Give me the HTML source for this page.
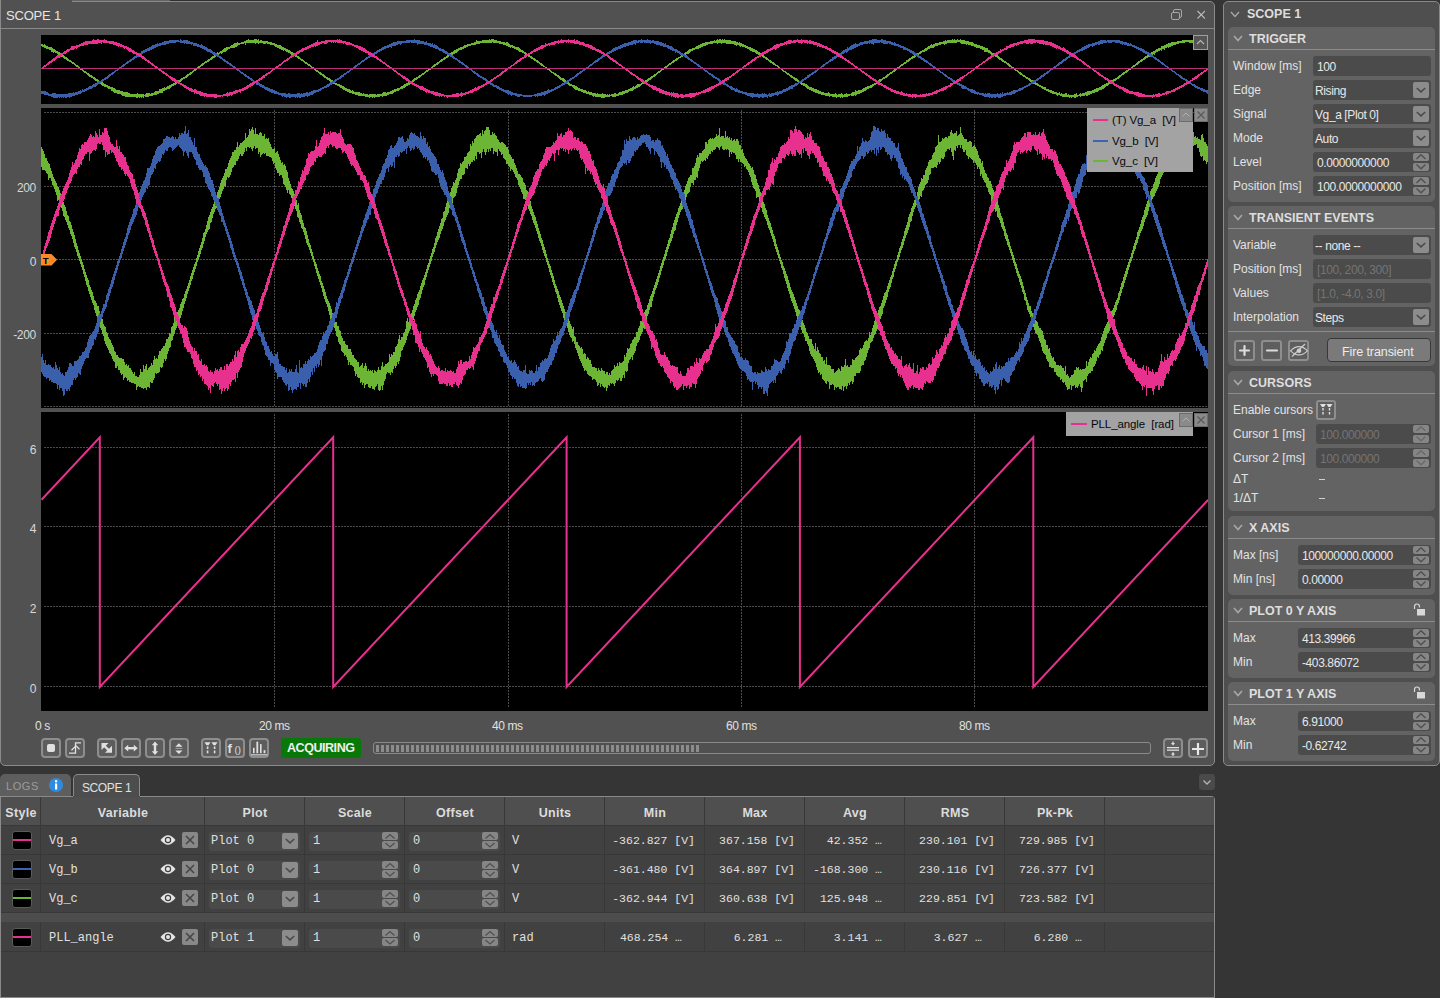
<!DOCTYPE html>
<html><head><meta charset="utf-8">
<style>
*{box-sizing:border-box;margin:0;padding:0}
html,body{width:1440px;height:998px;overflow:hidden;background:#353535;font-family:"Liberation Sans",sans-serif;color:#dcdcdc;position:relative}
.abs{position:absolute}
#scope{position:absolute;left:0;top:1px;width:1215px;height:765px;background:#515151;border:1px solid #8a8a8a;border-radius:0 5px 5px 5px}
.t{position:absolute;white-space:nowrap;line-height:1}
svg{position:absolute;left:0;top:0}
.btn{position:absolute;border:2px solid #8e8e8e;border-radius:4px;background:#5d5d5d}
.yl{font-size:12px;color:#d8d8d8;text-align:right;letter-spacing:-0.3px}
.xl{font-size:12px;color:#e0e0e0;letter-spacing:-0.4px}
.lg{font-size:11.5px;color:#08080c;letter-spacing:-0.1px}
.lb{width:14px;height:14px;background:#8a8a8a;border:1px solid #6c6c6c}
.sh{font-size:12.5px;font-weight:bold;color:#dedede;letter-spacing:0px}
.sec{left:1228px;width:207px;background:#636363;border-radius:5px}
.lbl{font-size:12px;color:#e2e2e2}
.inp{height:20px;background:#4b4b4b;border-radius:3px}
.it{font-size:12px;color:#e8e8e8;letter-spacing:-0.4px}
.itd{font-size:12px;color:#747474;letter-spacing:-0.4px}
.ddb{width:16px;height:16px;background:#8c8c8c;border-radius:2px}
.spb{width:16px;height:8px;background:#868686;border-radius:2px}
.btn2{width:21px;height:21px;border:2px solid #8e8e8e;border-radius:3px;background:#5e5e5e}
.th{font-size:12.5px;font-weight:bold;color:#dcdcdc;letter-spacing:0.3px}
.td{font-family:"Liberation Mono",monospace;font-size:12px;color:#e0e0e0}
</style></head><body>
<div id="scope"></div>
<div class="abs" style="left:0;top:0;width:72px;height:3px;background:#515151;border-left:1px solid #8a8a8a"></div>
<div class="abs" style="left:72px;top:0;width:98px;height:1px;background:#646464"></div>
<div class="abs" style="left:170px;top:0;width:1040px;height:1px;background:#2e2e2e"></div>
<div class="abs" style="left:1px;top:28px;width:1213px;height:1px;background:#8a8a8a"></div>
<div class="t" style="left:6px;top:9px;font-size:13px;color:#e6e6e6;letter-spacing:-0.2px">SCOPE 1</div>
<svg width="1215" height="766" viewBox="0 0 1215 766">
 <rect x="41" y="35" width="1167" height="69" fill="#000"/>
 <rect x="41" y="108" width="1167" height="300" fill="#000"/>
 <rect x="41" y="412" width="1167" height="299" fill="#000"/>
 <g stroke="#4c4c4c" stroke-width="1" stroke-dasharray="2 1" shape-rendering="crispEdges"><line x1="44" y1="112.5" x2="1208.3" y2="112.5"/><line x1="44" y1="186.5" x2="1208.3" y2="186.5"/><line x1="44" y1="259.5" x2="1208.3" y2="259.5"/><line x1="44" y1="333.5" x2="1208.3" y2="333.5"/><line x1="44" y1="406.5" x2="1208.3" y2="406.5"/><line x1="274.5" y1="110" x2="274.5" y2="406"/><line x1="508.5" y1="110" x2="508.5" y2="406"/><line x1="741.5" y1="110" x2="741.5" y2="406"/><line x1="974.5" y1="110" x2="974.5" y2="406"/><line x1="44" y1="447.5" x2="1208.3" y2="447.5"/><line x1="44" y1="526.5" x2="1208.3" y2="526.5"/><line x1="44" y1="606.5" x2="1208.3" y2="606.5"/><line x1="44" y1="686.5" x2="1208.3" y2="686.5"/><line x1="274.5" y1="414" x2="274.5" y2="707"/><line x1="508.5" y1="414" x2="508.5" y2="707"/><line x1="741.5" y1="414" x2="741.5" y2="707"/><line x1="974.5" y1="414" x2="974.5" y2="707"/></g>
 <clipPath id="c0"><rect x="41" y="35" width="1167" height="69"/></clipPath>
 <clipPath id="c1"><rect x="41" y="108" width="1167" height="300"/></clipPath>
 <clipPath id="c2"><rect x="41" y="412" width="1167" height="299"/></clipPath>
 <g clip-path="url(#c0)" fill="none" stroke-width="1" shape-rendering="crispEdges"><path d="M41.5 43.9 V46.4M42.5 44 V47.1M43.5 44.6 V47.2M44.5 44.1 V47.6M45.5 45.1 V48.2M46.5 45.9 V48.6M47.5 45.8 V48.7M48.5 46.5 V49.4M49.5 46.9 V49.7M50.5 47.2 V50.3M51.5 47.4 V51.5M52.5 48 V51.7M53.5 48.8 V52.5M54.5 49 V52.3M55.5 49.9 V53.1M56.5 50.7 V53.3M57.5 51.1 V54.4M58.5 52.1 V54.7M59.5 52.4 V55.3M60.5 53.3 V56.1M61.5 54 V56.7M62.5 54.9 V57.1M63.5 55.1 V58.1M64.5 55.9 V58.5M65.5 56.5 V59.4M66.5 57.1 V59.7M67.5 57.9 V60.5M68.5 58.5 V61M69.5 59.6 V61.7M70.5 60.2 V62.3M71.5 61.1 V63M72.5 61.7 V63.7M73.5 62.2 V64.4M74.5 63 V65.3M75.5 63.6 V65.9M76.5 64.6 V66.6M77.5 65.3 V67.3M78.5 66.2 V68.2M79.5 66.9 V68.8M80.5 67.5 V69.6M81.5 68.3 V70.3M82.5 69 V71.1M83.5 69.7 V71.8M84.5 70.6 V72.5M85.5 71.2 V73.2M86.5 71.9 V74.1M87.5 72.7 V74.8M88.5 73.3 V75.5M89.5 74 V76.5M90.5 74.8 V77M91.5 75.2 V77.7M92.5 76 V78.4M93.5 76.6 V79.4M94.5 77.3 V80M95.5 77.7 V80.9M96.5 78.7 V81.4M97.5 79.2 V82.3M98.5 80.2 V82.6M99.5 80.5 V83.3M100.5 81 V84.3M101.5 81.5 V84.8M102.5 82.1 V85.6M103.5 82.7 V86.1M104.5 83.8 V86.7M105.5 83.8 V87M106.5 84.7 V87.4M107.5 85.3 V87.9M108.5 86.1 V88.5M109.5 86.2 V89.2M110.5 86.6 V89.4M111.5 87 V90.6M112.5 87.2 V91.2M113.5 88 V91.6M114.5 88.4 V92.7M115.5 88.7 V92.5M116.5 89.7 V93.3M117.5 89.5 V93.8M118.5 90.4 V93.8M119.5 90.4 V94.2M120.5 91 V94.4M121.5 90.8 V94.8M122.5 91.3 V95.5M123.5 91.9 V95.8M124.5 91.8 V95.6M125.5 92.1 V96.7M126.5 92.2 V96.6M127.5 92.1 V96.9M128.5 93.2 V97M129.5 92.5 V97.3M130.5 93.5 V96.9M131.5 93.9 V96.9M132.5 93.8 V96.7M133.5 94 V97.1M134.5 93.7 V97.3M135.5 93.9 V97.4M136.5 93.8 V97.8M137.5 93.3 V98.3M138.5 93.9 V97.3M139.5 93.7 V97.7M140.5 94 V97.4M141.5 94.1 V97.7M142.5 94 V97M143.5 94 V98M144.5 94.5 V96.4M145.5 94.2 V96.8M146.5 93.4 V96.8M147.5 93.3 V97M148.5 93.2 V96.7M149.5 93 V96M150.5 93.6 V95.5M151.5 92.7 V95.8M152.5 92.6 V96M153.5 92.5 V95.2M154.5 92.1 V94.7M155.5 90.9 V94.8M156.5 91.2 V94.7M157.5 91 V94.3M158.5 90.5 V93.9M159.5 89.4 V93.3M160.5 89 V92.9M161.5 89 V93.2M162.5 88.3 V92.5M163.5 88.2 V91.4M164.5 86.8 V90.8M165.5 87.5 V90.3M166.5 87 V90.2M167.5 86.3 V89.4M168.5 85.9 V89.4M169.5 85.1 V88.5M170.5 84.8 V87.5M171.5 84.1 V86.8M172.5 84.3 V86.2M173.5 83.4 V85.6M174.5 83.1 V85.2M175.5 82.3 V84.7M176.5 81.7 V84.3M177.5 80.9 V83.4M178.5 80.4 V82.7M179.5 79.7 V82.3M180.5 79 V81.8M181.5 78.2 V80.7M182.5 77.6 V80.4M183.5 77.2 V79.4M184.5 76.5 V79M185.5 75.7 V78.1M186.5 74.9 V77.5M187.5 74.2 V76.8M188.5 73.5 V75.9M189.5 73 V75M190.5 72.3 V74.5M191.5 71.5 V73.7M192.5 70.9 V72.9M193.5 70.2 V72.1M194.5 69.4 V71.2M195.5 68.7 V70.7M196.5 68 V69.8M197.5 67.2 V69.1M198.5 66.4 V68.5M199.5 65.8 V67.5M200.5 64.9 V67M201.5 64.3 V66.2M202.5 63.3 V65.7M203.5 62.8 V65.1M204.5 62.1 V64.3M205.5 61.2 V63.4M206.5 60.6 V62.8M207.5 59.8 V62.1M208.5 59.2 V61.5M209.5 58.6 V60.6M210.5 58 V59.8M211.5 56.7 V59.6M212.5 56.4 V58.8M213.5 55.7 V58.1M214.5 54.6 V57.7M215.5 54.4 V56.7M216.5 53.6 V56M217.5 52.3 V55.3M218.5 52.5 V54.7M219.5 52 V54.2M220.5 51.3 V53.2M221.5 50.8 V53.6M222.5 50 V52.9M223.5 49.4 V52.4M224.5 48.1 V52.4M225.5 47.5 V51.5M226.5 46.8 V50.9M227.5 47 V50.4M228.5 46.9 V49.2M229.5 46.5 V48.5M230.5 45.9 V48.4M231.5 45.1 V48.1M232.5 44.9 V47.6M233.5 44.4 V47.9M234.5 43.2 V47.7M235.5 43.3 V47.1M236.5 43.1 V46.5M237.5 42.4 V46.1M238.5 42.7 V45.3M239.5 42.8 V44.8M240.5 42.5 V44.2M241.5 41.9 V43.8M242.5 41.8 V43.8M243.5 41.6 V43.5M244.5 40.7 V43.4M245.5 40.6 V44.5M246.5 40.1 V43.3M247.5 40 V43.2M248.5 39.4 V43.4M249.5 40.1 V43.3M250.5 40.3 V42.7M251.5 39.9 V42.8M252.5 40 V42.8M253.5 39.8 V42.6M254.5 39.4 V43.3M255.5 39 V43.6M256.5 39.3 V42.8M257.5 39.7 V42.7M258.5 39.1 V44.1M259.5 40.5 V42.5M260.5 40.4 V42.5M261.5 40.2 V42.9M262.5 40.6 V43M263.5 40.6 V44M264.5 40.7 V43.9M265.5 40.5 V44M266.5 41.4 V43.3M267.5 41.4 V43.6M268.5 41.9 V43.9M269.5 41.9 V44.1M270.5 42 V44.5M271.5 41.5 V44.8M272.5 42.5 V45.2M273.5 42.5 V45.4M274.5 43.2 V45.8M275.5 43.7 V47M276.5 44.1 V47.3M277.5 44.5 V47.7M278.5 44.8 V47.9M279.5 45.2 V48.7M280.5 45.1 V49.4M281.5 46.3 V49.6M282.5 46.7 V49.9M283.5 47 V50.6M284.5 48 V50.4M285.5 48.3 V50.7M286.5 49 V51.5M287.5 49.3 V52.1M288.5 50.2 V52.9M289.5 50.2 V53.2M290.5 51.1 V54.3M291.5 51.8 V54.6M292.5 52.2 V55M293.5 52.9 V55.7M294.5 53.4 V56.4M295.5 54.3 V56.9M296.5 55 V57.3M297.5 55.5 V58.3M298.5 56.4 V58.6M299.5 57.1 V59.4M300.5 57.9 V59.8M301.5 58.6 V61.1M302.5 59.3 V61.3M303.5 60.2 V62.1M304.5 60.7 V63M305.5 61.5 V63.7M306.5 62.2 V64.3M307.5 62.7 V65.2M308.5 63.7 V65.6M309.5 64.3 V66.4M310.5 65.3 V67M311.5 65.8 V67.7M312.5 66.5 V68.6M313.5 67.3 V69.4M314.5 68 V70.1M315.5 68.8 V70.8M316.5 69.7 V71.6M317.5 70.1 V72.4M318.5 70.9 V73.2M319.5 71.5 V73.9M320.5 72.3 V74.7M321.5 72.9 V75.3M322.5 73.6 V75.9M323.5 74.3 V76.7M324.5 75.1 V77.5M325.5 75.9 V77.9M326.5 76.5 V79.2M327.5 77.2 V79.6M328.5 77.9 V80.3M329.5 78.2 V81.1M330.5 78.8 V81.9M331.5 80 V82.4M332.5 79.9 V82.8M333.5 80.8 V83.6M334.5 81.6 V84M335.5 82.6 V84.5M336.5 83.1 V85.3M337.5 83.7 V85.6M338.5 83.8 V86.4M339.5 83.9 V87.3M340.5 84.9 V88.3M341.5 85.3 V88.4M342.5 85.7 V89.4M343.5 86.4 V89.6M344.5 87.2 V90.2M345.5 87.7 V90.7M346.5 87.9 V91.2M347.5 88.5 V91.5M348.5 89 V92.3M349.5 89.4 V92.7M350.5 89.8 V93.2M351.5 90.6 V92.9M352.5 89.9 V94.3M353.5 91.1 V94.4M354.5 91.6 V94.1M355.5 91.8 V94.7M356.5 91.8 V94.9M357.5 92.4 V94.8M358.5 92.2 V96.4M359.5 92.4 V96.3M360.5 93.1 V96.1M361.5 93.3 V95.9M362.5 93.6 V96.4M363.5 93.2 V96.3M364.5 94.2 V96.2M365.5 94.2 V96.7M366.5 93.6 V97M367.5 93.6 V97.4M368.5 94.5 V97.3M369.5 94.4 V98M370.5 94.4 V97.3M371.5 93.9 V97.4M372.5 94.2 V97.9M373.5 93.8 V97.1M374.5 94 V97.7M375.5 94.4 V97.2M376.5 94.5 V97.3M377.5 94.1 V96.8M378.5 93.6 V96.5M379.5 93.7 V97.4M380.5 93.6 V96.4M381.5 93.6 V96.2M382.5 92.6 V96.8M383.5 91.9 V96.4M384.5 92.3 V96M385.5 91.9 V96.2M386.5 92.5 V95.8M387.5 92.3 V94.9M388.5 91.9 V94.6M389.5 91.7 V93.9M390.5 91.2 V94M391.5 90.9 V93.5M392.5 89.9 V94.1M393.5 89.9 V92.7M394.5 89.3 V92.2M395.5 88.9 V92M396.5 89 V91.2M397.5 88.2 V91M398.5 87.7 V90.9M399.5 87.8 V89.9M400.5 87.1 V89.3M401.5 85.5 V88.9M402.5 85.6 V88.8M403.5 85.1 V87.9M404.5 84.3 V87.9M405.5 83.5 V87.2M406.5 83 V86.1M407.5 82.9 V86.1M408.5 82.4 V85.1M409.5 81.6 V84.6M410.5 81.1 V83.7M411.5 80.5 V82.9M412.5 79.6 V82.3M413.5 79 V81.9M414.5 78.4 V81.3M415.5 78 V80.4M416.5 77 V79.7M417.5 76.6 V79M418.5 76 V78.4M419.5 75.4 V77.7M420.5 74.6 V76.9M421.5 73.9 V76M422.5 73 V75.4M423.5 72.5 V74.6M424.5 71.7 V73.8M425.5 71 V73.4M426.5 70.4 V72.3M427.5 69.6 V71.8M428.5 68.9 V71M429.5 68.2 V70M430.5 67.5 V69.5M431.5 66.8 V68.6M432.5 66.1 V68M433.5 65.1 V67.2M434.5 64.4 V66.5M435.5 63.9 V65.8M436.5 63.1 V65.2M437.5 62.1 V64.5M438.5 61.5 V63.6M439.5 60.9 V63.1M440.5 60.2 V62.2M441.5 59.3 V61.5M442.5 58.5 V61M443.5 57.8 V60.2M444.5 57.3 V59.5M445.5 56.6 V59M446.5 55.8 V58.1M447.5 54.5 V57.6M448.5 54.2 V56.9M449.5 53.4 V56.3M450.5 52.9 V56.2M451.5 51.9 V55.7M452.5 51.6 V55M453.5 50.6 V54.4M454.5 50 V53.9M455.5 50.1 V53M456.5 49.2 V52.5M457.5 48.7 V52.3M458.5 48.3 V51M459.5 48 V50.4M460.5 47.4 V50.3M461.5 46.9 V49.7M462.5 46.5 V49.2M463.5 46 V49M464.5 45.4 V48.1M465.5 44.7 V47.8M466.5 44.6 V47.4M467.5 44.4 V46.9M468.5 44 V46.3M469.5 43.7 V45.6M470.5 43.5 V45.6M471.5 43.1 V45.3M472.5 42.8 V45.1M473.5 42.6 V44.7M474.5 42 V44.9M475.5 42 V45.4M476.5 40 V44.4M477.5 41.2 V44.3M478.5 40.8 V43.6M479.5 40.7 V43.6M480.5 40.6 V43.1M481.5 40.6 V43.1M482.5 40.2 V43.4M483.5 39.6 V43.4M484.5 40.3 V43M485.5 39.9 V43M486.5 40.1 V43M487.5 39.9 V43M488.5 39.5 V43M489.5 39.1 V42.9M490.5 39.7 V43.2M491.5 39.2 V42.8M492.5 39.4 V42.4M493.5 38.8 V42.7M494.5 39.6 V42.9M495.5 39.8 V42.8M496.5 39.9 V42.9M497.5 40.7 V42.7M498.5 40.8 V43.1M499.5 41.1 V43.7M500.5 41.2 V44M501.5 41.6 V44.4M502.5 41.5 V44.4M503.5 41.9 V44.9M504.5 41.9 V44.9M505.5 42.7 V45.3M506.5 42.4 V45.6M507.5 42.4 V46.1M508.5 42.9 V46.5M509.5 44 V46.6M510.5 44.5 V47.5M511.5 45 V47.3M512.5 45.3 V47.5M513.5 45.7 V48.2M514.5 45.8 V48.8M515.5 46.6 V49.4M516.5 46.8 V49.5M517.5 47.1 V50.2M518.5 47.3 V51M519.5 47.8 V52M520.5 49.1 V52.1M521.5 49.7 V52.3M522.5 50.3 V52.6M523.5 51 V53.4M524.5 51.6 V54M525.5 51.6 V54.7M526.5 52.8 V55.1M527.5 53.7 V55.8M528.5 54.3 V56.5M529.5 55 V57.1M530.5 55.6 V57.7M531.5 56.1 V58.5M532.5 56.9 V59.2M533.5 57.7 V60.2M534.5 58 V60.7M535.5 58.9 V61.3M536.5 59.7 V62M537.5 60.3 V62.6M538.5 61.2 V63.4M539.5 61.8 V64.2M540.5 62.5 V64.8M541.5 63.3 V65.5M542.5 64 V66M543.5 64.9 V66.8M544.5 65.7 V67.4M545.5 66.5 V68.3M546.5 67.2 V69.1M547.5 67.9 V69.6M548.5 68.7 V70.3M549.5 69.4 V71.4M550.5 69.9 V72M551.5 70.6 V72.7M552.5 71.5 V73.3M553.5 72.1 V74.3M554.5 72.6 V74.8M555.5 73.2 V75.6M556.5 74.1 V76.4M557.5 74.8 V77.4M558.5 75 V77.8M559.5 75.7 V78.6M560.5 76.6 V79.6M561.5 77.5 V80.1M562.5 78.2 V81M563.5 78.3 V81.5M564.5 79.2 V82.3M565.5 80.3 V83M566.5 80.8 V83.5M567.5 81.4 V84M568.5 81.6 V84.9M569.5 82.6 V85.7M570.5 83.6 V85.5M571.5 83.8 V86.3M572.5 84.5 V87M573.5 85 V88M574.5 85.1 V88.5M575.5 85.5 V89.6M576.5 86 V90.3M577.5 87 V90.4M578.5 87.6 V90.8M579.5 87.6 V91.2M580.5 88.6 V91.2M581.5 89.3 V92M582.5 89 V92.4M583.5 90.1 V92.7M584.5 89.6 V92.5M585.5 89.6 V93.1M586.5 90.8 V93.6M587.5 91.5 V93.6M588.5 91.1 V94.1M589.5 92 V94.9M590.5 91.9 V95M591.5 92 V95.4M592.5 92.8 V95.9M593.5 92.6 V96.5M594.5 93.1 V96.2M595.5 93.4 V96.5M596.5 93.7 V97.2M597.5 92.6 V97.2M598.5 93.9 V96.7M599.5 94 V96.9M600.5 94 V97.2M601.5 94.2 V97.9M602.5 93.3 V97.6M603.5 93.7 V98M604.5 93.6 V98.2M605.5 93.5 V97.4M606.5 94.6 V97.3M607.5 94.4 V96.8M608.5 94.6 V97.2M609.5 94.2 V96.6M610.5 94.5 V96.4M611.5 94.2 V96.3M612.5 93.7 V96.9M613.5 93.5 V96.8M614.5 93.2 V96.5M615.5 93.4 V96.8M616.5 93.5 V95.8M617.5 93.6 V95.7M618.5 92.9 V95.6M619.5 92.4 V95M620.5 92.2 V95.1M621.5 91.9 V94.7M622.5 91.2 V94.7M623.5 91.2 V94.1M624.5 90.6 V93.6M625.5 90.4 V92.9M626.5 90.1 V92.9M627.5 89.5 V93.1M628.5 89.2 V92M629.5 88.9 V91.4M630.5 87.6 V91.1M631.5 88 V91M632.5 86.5 V90.5M633.5 86.4 V90M634.5 86.5 V89.2M635.5 85.9 V88.8M636.5 85.1 V88.4M637.5 84.3 V87.5M638.5 83.8 V86.9M639.5 83.8 V86.5M640.5 83.5 V85.8M641.5 82.6 V85.2M642.5 82.3 V84.4M643.5 81.6 V83.5M644.5 80.6 V83.1M645.5 80.4 V82.6M646.5 79.6 V82M647.5 78.5 V81.9M648.5 78.2 V81M649.5 77.5 V80.2M650.5 76.5 V79.5M651.5 76 V78.7M652.5 75.6 V77.8M653.5 75 V77M654.5 74 V76.5M655.5 73.6 V75.6M656.5 72.6 V75M657.5 72.1 V74M658.5 71.2 V73.4M659.5 70.5 V72.5M660.5 70 V72.1M661.5 69.2 V71.3M662.5 68.6 V70.3M663.5 67.7 V69.8M664.5 66.9 V69M665.5 66.2 V68.3M666.5 65.6 V67.6M667.5 64.8 V66.9M668.5 63.9 V66M669.5 63.2 V65.3M670.5 62.6 V64.5M671.5 61.8 V63.8M672.5 61.2 V63.2M673.5 60.4 V62.6M674.5 59.8 V61.9M675.5 58.8 V61.4M676.5 58.1 V60.5M677.5 57.6 V59.8M678.5 56.7 V59.2M679.5 56.5 V58.3M680.5 55.7 V57.7M681.5 55.2 V57.2M682.5 54.2 V56.5M683.5 53.7 V55.8M684.5 52.7 V55.5M685.5 51.8 V54.8M686.5 51.6 V54.4M687.5 50.9 V53.9M688.5 49.9 V53.9M689.5 49.4 V52.7M690.5 48.8 V51.7M691.5 48.8 V51.2M692.5 48.2 V50.6M693.5 47.9 V50.3M694.5 47.5 V49.7M695.5 46.7 V49.1M696.5 46.2 V49M697.5 45.7 V48.6M698.5 44.7 V48.5M699.5 44.5 V47.9M700.5 44.1 V47.8M701.5 44.1 V46.9M702.5 43.3 V46.5M703.5 43.2 V45.8M704.5 43 V45.9M705.5 42.1 V45.7M706.5 42.3 V45.2M707.5 41.8 V45M708.5 41.8 V44.4M709.5 41.6 V44.2M710.5 40.9 V44.2M711.5 40.8 V43.6M712.5 40.8 V43.5M713.5 40.5 V43.3M714.5 40.1 V42.8M715.5 40.6 V42.8M716.5 39.8 V43.1M717.5 39.3 V43.5M718.5 39.5 V43.1M719.5 38.7 V43M720.5 39.2 V43.1M721.5 39.8 V44.1M722.5 39.4 V42.9M723.5 40 V42.8M724.5 39.3 V42.5M725.5 39.6 V43M726.5 39.7 V43.5M727.5 39.6 V43.5M728.5 40.3 V43.5M729.5 39.7 V43.6M730.5 40.3 V43.5M731.5 40.9 V43.8M732.5 40.6 V44M733.5 40.7 V44M734.5 40.8 V44.9M735.5 40.7 V44.9M736.5 41.8 V45.5M737.5 42.4 V44.9M738.5 42.7 V44.9M739.5 42.3 V46.1M740.5 43.2 V46.7M741.5 43.4 V46.3M742.5 43.7 V46.8M743.5 44.4 V46.8M744.5 44.9 V47.4M745.5 45.3 V47.9M746.5 45.6 V48.3M747.5 46.3 V48.8M748.5 46.6 V49M749.5 46.8 V49.8M750.5 47.3 V50.5M751.5 47.9 V50.6M752.5 48.3 V51.8M753.5 48.8 V52.3M754.5 49.2 V52.4M755.5 50.2 V52.9M756.5 50.4 V53.7M757.5 51.2 V53.9M758.5 52.1 V54.5M759.5 52.3 V55.4M760.5 53.2 V55.8M761.5 53.7 V56.4M762.5 54.4 V57M763.5 55.4 V57.7M764.5 55.6 V58.4M765.5 56.7 V59M766.5 57.2 V59.6M767.5 58.1 V60.4M768.5 58.6 V61.1M769.5 59.5 V61.8M770.5 60.1 V62.5M771.5 60.6 V63.2M772.5 61.6 V63.7M773.5 62.4 V64.5M774.5 63.1 V65.2M775.5 63.8 V65.8M776.5 64.5 V66.4M777.5 65.4 V67.3M778.5 66.1 V68M779.5 66.8 V68.8M780.5 67.5 V69.4M781.5 68.4 V70.2M782.5 68.9 V70.9M783.5 69.6 V71.6M784.5 70.5 V72.4M785.5 71.2 V73.2M786.5 71.9 V73.9M787.5 72.5 V74.7M788.5 73 V75.3M789.5 73.9 V76.1M790.5 74.5 V76.9M791.5 75.1 V77.9M792.5 75.6 V78.3M793.5 76.5 V79.1M794.5 77 V80.1M795.5 78 V80.6M796.5 78.3 V81M797.5 79.2 V82.2M798.5 80 V82.6M799.5 80.6 V83.3M800.5 81.2 V83.7M801.5 81.7 V84.6M802.5 82.8 V85M803.5 83.2 V85.6M804.5 83.4 V86.2M805.5 84.1 V87.1M806.5 84.2 V87.7M807.5 85 V88.5M808.5 85.9 V89.3M809.5 86.5 V89.5M810.5 86.5 V89.7M811.5 87.4 V90.7M812.5 87.5 V91.3M813.5 87.6 V91.9M814.5 88.5 V92.3M815.5 88.6 V92.8M816.5 89.2 V92.8M817.5 90 V93.3M818.5 90.1 V94M819.5 90.6 V93.8M820.5 91.2 V94.3M821.5 91.5 V94.6M822.5 91.9 V94.9M823.5 92.4 V94.7M824.5 92.8 V94.7M825.5 92.9 V95.9M826.5 92.9 V96.4M827.5 92.6 V96.2M828.5 91.5 V96.1M829.5 93.2 V96.5M830.5 93.7 V96.3M831.5 94 V96.3M832.5 93.7 V97M833.5 93.8 V97.2M834.5 93.5 V97.2M835.5 93 V97.2M836.5 93.5 V98M837.5 94.5 V97.3M838.5 94 V97M839.5 94 V96.9M840.5 93.8 V98.1M841.5 93 V97.1M842.5 94.1 V97.5M843.5 94.6 V97.2M844.5 93.8 V97M845.5 93.8 V97.4M846.5 93.4 V96.6M847.5 94.1 V96.6M848.5 94.1 V96.1M849.5 94 V95.7M850.5 93.6 V95.2M851.5 92.8 V95.5M852.5 92.4 V95.7M853.5 91.7 V95.8M854.5 91.6 V95.4M855.5 90.4 V95.7M856.5 91 V94.8M857.5 90.5 V94.4M858.5 90.3 V93.6M859.5 90.2 V93.6M860.5 89.6 V92.6M861.5 89.6 V92.5M862.5 88.8 V91.6M863.5 88.3 V92M864.5 87.7 V90.7M865.5 87.4 V90.6M866.5 86.8 V90.1M867.5 86.2 V89.2M868.5 86.2 V88.9M869.5 85.8 V88.3M870.5 85.1 V87.9M871.5 84.8 V87.6M872.5 84.2 V86.9M873.5 83.8 V86.1M874.5 83 V85.3M875.5 82.5 V84.8M876.5 81.4 V84.3M877.5 80.7 V83.9M878.5 80 V82.9M879.5 79 V82.4M880.5 78.6 V81.6M881.5 78.6 V80.8M882.5 77.5 V80.4M883.5 77.2 V79.4M884.5 76.6 V78.8M885.5 75.8 V78.1M886.5 75 V77.7M887.5 74.3 V76.7M888.5 73.6 V75.9M889.5 72.9 V75.2M890.5 72.2 V74.4M891.5 71.6 V73.7M892.5 70.7 V72.9M893.5 70.2 V72.1M894.5 69.4 V71.5M895.5 68.9 V70.6M896.5 68.2 V69.8M897.5 67.4 V69.2M898.5 66.6 V68.5M899.5 65.6 V67.9M900.5 64.9 V67M901.5 64.2 V66.3M902.5 63.6 V65.5M903.5 62.8 V65M904.5 62.2 V64M905.5 61.5 V63.6M906.5 60.4 V62.8M907.5 59.7 V62.1M908.5 59.1 V61.5M909.5 58.2 V61M910.5 57.6 V60.3M911.5 56.5 V59.4M912.5 56.4 V59M913.5 55.7 V58.4M914.5 54.8 V57.7M915.5 54.4 V56.7M916.5 53.7 V56M917.5 53 V55.9M918.5 52.7 V54.8M919.5 51.9 V54.2M920.5 51 V53.7M921.5 50.5 V53.3M922.5 50 V52.4M923.5 49.6 V51.8M924.5 49.1 V51.5M925.5 48 V50.7M926.5 47.9 V50.8M927.5 46.8 V49.9M928.5 45.6 V49.3M929.5 46.1 V49.4M930.5 45.4 V48.4M931.5 44.3 V48.3M932.5 44.5 V47.8M933.5 44.2 V47.7M934.5 44.1 V47.3M935.5 43.4 V46.4M936.5 43.4 V46.2M937.5 42.7 V45.8M938.5 42.8 V45.2M939.5 42.4 V44.6M940.5 42 V44.8M941.5 41.9 V44.2M942.5 41.5 V43.9M943.5 41.3 V43.8M944.5 40.6 V44.9M945.5 40 V43.8M946.5 40.6 V43.6M947.5 40.3 V43.4M948.5 40.3 V43.4M949.5 39.9 V42.9M950.5 39.9 V42.7M951.5 40.1 V42.7M952.5 39.4 V42.7M953.5 39.6 V42.7M954.5 38.6 V42.6M955.5 39.8 V42.7M956.5 39.8 V43.2M957.5 39.2 V42.4M958.5 40 V42.1M959.5 39.5 V42.1M960.5 39.2 V42.7M961.5 40 V43.7M962.5 39.7 V44.1M963.5 40.4 V43.9M964.5 40.2 V44.3M965.5 40.7 V43.7M966.5 40.7 V44.7M967.5 41.2 V44.4M968.5 41.1 V45.4M969.5 41.6 V45.3M970.5 41.9 V44.8M971.5 42.1 V45.5M972.5 42.2 V45.9M973.5 42.7 V46.3M974.5 43.6 V46.5M975.5 43.7 V47.2M976.5 43.8 V47.7M977.5 44.9 V48M978.5 44.9 V47.6M979.5 45.4 V48.1M980.5 46 V48.9M981.5 46.2 V49M982.5 46.3 V49.5M983.5 46.7 V50.3M984.5 47 V51.7M985.5 48 V51.9M986.5 48.4 V52M987.5 48.1 V52.3M988.5 49.6 V53.3M989.5 50.2 V53.3M990.5 51.4 V53.7M991.5 51.9 V55M992.5 52.5 V55M993.5 53 V55.9M994.5 53.7 V56.4M995.5 54.4 V56.9M996.5 55 V57.4M997.5 55.4 V58.4M998.5 56 V58.9M999.5 56.7 V59.5M1000.5 57.5 V60.4M1001.5 58.3 V60.9M1002.5 59.2 V61.5M1003.5 59.8 V62.3M1004.5 60.5 V62.7M1005.5 61.3 V63.3M1006.5 61.9 V64.1M1007.5 62.7 V65M1008.5 63.3 V65.8M1009.5 64.3 V66.5M1010.5 65.1 V67M1011.5 65.8 V67.8M1012.5 66.5 V68.5M1013.5 67.2 V69.3M1014.5 68.1 V69.8M1015.5 68.7 V70.6M1016.5 69.6 V71.3M1017.5 70.1 V72.4M1018.5 70.7 V73.1M1019.5 71.5 V73.9M1020.5 72.4 V74.6M1021.5 72.9 V75.2M1022.5 73.7 V76M1023.5 74.5 V76.7M1024.5 75.1 V77.3M1025.5 75.9 V77.9M1026.5 76.5 V78.7M1027.5 77 V79.3M1028.5 77.9 V79.9M1029.5 78.3 V80.9M1030.5 78.7 V81.5M1031.5 79.7 V82.5M1032.5 80.3 V83M1033.5 80.4 V83.7M1034.5 81.4 V84.3M1035.5 82.2 V84.7M1036.5 83.1 V85.4M1037.5 83.1 V85.8M1038.5 83.6 V86.3M1039.5 84.9 V86.8M1040.5 85.3 V87.4M1041.5 85.7 V87.9M1042.5 86.3 V88.8M1043.5 86.8 V89M1044.5 87 V89.9M1045.5 87.3 V90.2M1046.5 88.6 V90.5M1047.5 88.7 V90.9M1048.5 89.3 V91.5M1049.5 89.8 V91.8M1050.5 90 V92.5M1051.5 90.2 V93.1M1052.5 90.6 V93.5M1053.5 91.2 V93.7M1054.5 91.7 V94M1055.5 91.7 V94.3M1056.5 92.4 V94.7M1057.5 92.7 V95.9M1058.5 92.9 V94.8M1059.5 91.9 V95.4M1060.5 93.5 V95.7M1061.5 93.3 V95.9M1062.5 93.7 V96.8M1063.5 93.5 V96.5M1064.5 93.6 V97.3M1065.5 93.3 V97.3M1066.5 93.4 V96.9M1067.5 94.5 V97M1068.5 94.2 V97.3M1069.5 94.6 V97.6M1070.5 94.7 V97.4M1071.5 94.8 V97.8M1072.5 94.5 V97.4M1073.5 94.6 V97.4M1074.5 94.4 V97.8M1075.5 94.3 V97.5M1076.5 93.4 V97M1077.5 94.8 V96.7M1078.5 94.6 V96.3M1079.5 94 V96.2M1080.5 93.4 V96.5M1081.5 93.5 V96.2M1082.5 92.9 V95.9M1083.5 92.8 V96.3M1084.5 92.5 V96.2M1085.5 92.4 V95.3M1086.5 92.2 V95.7M1087.5 91.2 V95.9M1088.5 91.2 V94.9M1089.5 90.7 V95M1090.5 91.1 V94.1M1091.5 90.8 V93.8M1092.5 90.1 V93.4M1093.5 89.6 V93.4M1094.5 89.2 V92.7M1095.5 89.4 V92M1096.5 88.3 V91.7M1097.5 88.3 V91.5M1098.5 88.1 V90.5M1099.5 87 V90.3M1100.5 86.6 V89.6M1101.5 85.8 V89.6M1102.5 85.3 V89.4M1103.5 84.6 V88.7M1104.5 84.1 V87.8M1105.5 83.9 V87M1106.5 83.4 V86.4M1107.5 82.7 V86M1108.5 82.4 V85.1M1109.5 81.9 V84.4M1110.5 81.3 V84.1M1111.5 80.4 V83.5M1112.5 79.9 V82.7M1113.5 78.8 V82.1M1114.5 78.5 V81.3M1115.5 78.1 V80.7M1116.5 77.6 V80M1117.5 76.6 V79.3M1118.5 75.6 V78.6M1119.5 75.1 V77.8M1120.5 74.6 V77.1M1121.5 73.7 V76.4M1122.5 73.2 V75.4M1123.5 72.3 V74.7M1124.5 72 V74.1M1125.5 71 V73.2M1126.5 70.4 V72.5M1127.5 69.7 V71.7M1128.5 69.1 V70.9M1129.5 68.3 V70.2M1130.5 67.7 V69.5M1131.5 66.9 V68.7M1132.5 66.2 V67.9M1133.5 65.4 V67.3M1134.5 64.7 V66.6M1135.5 63.8 V65.9M1136.5 63 V65.3M1137.5 62.2 V64.5M1138.5 61.4 V63.7M1139.5 60.8 V63.2M1140.5 60.1 V62.4M1141.5 59.4 V61.5M1142.5 58.9 V60.9M1143.5 57.7 V60.3M1144.5 57.2 V59.5M1145.5 56.3 V59.2M1146.5 55.8 V58.4M1147.5 54.8 V57.8M1148.5 54.1 V57.2M1149.5 53.6 V56.8M1150.5 52.8 V56.1M1151.5 52 V55.5M1152.5 51.9 V55.1M1153.5 50.6 V54.1M1154.5 50.5 V54.6M1155.5 49.6 V52.8M1156.5 49.4 V52.3M1157.5 49 V51.6M1158.5 48.3 V50.9M1159.5 47.7 V50.8M1160.5 47.5 V50.3M1161.5 46.1 V50.7M1162.5 46 V49.4M1163.5 45.7 V49M1164.5 45 V49.8M1165.5 44.8 V48.2M1166.5 44.3 V47.7M1167.5 44.3 V47.2M1168.5 43 V47.5M1169.5 42.5 V46.9M1170.5 42.7 V47M1171.5 41.7 V46.4M1172.5 42.4 V45.5M1173.5 42.4 V44.8M1174.5 41.9 V44.6M1175.5 41.5 V45M1176.5 41.6 V44.2M1177.5 41.4 V43.6M1178.5 41 V43.8M1179.5 41.1 V43M1180.5 40.7 V42.9M1181.5 40.5 V43.2M1182.5 40 V43M1183.5 40.4 V42.5M1184.5 40.2 V42.8M1185.5 40.2 V42.3M1186.5 40.3 V42M1187.5 39.9 V42.1M1188.5 40 V42.4M1189.5 39.7 V42.8M1190.5 40.1 V42.5M1191.5 40.1 V42.9M1192.5 39.9 V42.6M1193.5 40.4 V42.5M1194.5 40.3 V42.5M1195.5 40.3 V43.3M1196.5 40.9 V44M1197.5 41 V43.1M1198.5 40.7 V44M1199.5 40.7 V44.5M1200.5 40.7 V44.5M1201.5 41.1 V44.5M1202.5 40.7 V44.5M1203.5 41.6 V44.9M1204.5 42.1 V45.1M1205.5 42.9 V44.8M1206.5 43.2 V45M1207.5 43.6 V45.4" stroke="#6cb535"/><path d="M41.5 90.9 V93.6M42.5 90.5 V93.8M43.5 91.1 V94M44.5 91.2 V95.1M45.5 91.4 V95.4M46.5 92 V95.2M47.5 92.4 V95.2M48.5 93 V95.5M49.5 93.6 V95.6M50.5 93.7 V96.1M51.5 93.9 V96.5M52.5 92.9 V97M53.5 93 V98.3M54.5 92.7 V97.5M55.5 93.3 V98.3M56.5 93.5 V98.3M57.5 94.1 V97.5M58.5 93.9 V97.2M59.5 94.2 V97.8M60.5 94.2 V97.2M61.5 94.2 V97.5M62.5 94.1 V97.4M63.5 93.7 V97.8M64.5 93.9 V97.1M65.5 94 V98M66.5 93.7 V97.6M67.5 93.6 V96.9M68.5 93.2 V97.3M69.5 92.8 V97.6M70.5 92.9 V97.2M71.5 92.6 V96.9M72.5 93 V96.1M73.5 92.4 V96.1M74.5 92.8 V95.7M75.5 91.9 V95.4M76.5 91.6 V95.2M77.5 91.7 V94.9M78.5 91.2 V94.3M79.5 90.6 V94M80.5 90.3 V94M81.5 90.5 V93M82.5 88.9 V92.4M83.5 89.7 V92M84.5 89 V91.5M85.5 88.8 V91.4M86.5 88 V91.4M87.5 88 V90.2M88.5 86.8 V90.1M89.5 86.2 V89.3M90.5 86.3 V88.9M91.5 85.7 V88.5M92.5 85.3 V88.1M93.5 84.3 V87.3M94.5 83.9 V86.7M95.5 83.1 V86.6M96.5 82.8 V85.8M97.5 82 V85.4M98.5 81.4 V84.3M99.5 80.8 V83.8M100.5 80.6 V82.9M101.5 79.8 V82.3M102.5 78.9 V82M103.5 78.6 V80.8M104.5 77.9 V80.4M105.5 77.3 V80M106.5 76.7 V79M107.5 75.8 V78.5M108.5 74.9 V77.9M109.5 74.2 V77.1M110.5 73.5 V76.3M111.5 72.9 V75.3M112.5 72.3 V74.6M113.5 71.7 V74M114.5 71 V73.2M115.5 70.4 V72.4M116.5 69.7 V71.4M117.5 68.9 V70.8M118.5 68.1 V69.9M119.5 67.4 V69.2M120.5 66.8 V68.5M121.5 66 V67.8M122.5 64.9 V67.2M123.5 64.4 V66.6M124.5 63.8 V65.7M125.5 62.8 V65.1M126.5 62.1 V64.2M127.5 61.4 V63.7M128.5 60.8 V62.9M129.5 60.1 V62.4M130.5 59.2 V61.6M131.5 58.5 V61M132.5 57.8 V60.1M133.5 57.1 V59.9M134.5 56.1 V58.8M135.5 55.5 V58.4M136.5 54.9 V57.6M137.5 54 V57.1M138.5 53.6 V56.5M139.5 52.5 V56M140.5 52.5 V54.9M141.5 51.4 V54.8M142.5 51.2 V53.8M143.5 49.7 V53.4M144.5 49.7 V53M145.5 48.5 V52M146.5 48.6 V51.5M147.5 48.3 V51.3M148.5 47.7 V51.1M149.5 47.4 V50.6M150.5 46.8 V49.9M151.5 46.4 V49.5M152.5 45 V49.2M153.5 45 V48.6M154.5 44.5 V48.1M155.5 43.9 V48M156.5 43.8 V47.4M157.5 43.4 V46.8M158.5 43.5 V46.1M159.5 43.4 V45.7M160.5 42.5 V45.8M161.5 42.5 V45.4M162.5 42.2 V44.9M163.5 41.5 V44.9M164.5 41.3 V44.7M165.5 41.1 V44.6M166.5 41.1 V44M167.5 41.1 V44M168.5 40.8 V44.4M169.5 40.3 V43M170.5 39.6 V42.9M171.5 40.2 V42.9M172.5 39.8 V42.7M173.5 40 V42.9M174.5 39.6 V42.9M175.5 39.6 V42.5M176.5 40.3 V42.1M177.5 40.3 V41.8M178.5 40.3 V42M179.5 40.6 V42M180.5 39.4 V42.6M181.5 40.1 V42.9M182.5 40.5 V42.7M183.5 39.9 V42.9M184.5 39.6 V43.8M185.5 40.3 V43.2M186.5 40.3 V44.4M187.5 39.7 V44M188.5 40.5 V43.9M189.5 41.2 V43.8M190.5 41.8 V43.8M191.5 41.8 V44.6M192.5 42.1 V44.4M193.5 42.7 V45.7M194.5 42.9 V46M195.5 42.5 V46.3M196.5 43.1 V46.2M197.5 43.5 V46.6M198.5 44.2 V47.1M199.5 44.5 V47.4M200.5 45.1 V47.8M201.5 44.4 V47.8M202.5 45.2 V48.6M203.5 46.1 V49.2M204.5 46.3 V49.9M205.5 47.4 V49.8M206.5 47.4 V50.8M207.5 47.7 V51.5M208.5 48.7 V52.1M209.5 49.2 V52.4M210.5 49.2 V53.1M211.5 50.1 V53.3M212.5 50.9 V54M213.5 51.6 V54.6M214.5 52.1 V54.7M215.5 53.1 V55.7M216.5 53.4 V56M217.5 53.6 V57.2M218.5 54.7 V57.3M219.5 55.6 V58.3M220.5 56.1 V58.5M221.5 57 V59.2M222.5 57.9 V60.2M223.5 58.5 V60.7M224.5 59.3 V61.6M225.5 59.9 V62M226.5 60.5 V62.9M227.5 61.1 V63.7M228.5 62 V64.2M229.5 62.6 V64.9M230.5 63.2 V65.6M231.5 64.1 V66.3M232.5 65.1 V66.9M233.5 65.7 V67.8M234.5 66.4 V68.5M235.5 67.2 V69.1M236.5 67.8 V69.8M237.5 68.8 V70.5M238.5 69.3 V71.3M239.5 70.1 V72.1M240.5 70.9 V72.9M241.5 71.5 V73.5M242.5 72.3 V74.3M243.5 72.8 V75M244.5 73.5 V75.9M245.5 74.3 V76.7M246.5 75 V77.4M247.5 75.6 V78.2M248.5 76.3 V78.7M249.5 77.2 V79.3M250.5 77.6 V79.9M251.5 78.4 V80.7M252.5 79 V81.2M253.5 79.8 V82M254.5 80.6 V82.8M255.5 80.7 V83.3M256.5 81.5 V84.8M257.5 82.1 V85.2M258.5 82.4 V85.3M259.5 83.1 V86.1M260.5 83.9 V86.9M261.5 84 V87.4M262.5 84.9 V87.7M263.5 85.3 V88.1M264.5 86.2 V89.1M265.5 86.9 V89.5M266.5 87 V90.1M267.5 87.1 V90.6M268.5 87.5 V90.8M269.5 88.2 V91.8M270.5 88.5 V92.4M271.5 88.7 V92.9M272.5 89.1 V92.9M273.5 90 V93M274.5 90.3 V93.8M275.5 91 V93.6M276.5 90.8 V93.8M277.5 92.2 V94.2M278.5 92.2 V94.7M279.5 92.7 V95M280.5 92.6 V95M281.5 92.8 V96M282.5 92.8 V96.8M283.5 92.9 V96.4M284.5 93.2 V96.7M285.5 92.9 V97.4M286.5 94 V97.8M287.5 93.8 V97.3M288.5 93.1 V97.2M289.5 93.4 V98.2M290.5 93.9 V97.5M291.5 93.6 V97.3M292.5 94.4 V97.1M293.5 94.2 V97M294.5 94.4 V97.4M295.5 93.6 V98.3M296.5 94 V97.1M297.5 93.2 V98.1M298.5 93.4 V97.2M299.5 93.3 V97.7M300.5 93.7 V97.6M301.5 93.3 V97.3M302.5 93.6 V96.9M303.5 93.2 V97.3M304.5 92.7 V97.2M305.5 93.2 V96.4M306.5 92.2 V96.3M307.5 92.3 V96.7M308.5 92.5 V95.5M309.5 91.5 V95.6M310.5 91.5 V95.3M311.5 91 V94.8M312.5 90.8 V94.5M313.5 90.4 V94.2M314.5 90.2 V93.2M315.5 90 V93.2M316.5 89.8 V92.2M317.5 89.6 V91.9M318.5 88.8 V91.5M319.5 88.6 V90.7M320.5 88.2 V90.6M321.5 87.8 V89.9M322.5 87.2 V89.3M323.5 86.8 V89M324.5 86.3 V88.4M325.5 85.5 V88.2M326.5 85.1 V87.6M327.5 84.2 V86.8M328.5 83.7 V86.6M329.5 83.1 V85.6M330.5 82.2 V85.2M331.5 82 V84.5M332.5 81.4 V84.4M333.5 80.8 V83.2M334.5 80 V82.7M335.5 79.4 V81.9M336.5 78.9 V81.1M337.5 78.4 V80.3M338.5 77.7 V79.8M339.5 76.8 V79M340.5 76.3 V78.5M341.5 75.4 V77.6M342.5 74.7 V77.1M343.5 74.1 V76.5M344.5 73.2 V75.4M345.5 72.6 V74.8M346.5 71.9 V74M347.5 71.3 V73.2M348.5 70.5 V72.6M349.5 69.6 V71.7M350.5 69 V70.9M351.5 68.4 V70.3M352.5 67.6 V69.6M353.5 66.9 V68.8M354.5 66.2 V68M355.5 65.4 V67.5M356.5 64.7 V66.7M357.5 64 V65.9M358.5 63.3 V65.2M359.5 62.6 V64.5M360.5 61.5 V63.9M361.5 60.8 V63.2M362.5 60.4 V62.4M363.5 59.6 V61.6M364.5 59 V60.9M365.5 58 V60.3M366.5 57.3 V59.5M367.5 56.6 V59M368.5 56 V58.4M369.5 55.1 V57.6M370.5 54.2 V57.2M371.5 53.9 V56.5M372.5 53.2 V55.9M373.5 52.9 V55.2M374.5 51.8 V54.9M375.5 51.5 V53.8M376.5 51.1 V53.7M377.5 50.4 V52.8M378.5 49.5 V52M379.5 49.3 V51.5M380.5 48.5 V51M381.5 48 V50.8M382.5 47.4 V50.3M383.5 47 V49.6M384.5 46.3 V49.4M385.5 46 V48.6M386.5 45.8 V48.3M387.5 45.2 V47.7M388.5 44.7 V48.2M389.5 44.3 V46.9M390.5 44 V46.8M391.5 43 V47.8M392.5 42.9 V46.2M393.5 42 V46.2M394.5 42.2 V46.1M395.5 41.8 V45.5M396.5 41.8 V45.4M397.5 40.8 V45.3M398.5 41 V44.2M399.5 40.8 V44.2M400.5 40.9 V44.9M401.5 40.7 V43.7M402.5 40.9 V43.2M403.5 40.7 V42.9M404.5 40.5 V42.8M405.5 40.6 V42.7M406.5 40.4 V42.7M407.5 40 V42.8M408.5 39.7 V43M409.5 39.7 V43.4M410.5 40 V42.4M411.5 39.9 V42.8M412.5 40.2 V42.8M413.5 40 V42.8M414.5 38.7 V43.3M415.5 39.8 V43.4M416.5 40.1 V43.1M417.5 39.6 V44.5M418.5 40.4 V43.7M419.5 40.2 V43.5M420.5 40.7 V44.2M421.5 40.9 V43.7M422.5 40.9 V44.1M423.5 41.3 V44.1M424.5 41.6 V45M425.5 42.3 V44.7M426.5 41.1 V44.8M427.5 42.5 V45.1M428.5 42.9 V46.1M429.5 42.8 V46.2M430.5 43.1 V46.6M431.5 43.5 V46.7M432.5 43.3 V47.4M433.5 44.5 V47.9M434.5 44.3 V48.2M435.5 45.2 V48.5M436.5 45.3 V49.4M437.5 46.1 V49.3M438.5 46.9 V50M439.5 48 V51.3M440.5 48.1 V51.1M441.5 48.9 V51M442.5 49 V51.6M443.5 49.3 V52.6M444.5 50 V53.2M445.5 50.7 V53.8M446.5 51.4 V54.2M447.5 51.9 V54.5M448.5 52.8 V55M449.5 53.2 V55.7M450.5 54.1 V56.7M451.5 54.7 V56.9M452.5 55.3 V57.5M453.5 55.9 V58.5M454.5 56.7 V59.3M455.5 57.6 V59.6M456.5 58.4 V60.4M457.5 58.8 V60.9M458.5 59.7 V61.7M459.5 60.3 V62.6M460.5 61.1 V63.3M461.5 61.8 V63.8M462.5 62.2 V64.7M463.5 63.3 V65.4M464.5 64 V66M465.5 64.6 V66.6M466.5 65.3 V67.5M467.5 66.1 V68.2M468.5 66.9 V68.7M469.5 67.8 V69.6M470.5 68.5 V70.4M471.5 69 V71M472.5 69.7 V71.9M473.5 70.6 V72.6M474.5 71.2 V73.5M475.5 72 V74.3M476.5 72.5 V74.7M477.5 73.4 V75.8M478.5 74 V76.6M479.5 74.6 V77.1M480.5 75.5 V77.6M481.5 75.9 V78.2M482.5 76.9 V79.1M483.5 77 V79.9M484.5 77.9 V80.4M485.5 78.4 V81.2M486.5 79.3 V81.8M487.5 79.8 V82.8M488.5 80.7 V83.3M489.5 81.3 V83.9M490.5 82.1 V84.5M491.5 82.6 V85.4M492.5 83.3 V85.7M493.5 84.1 V86.5M494.5 84.5 V86.8M495.5 85.1 V87.4M496.5 85.1 V88.4M497.5 85.8 V88.6M498.5 86.1 V89.2M499.5 86.7 V90M500.5 87.6 V89.9M501.5 88.2 V90.8M502.5 88.7 V91.2M503.5 88.6 V91.5M504.5 89.5 V92.1M505.5 89.7 V92.7M506.5 90.2 V93.1M507.5 90 V93.6M508.5 90 V94.5M509.5 91 V94.2M510.5 91.2 V94.5M511.5 91.8 V95.6M512.5 92.3 V94.9M513.5 92.9 V94.9M514.5 92.8 V95.3M515.5 93.2 V95.9M516.5 93.3 V95.7M517.5 93.6 V96.9M518.5 93.7 V96.5M519.5 93.5 V96.9M520.5 93.9 V96.3M521.5 94.1 V96.3M522.5 94.6 V96.3M523.5 94.7 V96.5M524.5 94.8 V96.7M525.5 94.8 V97.1M526.5 94.6 V96.8M527.5 94.7 V97.1M528.5 94.6 V97.1M529.5 94.8 V96.7M530.5 94.9 V96.6M531.5 94.7 V96.9M532.5 94.5 V96.3M533.5 94.7 V96.3M534.5 94.2 V96.2M535.5 93.8 V96.8M536.5 93.7 V96.4M537.5 93.2 V96.6M538.5 92.8 V96.4M539.5 93 V96M540.5 92.9 V95.5M541.5 92.1 V95.6M542.5 92.3 V95.3M543.5 91.6 V95M544.5 91 V95.5M545.5 91.1 V95M546.5 90.7 V94.4M547.5 90.3 V93.9M548.5 88.6 V93.1M549.5 90 V93M550.5 89.7 V91.9M551.5 88.9 V91.8M552.5 88.6 V91.2M553.5 88.6 V90.9M554.5 88.1 V89.8M555.5 87.4 V89.5M556.5 87.1 V89.3M557.5 86.2 V88.9M558.5 85.7 V88.1M559.5 85.3 V87.5M560.5 84.5 V87M561.5 83.9 V86.4M562.5 83.3 V86.1M563.5 82.6 V85.1M564.5 82.3 V84.9M565.5 81.6 V84.1M566.5 80.7 V83.7M567.5 80.4 V82.8M568.5 79.9 V82M569.5 79.3 V81.3M570.5 78.3 V80.6M571.5 77.9 V80M572.5 77 V79.2M573.5 76.6 V78.8M574.5 75.7 V78.1M575.5 74.8 V77.3M576.5 74.4 V76.6M577.5 73.4 V75.8M578.5 72.9 V75.2M579.5 72.2 V74.4M580.5 71.4 V73.5M581.5 70.9 V72.8M582.5 70 V72.1M583.5 69.2 V71.3M584.5 68.6 V70.7M585.5 67.9 V69.9M586.5 67.1 V69M587.5 66.6 V68.4M588.5 65.8 V67.5M589.5 64.9 V66.9M590.5 64.2 V66.2M591.5 63.5 V65.7M592.5 62.7 V64.9M593.5 61.9 V64.1M594.5 61.3 V63.3M595.5 60.3 V62.9M596.5 59.7 V62.1M597.5 59.1 V61.6M598.5 58.4 V60.8M599.5 57.8 V60M600.5 57 V59.1M601.5 56.1 V58.7M602.5 55.3 V58.2M603.5 54.5 V57.3M604.5 54.1 V56.6M605.5 53.8 V56.3M606.5 52.8 V55.5M607.5 52.2 V54.9M608.5 51.5 V54M609.5 51 V53.7M610.5 50.6 V52.8M611.5 49.8 V52.6M612.5 49.2 V51.9M613.5 48.3 V51.6M614.5 48.3 V50.8M615.5 47.4 V50.7M616.5 46.9 V49.7M617.5 46.6 V49.8M618.5 45.9 V49.3M619.5 45.7 V48.7M620.5 44.6 V48.6M621.5 44.5 V47.9M622.5 43.8 V47.8M623.5 43.8 V47M624.5 43.2 V47.1M625.5 43.1 V46.8M626.5 42.5 V46.2M627.5 42.7 V45.6M628.5 42 V45.5M629.5 42.1 V44.7M630.5 41.6 V45M631.5 40.9 V45.1M632.5 40.8 V44.9M633.5 40.3 V44.2M634.5 40 V44M635.5 40.4 V44.5M636.5 40.4 V42.9M637.5 40.5 V42.5M638.5 40 V42.7M639.5 39.6 V42.4M640.5 39.5 V42.9M641.5 39.3 V42.5M642.5 39.6 V42.5M643.5 39.7 V42.3M644.5 39.7 V43M645.5 39.7 V42.7M646.5 39.5 V42.8M647.5 39.3 V43.1M648.5 39.9 V42.6M649.5 39.9 V43.3M650.5 40.1 V43.9M651.5 40.6 V43.2M652.5 40.2 V43.4M653.5 40.1 V43.3M654.5 40.6 V43.7M655.5 40.6 V44.3M656.5 41.1 V44.5M657.5 40.9 V44.9M658.5 41.2 V45.2M659.5 41.8 V45.2M660.5 41.8 V45.5M661.5 42.2 V45.6M662.5 42.5 V46M663.5 42.5 V47M664.5 43.5 V46.8M665.5 43.4 V47.4M666.5 44.6 V47.3M667.5 44.9 V48M668.5 45.2 V48.8M669.5 45.7 V49.1M670.5 46 V49.6M671.5 46.4 V49.9M672.5 47.2 V51.1M673.5 48 V50.8M674.5 48.5 V50.9M675.5 49 V52.5M676.5 49.4 V52.4M677.5 50.2 V52.6M678.5 50.5 V53.3M679.5 51.3 V54.1M680.5 51.8 V54.6M681.5 52.6 V54.9M682.5 53.1 V55.8M683.5 53.7 V56.4M684.5 54.4 V56.9M685.5 54.6 V57.6M686.5 55.3 V58.1M687.5 56.3 V58.9M688.5 57.3 V59.7M689.5 57.7 V60.2M690.5 58.5 V60.8M691.5 59.3 V61.8M692.5 59.8 V62.2M693.5 60.5 V62.9M694.5 61.6 V63.7M695.5 62.2 V64.4M696.5 62.7 V65M697.5 63.6 V65.7M698.5 64.3 V66.5M699.5 65 V67.3M700.5 65.9 V67.9M701.5 66.8 V68.7M702.5 67.4 V69.2M703.5 68.2 V70M704.5 68.9 V70.9M705.5 69.7 V71.5M706.5 70.2 V72.3M707.5 71.1 V72.8M708.5 71.7 V73.7M709.5 72.5 V74.6M710.5 73 V75.2M711.5 73.6 V76.2M712.5 74.3 V77M713.5 75.1 V77.5M714.5 75.9 V78.2M715.5 76.7 V78.7M716.5 77.3 V79.4M717.5 77.9 V80.4M718.5 77.9 V81M719.5 79.1 V81.8M720.5 79.5 V82.5M721.5 80.5 V83.1M722.5 80.6 V84M723.5 81.7 V84.6M724.5 82.1 V85M725.5 82.9 V85.4M726.5 83.6 V86.4M727.5 84.4 V86.6M728.5 84.7 V87M729.5 85.6 V87.9M730.5 85.8 V88.5M731.5 86.3 V89.6M732.5 86.9 V89.5M733.5 87.6 V89.9M734.5 88 V90.5M735.5 88.7 V91.9M736.5 88.4 V91.6M737.5 89.4 V91.8M738.5 89.7 V92.6M739.5 90.1 V93M740.5 90.6 V92.8M741.5 90.6 V93.4M742.5 91 V93.7M743.5 91.5 V94.1M744.5 91.8 V94.3M745.5 92.1 V94.7M746.5 92.3 V95.2M747.5 92.7 V95.6M748.5 93.1 V96.2M749.5 93.2 V96.2M750.5 93.1 V97.2M751.5 92.6 V97.1M752.5 93.3 V97.9M753.5 93.4 V97.2M754.5 93.8 V96.8M755.5 93.8 V96.8M756.5 94.3 V97M757.5 93.2 V97.2M758.5 94.3 V97.7M759.5 94 V97.7M760.5 93.7 V97.3M761.5 93.7 V97.3M762.5 92.6 V97.8M763.5 93.5 V97.6M764.5 93.2 V96.9M765.5 94.4 V96.8M766.5 94.2 V96.6M767.5 94.6 V97.5M768.5 94.2 V96.3M769.5 93.4 V96.5M770.5 93.6 V96.5M771.5 93.2 V96.6M772.5 92.6 V96.1M773.5 92.9 V95.9M774.5 92.5 V95.4M775.5 92.3 V95.1M776.5 92 V95.2M777.5 91.2 V95.7M778.5 91.5 V94.6M779.5 90.7 V94.2M780.5 90.6 V94M781.5 90.5 V93.5M782.5 89.8 V92.9M783.5 89.4 V92.1M784.5 89.2 V91.7M785.5 88.5 V91.7M786.5 87.9 V91.2M787.5 87.6 V90.9M788.5 87 V90M789.5 86.1 V90M790.5 86.1 V88.9M791.5 85.4 V88.8M792.5 84.9 V88.9M793.5 84.5 V87.4M794.5 83.8 V86.9M795.5 83.3 V86.4M796.5 82.9 V85.5M797.5 82.7 V84.8M798.5 82 V84M799.5 81.3 V83.4M800.5 80.7 V82.7M801.5 79.9 V82.4M802.5 79.2 V81.8M803.5 78.7 V81.2M804.5 78.1 V80.3M805.5 77.1 V80M806.5 76.5 V79.1M807.5 75.3 V78.2M808.5 75.1 V77.7M809.5 74.4 V76.9M810.5 74 V76.1M811.5 73.3 V75.2M812.5 72.3 V74.7M813.5 71.9 V73.9M814.5 71 V73M815.5 70.4 V72.5M816.5 69.8 V71.5M817.5 68.9 V70.7M818.5 68.3 V70.1M819.5 67.6 V69.2M820.5 66.6 V68.7M821.5 66 V67.9M822.5 65.3 V67.2M823.5 64.3 V66.5M824.5 63.6 V65.8M825.5 63 V65M826.5 62 V64.4M827.5 61.6 V63.7M828.5 60.8 V63M829.5 60 V62.4M830.5 59.3 V62.1M831.5 58.6 V60.9M832.5 57.4 V60.6M833.5 56.9 V59.7M834.5 56.2 V58.9M835.5 55.5 V58.6M836.5 54.9 V57.6M837.5 54.3 V57M838.5 53.3 V56.8M839.5 53.1 V56M840.5 52.7 V55.4M841.5 51.5 V54.9M842.5 51 V54M843.5 50.1 V53.5M844.5 49.7 V53.2M845.5 49.1 V52.2M846.5 49.1 V52.5M847.5 47.1 V51.5M848.5 47.6 V50.9M849.5 46.7 V50M850.5 46.2 V49.7M851.5 45.3 V50.2M852.5 45 V49.1M853.5 44.4 V48.5M854.5 44.1 V47.8M855.5 43 V47.6M856.5 44 V46.7M857.5 44.1 V46.5M858.5 43.9 V46M859.5 43.2 V45.5M860.5 42.4 V45.2M861.5 42.4 V44.7M862.5 41.8 V44.7M863.5 42.1 V44.1M864.5 41.4 V44.3M865.5 41.1 V44M866.5 41.1 V43.6M867.5 40.9 V43.6M868.5 41 V43.2M869.5 40.2 V43.6M870.5 39.9 V43.1M871.5 39.6 V43.8M872.5 39.3 V43.8M873.5 38.5 V44.6M874.5 39 V43M875.5 38.9 V43M876.5 39.4 V43.4M877.5 39.8 V42.9M878.5 39.9 V42.6M879.5 40.2 V42.7M880.5 40.1 V42.4M881.5 38.7 V43.3M882.5 39.1 V43.3M883.5 39.5 V44.2M884.5 39.9 V44.1M885.5 39.9 V44.4M886.5 40.6 V44.1M887.5 40.7 V43.7M888.5 40.8 V43.4M889.5 41.2 V43.9M890.5 41.4 V43.9M891.5 41.8 V44.7M892.5 41.7 V45M893.5 42.6 V45.1M894.5 41.9 V45.5M895.5 42.7 V45.7M896.5 43.7 V46.2M897.5 44.1 V46.3M898.5 44.4 V46.7M899.5 44.8 V47.1M900.5 44.5 V48.2M901.5 45.5 V48.1M902.5 46.1 V48M903.5 46.4 V49.5M904.5 46.6 V50M905.5 46.9 V49.6M906.5 47.7 V50.1M907.5 47.8 V51.1M908.5 48.6 V51.4M909.5 49.3 V52.1M910.5 49.8 V52.5M911.5 50.2 V52.9M912.5 50.9 V53.5M913.5 51.3 V54.5M914.5 52.3 V54.8M915.5 52.6 V55.5M916.5 53.3 V55.9M917.5 54.2 V56.7M918.5 54.8 V57.6M919.5 55.6 V58M920.5 56.1 V58.5M921.5 56.9 V59.5M922.5 57.7 V60.1M923.5 58.3 V60.5M924.5 58.9 V61.5M925.5 59.8 V62.1M926.5 60.4 V62.6M927.5 61.1 V63.3M928.5 61.9 V64.1M929.5 62.6 V64.8M930.5 63.4 V65.7M931.5 64 V66.2M932.5 64.7 V66.8M933.5 65.6 V67.8M934.5 66.4 V68.2M935.5 67 V69.1M936.5 67.9 V69.8M937.5 68.5 V70.6M938.5 69.4 V71.4M939.5 70.1 V72M940.5 70.8 V72.6M941.5 71.6 V73.4M942.5 72.1 V74.2M943.5 72.8 V75M944.5 73.7 V75.7M945.5 74.1 V76.5M946.5 74.6 V77.2M947.5 75.5 V77.9M948.5 76.5 V78.6M949.5 77.3 V79.4M950.5 77.9 V80.2M951.5 78.3 V81.1M952.5 78.7 V81.6M953.5 79.6 V82.2M954.5 80.1 V83.1M955.5 81 V83.6M956.5 81.1 V84.4M957.5 82.1 V84.9M958.5 82.8 V85.1M959.5 83.2 V85.7M960.5 84.1 V86.3M961.5 83.9 V87.5M962.5 84.7 V88.7M963.5 85 V88.8M964.5 85.7 V89.1M965.5 86.2 V89.4M966.5 87.4 V89.4M967.5 87.8 V90.3M968.5 87.8 V91M969.5 88.7 V91.2M970.5 88.7 V92.2M971.5 88.8 V93.1M972.5 88.7 V92.9M973.5 90.3 V93.4M974.5 90.1 V93.7M975.5 91 V94M976.5 91.7 V94.3M977.5 92.3 V94.6M978.5 92.4 V94.4M979.5 92.7 V95M980.5 93.2 V95.3M981.5 93.3 V95.4M982.5 93.2 V95.5M983.5 93.1 V96.1M984.5 93.6 V96.6M985.5 93.2 V96.6M986.5 93.5 V96.6M987.5 92.8 V96.6M988.5 93 V97.4M989.5 93.2 V97.7M990.5 94.4 V96.9M991.5 94.2 V97.8M992.5 94.3 V97.5M993.5 94.2 V97.4M994.5 94.1 V98M995.5 94.3 V97.6M996.5 93.8 V97.4M997.5 93.3 V97.2M998.5 93.7 V97.5M999.5 93.9 V97.6M1000.5 93.2 V97.6M1001.5 93.7 V97.4M1002.5 92.2 V97M1003.5 93.9 V96.2M1004.5 93.4 V96.2M1005.5 93.3 V95.8M1006.5 93 V95.1M1007.5 92.2 V95.2M1008.5 92.6 V94.6M1009.5 92.3 V94.8M1010.5 91.9 V94.8M1011.5 91.1 V94.5M1012.5 91.1 V94M1013.5 90.4 V94.2M1014.5 90.4 V93.5M1015.5 89.9 V92.6M1016.5 89.8 V92.1M1017.5 89.7 V91.9M1018.5 88.7 V91.4M1019.5 88.2 V91.3M1020.5 88 V90.6M1021.5 87.5 V90.2M1022.5 86.8 V89.9M1023.5 86.7 V89M1024.5 86 V88.3M1025.5 85.8 V87.9M1026.5 85.2 V87.4M1027.5 84.5 V86.9M1028.5 83.7 V86.3M1029.5 83.3 V85.8M1030.5 82.6 V85.2M1031.5 82.1 V84.2M1032.5 81.4 V83.7M1033.5 80.3 V83.2M1034.5 80 V82.5M1035.5 79.5 V81.7M1036.5 78.7 V81.1M1037.5 78 V80.5M1038.5 77.6 V80.2M1039.5 76.7 V79.4M1040.5 76.2 V78.9M1041.5 75.3 V77.9M1042.5 74.6 V77.4M1043.5 74 V76.5M1044.5 73.2 V75.7M1045.5 72.8 V75.1M1046.5 71.8 V74.1M1047.5 71.3 V73.6M1048.5 70.6 V72.6M1049.5 69.8 V71.8M1050.5 69.2 V71.2M1051.5 68.3 V70.4M1052.5 67.8 V69.7M1053.5 66.9 V69M1054.5 66.2 V68.3M1055.5 65.5 V67.5M1056.5 64.8 V66.9M1057.5 63.9 V66M1058.5 63.3 V65.5M1059.5 62.2 V64.7M1060.5 61.8 V64.1M1061.5 61.1 V63.5M1062.5 59.7 V62.6M1063.5 59.3 V62M1064.5 58.9 V61M1065.5 58.1 V60.6M1066.5 57.3 V59.7M1067.5 57 V59M1068.5 56 V58.4M1069.5 55.4 V57.9M1070.5 54.9 V57.1M1071.5 54.3 V56.5M1072.5 52.9 V55.8M1073.5 53 V55.1M1074.5 52.2 V54.4M1075.5 51.5 V53.9M1076.5 50.9 V53.4M1077.5 50.4 V52.8M1078.5 49.5 V52.3M1079.5 49.1 V52M1080.5 48.8 V51.4M1081.5 48 V50.9M1082.5 47.3 V50.6M1083.5 46.6 V50.4M1084.5 46.3 V50.1M1085.5 45.8 V49.3M1086.5 45.3 V48.8M1087.5 44.9 V48.1M1088.5 44.3 V47.6M1089.5 44.3 V47.2M1090.5 44.3 V46.3M1091.5 43.5 V46.3M1092.5 43.3 V46.6M1093.5 42.9 V45.7M1094.5 43.1 V45.6M1095.5 42.4 V45.1M1096.5 42.2 V44.9M1097.5 41.8 V44.4M1098.5 41.4 V44.6M1099.5 40.5 V44.5M1100.5 40.4 V44.3M1101.5 39.6 V44.1M1102.5 40.4 V43.7M1103.5 40.4 V43.1M1104.5 40.4 V42.7M1105.5 39.5 V43.3M1106.5 40.5 V42.7M1107.5 39.8 V42.4M1108.5 40.4 V42.5M1109.5 40 V42.7M1110.5 39.7 V42.8M1111.5 39.5 V42.8M1112.5 40.3 V42.3M1113.5 39.7 V42.3M1114.5 40 V42.2M1115.5 39.9 V42.5M1116.5 40.1 V42.7M1117.5 40.4 V43.2M1118.5 40.3 V43.4M1119.5 39.8 V43.3M1120.5 40.6 V43.6M1121.5 41.3 V43.5M1122.5 41.3 V44.7M1123.5 41.5 V44.2M1124.5 42 V45.2M1125.5 42.2 V44.8M1126.5 41.8 V45.1M1127.5 42.8 V45.5M1128.5 42.8 V45.6M1129.5 43.7 V46M1130.5 43.3 V46.2M1131.5 44.3 V46.3M1132.5 44.5 V46.7M1133.5 45 V47.2M1134.5 45 V47.8M1135.5 45.7 V47.9M1136.5 46.4 V48.7M1137.5 46.6 V48.9M1138.5 46.9 V50.4M1139.5 47.9 V49.8M1140.5 48.2 V50.7M1141.5 48.4 V51.4M1142.5 48.7 V52.1M1143.5 49.1 V52.6M1144.5 50 V53M1145.5 50.8 V53.9M1146.5 51.1 V54M1147.5 51.6 V54.5M1148.5 52.1 V55.3M1149.5 53 V55.9M1150.5 53.1 V56.7M1151.5 54.3 V57M1152.5 55 V57.4M1153.5 56 V58.3M1154.5 56.6 V59.1M1155.5 57.3 V59.7M1156.5 57.9 V60.1M1157.5 58.6 V60.9M1158.5 59.3 V61.8M1159.5 60.3 V62.4M1160.5 60.9 V63.3M1161.5 61.7 V64.2M1162.5 62.3 V64.5M1163.5 63.3 V65.1M1164.5 63.9 V66.1M1165.5 64.6 V66.7M1166.5 65.5 V67.3M1167.5 66.2 V68.2M1168.5 66.8 V68.7M1169.5 67.5 V69.6M1170.5 68.2 V70.2M1171.5 69.1 V71.1M1172.5 69.9 V71.7M1173.5 70.6 V72.4M1174.5 71.2 V73.3M1175.5 72.1 V73.9M1176.5 72.7 V74.7M1177.5 73.5 V75.3M1178.5 74.1 V76.2M1179.5 74.7 V76.8M1180.5 75.4 V77.8M1181.5 75.9 V78.6M1182.5 76.6 V79.1M1183.5 77.5 V79.8M1184.5 78.3 V80.1M1185.5 78.9 V80.9M1186.5 79.3 V81.7M1187.5 80.2 V82.1M1188.5 80.8 V82.8M1189.5 81.5 V83.6M1190.5 82 V84.4M1191.5 82.7 V85.1M1192.5 83.5 V86M1193.5 84.1 V86.2M1194.5 84.3 V87.1M1195.5 85 V87.5M1196.5 85.5 V87.7M1197.5 86.1 V88.7M1198.5 86.5 V89M1199.5 86.9 V89.2M1200.5 87.7 V89.7M1201.5 87.5 V90.5M1202.5 87.9 V91.2M1203.5 88.9 V91.8M1204.5 89.2 V91.8M1205.5 89.9 V92.3M1206.5 89.7 V93.3M1207.5 90.4 V94" stroke="#3a5fac"/><path d="M41.5 67.6 V69.4M42.5 66.7 V68.6M43.5 66.2 V67.9M44.5 65.1 V67.4M45.5 64.5 V66.5M46.5 63.6 V65.8M47.5 63.1 V65M48.5 62.2 V64.5M49.5 61.2 V63.8M50.5 60.7 V63.1M51.5 60.2 V62.5M52.5 59.3 V61.8M53.5 58.4 V60.9M54.5 57.6 V60.7M55.5 56.9 V59.6M56.5 56.4 V58.9M57.5 55.3 V58.4M58.5 54.6 V57.6M59.5 54.5 V57.5M60.5 53.8 V56.5M61.5 53.4 V55.7M62.5 52.7 V54.9M63.5 51.8 V54.4M64.5 51.1 V53.8M65.5 50.5 V53.5M66.5 49.7 V52.8M67.5 49.4 V52.1M68.5 48.9 V52.2M69.5 48.5 V50.7M70.5 47.7 V50.4M71.5 46.4 V49.7M72.5 46.4 V49.7M73.5 46.3 V49.9M74.5 46 V48.8M75.5 45.6 V48.4M76.5 44.7 V48.6M77.5 44.6 V47.5M78.5 44.5 V47M79.5 44 V46.6M80.5 43.7 V46.3M81.5 43.4 V46M82.5 43 V45.9M83.5 42.4 V45.7M84.5 42.1 V45.1M85.5 40.8 V45.1M86.5 41.2 V45.2M87.5 41.2 V44.5M88.5 40.7 V44.4M89.5 40.9 V44M90.5 40.7 V43.7M91.5 40.5 V43.6M92.5 40.4 V43.5M93.5 39.4 V43.6M94.5 39.9 V43.8M95.5 39.8 V43.6M96.5 39.6 V43.7M97.5 39.2 V43.6M98.5 39 V43.4M99.5 39.5 V42.7M100.5 39.9 V42.7M101.5 40.1 V43.5M102.5 40 V42.4M103.5 40 V42.9M104.5 39.1 V42.8M105.5 40.1 V42.8M106.5 40.3 V42.9M107.5 40.6 V43M108.5 40.7 V43M109.5 40.5 V43.5M110.5 40.9 V43.9M111.5 40.7 V43.7M112.5 40.5 V44.4M113.5 41 V44.7M114.5 41.9 V44.9M115.5 42.1 V45.3M116.5 41.5 V46.4M117.5 42.5 V45.9M118.5 42.6 V46.8M119.5 43.4 V46.4M120.5 43.5 V46.7M121.5 44.3 V47M122.5 44.8 V47.2M123.5 45.1 V47.8M124.5 45.6 V48.7M125.5 45.8 V48.4M126.5 46.3 V49.4M127.5 46.7 V50.2M128.5 47.1 V50.6M129.5 47.8 V51.5M130.5 47.8 V51.9M131.5 48.5 V52.4M132.5 49.7 V53M133.5 50 V53.7M134.5 50.8 V53.5M135.5 51.5 V54.4M136.5 51.9 V55M137.5 52.9 V55.3M138.5 53 V56.3M139.5 53.9 V57.1M140.5 54.4 V57.4M141.5 54.8 V58.3M142.5 55.9 V58.9M143.5 56.2 V59.3M144.5 57.4 V60.3M145.5 57.9 V60.7M146.5 58.8 V61.1M147.5 59.6 V62.2M148.5 60.1 V62.9M149.5 61.2 V63.3M150.5 61.6 V63.8M151.5 62.5 V64.7M152.5 63.2 V65.5M153.5 64.2 V65.9M154.5 64.8 V66.6M155.5 65.7 V67.6M156.5 66.2 V68.3M157.5 67.2 V68.9M158.5 67.7 V69.7M159.5 68.6 V70.5M160.5 69.3 V71.1M161.5 69.9 V72M162.5 70.7 V72.7M163.5 71.3 V73.5M164.5 72.1 V74.1M165.5 72.9 V74.9M166.5 73.4 V75.7M167.5 74.3 V76.3M168.5 75.1 V77.3M169.5 75.6 V78M170.5 76.3 V78.7M171.5 77 V79.5M172.5 77.4 V80.5M173.5 78.3 V80.8M174.5 78.3 V81.6M175.5 79.2 V82.1M176.5 79.8 V83M177.5 80.3 V83.4M178.5 81.3 V83.7M179.5 82.1 V84.3M180.5 82.7 V85.2M181.5 83.4 V85.4M182.5 83.9 V86.4M183.5 84.3 V87M184.5 84.6 V87.6M185.5 85.3 V88.3M186.5 86.1 V89.1M187.5 86.7 V89.1M188.5 87.4 V90.2M189.5 87.5 V90.6M190.5 88.1 V90.9M191.5 88.3 V91.5M192.5 88.9 V91.9M193.5 89.5 V92.2M194.5 89.3 V93.6M195.5 89.4 V93.4M196.5 90.4 V93.8M197.5 90.9 V94.1M198.5 91 V94.4M199.5 91.3 V95.3M200.5 91.4 V95.5M201.5 91.8 V96M202.5 91.6 V96.2M203.5 92.5 V96.3M204.5 93.2 V96.5M205.5 92.9 V96.4M206.5 93.2 V96.6M207.5 93.5 V97M208.5 93.9 V96.8M209.5 93.7 V97.2M210.5 94.4 V96.7M211.5 94.4 V96.7M212.5 93.9 V96.8M213.5 94.1 V97.1M214.5 93.9 V97.6M215.5 94.3 V97.6M216.5 93.5 V97.6M217.5 94.8 V96.8M218.5 95 V96.9M219.5 94.9 V96.6M220.5 94.9 V96.6M221.5 95 V96.4M222.5 94.7 V96.5M223.5 94.1 V96.3M224.5 94.2 V96.3M225.5 93.5 V96.2M226.5 92.9 V96.4M227.5 92.1 V96.8M228.5 92.8 V95.6M229.5 92.2 V95.6M230.5 92.2 V95.1M231.5 91.5 V96.2M232.5 91.6 V94.8M233.5 91 V94.4M234.5 90.9 V94.1M235.5 90.3 V93.6M236.5 90.4 V93.2M237.5 89.7 V93M238.5 89.6 V92.2M239.5 89.2 V91.7M240.5 89.1 V92.6M241.5 88.6 V91.1M242.5 88.2 V90.8M243.5 87.5 V90.8M244.5 87.1 V90.4M245.5 86.9 V89.8M246.5 86 V89.3M247.5 85.1 V89.2M248.5 84.8 V87.8M249.5 84.4 V87.3M250.5 83.2 V87M251.5 83 V86M252.5 82.3 V85.7M253.5 81.6 V84.6M254.5 81 V83.9M255.5 80.6 V83.4M256.5 79.8 V82.7M257.5 79.8 V82M258.5 78.7 V81.4M259.5 78 V80.7M260.5 77.6 V80M261.5 76.9 V79.5M262.5 76.2 V78.6M263.5 75.4 V77.9M264.5 74.9 V77.5M265.5 74.2 V76.4M266.5 73.4 V75.6M267.5 72.9 V75M268.5 72 V74.3M269.5 71.5 V73.6M270.5 70.6 V72.8M271.5 70.1 V71.8M272.5 69.3 V71.1M273.5 68.5 V70.4M274.5 67.8 V69.8M275.5 67.1 V69.1M276.5 66.3 V68.1M277.5 65.6 V67.6M278.5 64.9 V66.8M279.5 64 V66.3M280.5 63.5 V65.5M281.5 62.7 V64.5M282.5 61.7 V64.1M283.5 61.3 V63.2M284.5 60.2 V62.4M285.5 59.6 V61.9M286.5 59 V61M287.5 58 V60.5M288.5 57.6 V59.7M289.5 56.7 V59.1M290.5 56 V58.4M291.5 55.4 V57.8M292.5 54.9 V57.3M293.5 54.1 V56.7M294.5 53.3 V56.2M295.5 52.7 V55.7M296.5 52.1 V54.9M297.5 51 V54.1M298.5 50.6 V53.5M299.5 50.4 V53.1M300.5 49.5 V52.2M301.5 49.1 V52.1M302.5 48.4 V51.8M303.5 47.9 V51.2M304.5 47.7 V50.4M305.5 47.2 V50.1M306.5 46.5 V50.1M307.5 46.1 V48.8M308.5 45.5 V49.4M309.5 44.8 V48.2M310.5 44.9 V47.6M311.5 43.5 V47.4M312.5 43.7 V46.5M313.5 43.1 V47M314.5 43.1 V46.1M315.5 42.2 V46.5M316.5 42.1 V46.2M317.5 40.4 V45.9M318.5 42 V44.8M319.5 41.9 V44.8M320.5 41.8 V43.9M321.5 41.3 V43.8M322.5 41.4 V43.3M323.5 41.1 V43.4M324.5 40.5 V43.6M325.5 40.2 V43.6M326.5 40.1 V43.6M327.5 39.8 V43.3M328.5 39.8 V42.4M329.5 40.2 V41.9M330.5 40.2 V42M331.5 40.1 V43.2M332.5 39.9 V41.9M333.5 39.7 V42.6M334.5 39.7 V42.3M335.5 40.1 V42.6M336.5 40 V42.3M337.5 38.7 V42.5M338.5 40.1 V42.8M339.5 39.1 V43.1M340.5 40.1 V43.1M341.5 40 V42.9M342.5 40.7 V43.3M343.5 41.2 V43.5M344.5 41.4 V43.4M345.5 41.4 V43.7M346.5 41.7 V44.5M347.5 41.9 V44.8M348.5 42.4 V45.4M349.5 41.8 V45.3M350.5 42.8 V45.3M351.5 43.4 V45.4M352.5 43.8 V46.3M353.5 44.3 V46.2M354.5 44.7 V46.5M355.5 44.8 V47M356.5 44.8 V47.8M357.5 45.3 V48.1M358.5 45.8 V48.7M359.5 46.3 V49.6M360.5 46.3 V49.9M361.5 46.8 V50.7M362.5 47.4 V51.4M363.5 47.8 V51.7M364.5 48.1 V52.4M365.5 49.4 V52.6M366.5 50.2 V53.4M367.5 50.6 V53.4M368.5 51.2 V54.5M369.5 51.7 V54.6M370.5 52.4 V55.3M371.5 53.1 V56.4M372.5 53.7 V56.9M373.5 54.1 V57.3M374.5 54.5 V57.7M375.5 55.6 V58.4M376.5 56.2 V59M377.5 57.2 V59.7M378.5 58 V60.3M379.5 58.6 V60.8M380.5 59.4 V61.6M381.5 60.2 V62.1M382.5 61 V63M383.5 61.6 V63.6M384.5 62.3 V64.2M385.5 63.1 V65.3M386.5 63.7 V65.8M387.5 64.6 V66.6M388.5 65.2 V67.3M389.5 66.1 V68M390.5 66.7 V68.7M391.5 67.4 V69.3M392.5 68.2 V70.2M393.5 69 V71M394.5 69.7 V71.5M395.5 70.4 V72.4M396.5 71.2 V73.3M397.5 71.7 V73.9M398.5 72.6 V74.7M399.5 73.2 V75.4M400.5 74 V76.3M401.5 74.6 V76.8M402.5 74.9 V77.6M403.5 76 V78.7M404.5 76.4 V79.4M405.5 77.1 V80M406.5 77.6 V80.6M407.5 78.3 V81.3M408.5 79.3 V81.9M409.5 79.9 V82.6M410.5 80.6 V83.1M411.5 81.1 V83.9M412.5 81.9 V84.6M413.5 82.5 V85.1M414.5 83 V85.6M415.5 84 V85.9M416.5 83.5 V86.9M417.5 84.8 V87.3M418.5 85.4 V88.1M419.5 85.8 V88.8M420.5 86.2 V89.6M421.5 86.2 V89.6M422.5 86 V90.3M423.5 87.4 V90.6M424.5 88.1 V91.4M425.5 88.1 V91.7M426.5 88.8 V92.7M427.5 89.1 V92.4M428.5 89.9 V93.1M429.5 90 V93.1M430.5 90.7 V93.4M431.5 90.6 V93.9M432.5 91 V94.4M433.5 91 V94.9M434.5 91.9 V94.8M435.5 91.9 V95.5M436.5 92.4 V96M437.5 92.2 V95.8M438.5 93.1 V95.8M439.5 93 V96.5M440.5 92.9 V96.1M441.5 93.9 V96.9M442.5 94.2 V96.2M443.5 94.2 V96.1M444.5 94.5 V96.5M445.5 94.8 V96.4M446.5 94.8 V96.8M447.5 94.7 V97.6M448.5 95 V96.5M449.5 94.8 V96.5M450.5 94.9 V96.5M451.5 94.5 V96.7M452.5 94.3 V97.2M453.5 94.3 V97.2M454.5 94 V97.3M455.5 93.9 V96.6M456.5 93.1 V96.8M457.5 92.8 V96.5M458.5 93 V96.8M459.5 93.5 V95.9M460.5 93.1 V96.2M461.5 92.4 V96.6M462.5 92.9 V95.8M463.5 92.5 V95M464.5 92.8 V94.6M465.5 92 V94.7M466.5 92 V94M467.5 91.6 V93.7M468.5 91.3 V93.7M469.5 90.7 V93.2M470.5 90.3 V92.9M471.5 89.8 V93M472.5 89.1 V92.7M473.5 89 V91.7M474.5 88 V91.2M475.5 87.4 V91.2M476.5 87.7 V90.5M477.5 87.3 V89.7M478.5 85.7 V89.5M479.5 85.9 V89M480.5 85.9 V88.1M481.5 85.3 V87.5M482.5 84.6 V87.1M483.5 84.2 V86.6M484.5 83.5 V86M485.5 82.9 V85.4M486.5 82.2 V85M487.5 81.7 V84.1M488.5 80.9 V83.5M489.5 80.7 V82.9M490.5 79.6 V82.4M491.5 79.4 V81.6M492.5 78.5 V80.7M493.5 78 V80.4M494.5 77.3 V79.3M495.5 76.6 V78.6M496.5 76.1 V78M497.5 75.1 V77.4M498.5 74.5 V76.7M499.5 73.7 V76.3M500.5 72.6 V75.7M501.5 72.2 V74.7M502.5 71.4 V73.6M503.5 71 V73M504.5 70.3 V72.4M505.5 69.4 V71.5M506.5 68.7 V70.8M507.5 68 V70.1M508.5 67.4 V69.3M509.5 66.5 V68.4M510.5 65.8 V67.7M511.5 65.1 V67.2M512.5 64.5 V66.4M513.5 63.7 V66M514.5 62.9 V64.9M515.5 61.9 V64.4M516.5 61.1 V63.5M517.5 60.4 V62.9M518.5 59.9 V62.2M519.5 59.1 V61.6M520.5 58.3 V61.1M521.5 57.6 V60.3M522.5 56.8 V59.3M523.5 56.5 V58.6M524.5 55.4 V58.3M525.5 55 V57.6M526.5 54.4 V56.8M527.5 53.9 V56.2M528.5 53.1 V55.2M529.5 52.6 V54.7M530.5 51.9 V54.2M531.5 51.4 V53.5M532.5 50.7 V52.9M533.5 50.1 V52.3M534.5 49.3 V51.5M535.5 48.7 V51.6M536.5 48.3 V51.1M537.5 47.6 V50.9M538.5 47.1 V49.7M539.5 47.1 V50.1M540.5 46.2 V49.2M541.5 45.2 V48.8M542.5 45 V49.2M543.5 44.6 V47.6M544.5 44.7 V47.4M545.5 43.4 V46.9M546.5 44.1 V45.9M547.5 43.9 V45.6M548.5 43.4 V45.3M549.5 43.2 V45.5M550.5 42.8 V45.3M551.5 42 V45.1M552.5 41.5 V45.2M553.5 41.7 V44.6M554.5 41.4 V45M555.5 41.4 V43.6M556.5 40.7 V43.2M557.5 40.6 V43.1M558.5 40.1 V43.8M559.5 40.5 V43.4M560.5 39.9 V43.1M561.5 39.3 V43.2M562.5 40.1 V42.9M563.5 40.2 V42.6M564.5 39.6 V42.4M565.5 40.1 V42.3M566.5 39.7 V42.8M567.5 40.1 V42.4M568.5 39.4 V43M569.5 40 V42.3M570.5 40.2 V42.5M571.5 40.4 V42.7M572.5 40.4 V42.8M573.5 40.3 V42.9M574.5 39.4 V43.7M575.5 40.6 V43.7M576.5 40.2 V43.8M577.5 40.4 V43.6M578.5 40.8 V44.1M579.5 41.2 V44.6M580.5 41.6 V45.3M581.5 41.7 V44.6M582.5 42.4 V45M583.5 42.4 V46M584.5 43 V45.6M585.5 43.7 V46.5M586.5 43.6 V46.7M587.5 43.5 V46.9M588.5 44.4 V47.5M589.5 44.6 V47.7M590.5 45.1 V48.6M591.5 45.2 V49.1M592.5 46.1 V49.5M593.5 46.5 V49.7M594.5 46.5 V50.4M595.5 48 V50.7M596.5 48.7 V51M597.5 48.8 V51.6M598.5 49.4 V52.4M599.5 49.6 V53M600.5 50.3 V53.2M601.5 50.7 V54.1M602.5 51.5 V54.1M603.5 51.5 V54.6M604.5 53.3 V55M605.5 53.8 V56M606.5 54 V56.4M607.5 55.2 V57.2M608.5 55.3 V57.8M609.5 56.3 V58.7M610.5 56.8 V59.7M611.5 57.5 V59.9M612.5 58 V60.8M613.5 59.2 V61.7M614.5 59.9 V61.9M615.5 60.4 V62.9M616.5 61.3 V63.5M617.5 61.9 V64.3M618.5 62.9 V64.7M619.5 63.6 V65.5M620.5 64.2 V66.1M621.5 65.1 V66.9M622.5 65.7 V67.8M623.5 66.6 V68.3M624.5 67.2 V69.3M625.5 67.9 V69.8M626.5 68.6 V70.8M627.5 69.3 V71.3M628.5 70.1 V72.3M629.5 70.8 V72.9M630.5 71.6 V73.6M631.5 72.4 V74.5M632.5 72.8 V75.3M633.5 73.8 V75.7M634.5 74.2 V76.3M635.5 74.9 V77.2M636.5 75.8 V78.3M637.5 76.4 V78.8M638.5 77.1 V79.7M639.5 77.7 V80.4M640.5 78.4 V81.4M641.5 79.1 V81.8M642.5 79.4 V82.2M643.5 80.1 V82.8M644.5 80.7 V83.5M645.5 81.6 V84M646.5 82.4 V84.9M647.5 82.8 V85.2M648.5 83.6 V85.9M649.5 84.2 V86.9M650.5 84.5 V87.3M651.5 85.2 V87.8M652.5 85.1 V88.8M653.5 85.8 V89.6M654.5 86.1 V90.2M655.5 86.4 V90.3M656.5 87.1 V90.7M657.5 88.1 V90.8M658.5 87.8 V91.2M659.5 88.2 V92.5M660.5 88.5 V93M661.5 88.9 V93.3M662.5 89.5 V93.7M663.5 90.1 V94.2M664.5 90.6 V94.1M665.5 91.1 V95.1M666.5 91.2 V94.7M667.5 92 V94.5M668.5 91.9 V95.3M669.5 92.4 V95.6M670.5 92.8 V95.4M671.5 91.9 V96.5M672.5 93.3 V96.2M673.5 92.3 V96.5M674.5 93.4 V96.6M675.5 93.3 V97.5M676.5 93.1 V96.8M677.5 93.1 V97.8M678.5 93.6 V97.5M679.5 94.5 V97.4M680.5 94.1 V97.3M681.5 93.8 V97.6M682.5 93.9 V97.6M683.5 94.5 V97.7M684.5 94.6 V97.2M685.5 93.9 V96.8M686.5 94.1 V97.1M687.5 93.9 V97.3M688.5 93.8 V97.4M689.5 93.4 V97.2M690.5 93.2 V98.4M691.5 92.9 V97.7M692.5 92.7 V96.6M693.5 93.3 V96.5M694.5 92.5 V96.7M695.5 92.7 V96.1M696.5 92.3 V95.3M697.5 92.6 V95.2M698.5 92.2 V94.6M699.5 92 V93.9M700.5 91.9 V93.8M701.5 91.4 V93.3M702.5 90.9 V93.4M703.5 89.5 V93.2M704.5 89.8 V93M705.5 88.6 V92.7M706.5 88.7 V92.1M707.5 88.4 V91.7M708.5 88.3 V91.8M709.5 87.3 V90.9M710.5 86.6 V90.7M711.5 85.9 V89.6M712.5 86.2 V89.2M713.5 85.8 V89.3M714.5 85.4 V88.1M715.5 85.1 V87.2M716.5 84.2 V87.2M717.5 83.6 V86.4M718.5 83.3 V85.6M719.5 82.4 V85.3M720.5 81.8 V84.6M721.5 81.5 V83.7M722.5 80.4 V83.3M723.5 79.6 V82.9M724.5 79.2 V82M725.5 78 V81.3M726.5 78.1 V80.7M727.5 77.4 V79.8M728.5 76.9 V79.5M729.5 76.1 V78.3M730.5 75.5 V77.8M731.5 74.8 V76.9M732.5 73.9 V76.2M733.5 73.3 V75.5M734.5 72.5 V74.7M735.5 71.7 V74.2M736.5 71 V73.3M737.5 70.3 V72.5M738.5 69.7 V71.7M739.5 69.1 V71.1M740.5 68.2 V70.2M741.5 67.7 V69.5M742.5 67 V68.8M743.5 66.2 V68M744.5 65.3 V67.3M745.5 64.5 V66.7M746.5 63.7 V65.8M747.5 63 V65.1M748.5 62.4 V64.6M749.5 61.7 V63.9M750.5 61 V63.1M751.5 60.2 V62.6M752.5 59.2 V62M753.5 58.9 V61.3M754.5 57.8 V60.5M755.5 57.4 V59.8M756.5 56.7 V58.9M757.5 55.8 V58.2M758.5 55.5 V57.9M759.5 54.5 V57.2M760.5 53.7 V56.5M761.5 53.1 V56M762.5 52.4 V55.1M763.5 52 V54.8M764.5 51.3 V53.9M765.5 50.8 V53.5M766.5 49.8 V52.9M767.5 48.9 V52.5M768.5 49 V51.9M769.5 48.6 V51.3M770.5 47.7 V51M771.5 47.6 V50.2M772.5 46.6 V50M773.5 46.1 V49.2M774.5 45.4 V49.1M775.5 44.6 V49.7M776.5 44.3 V48.8M777.5 44.3 V47.5M778.5 43.9 V47.6M779.5 43.7 V47.2M780.5 43.4 V46.3M781.5 42.9 V45.6M782.5 42.9 V45.9M783.5 42.6 V44.9M784.5 41.9 V45.1M785.5 41.8 V44.4M786.5 41.2 V44.6M787.5 41.2 V43.9M788.5 39.6 V43.7M789.5 40.3 V43.8M790.5 39.7 V43.6M791.5 40 V43.3M792.5 40.5 V43M793.5 40.2 V42.9M794.5 39.7 V42.8M795.5 40.2 V43.2M796.5 40.4 V42.4M797.5 39.3 V42M798.5 39.9 V42.8M799.5 39.8 V42.5M800.5 40 V42.5M801.5 39.4 V43.5M802.5 39.8 V43.1M803.5 39.8 V42.3M804.5 40 V42.7M805.5 39.9 V42.7M806.5 40.2 V43.2M807.5 40.2 V43.5M808.5 40.5 V43.4M809.5 40.3 V43.8M810.5 40.4 V44.2M811.5 41.2 V44.1M812.5 41.3 V44.2M813.5 41.2 V44.7M814.5 42.1 V44.6M815.5 42.3 V45.4M816.5 41.9 V45.2M817.5 42.8 V47M818.5 43.1 V46.4M819.5 43.2 V46.8M820.5 44 V46.8M821.5 44.3 V46.9M822.5 44.7 V47.6M823.5 45.2 V48.3M824.5 45.9 V48.4M825.5 45.9 V49.2M826.5 46.4 V49.4M827.5 46.9 V50.3M828.5 47.8 V50M829.5 48.2 V51.1M830.5 48.3 V51.3M831.5 49.4 V52.2M832.5 49.8 V52.5M833.5 50 V53.1M834.5 50.6 V53.8M835.5 51.3 V54.2M836.5 51.5 V54.8M837.5 52.4 V55.9M838.5 52.8 V56.6M839.5 53.9 V56.5M840.5 54.7 V57.5M841.5 55.2 V57.8M842.5 55.8 V58.9M843.5 56.5 V59.2M844.5 57.5 V59.9M845.5 58.2 V60.9M846.5 58.9 V61.3M847.5 59.6 V62M848.5 60.3 V62.7M849.5 61.1 V63.2M850.5 61.8 V63.8M851.5 62.7 V64.6M852.5 63.2 V65.3M853.5 63.9 V66M854.5 64.6 V66.6M855.5 65.6 V67.5M856.5 66.4 V68.1M857.5 66.9 V68.8M858.5 67.6 V69.5M859.5 68.6 V70.2M860.5 69.1 V71M861.5 69.8 V71.9M862.5 70.7 V72.5M863.5 71.4 V73.2M864.5 72 V74.2M865.5 72.6 V75M866.5 73.4 V75.7M867.5 74 V76.4M868.5 74.7 V76.8M869.5 75.4 V77.8M870.5 76.2 V78.6M871.5 76.8 V79M872.5 77.6 V79.8M873.5 78.2 V80.7M874.5 78.9 V81.3M875.5 79 V82.4M876.5 80.2 V83.2M877.5 80.7 V83.8M878.5 81.2 V84.6M879.5 81.2 V84.8M880.5 82.8 V85M881.5 83.1 V85.8M882.5 83.6 V86.1M883.5 84.6 V86.7M884.5 84.6 V87.5M885.5 85.3 V88.1M886.5 85.6 V89M887.5 86.5 V89.3M888.5 87.1 V90M889.5 87.9 V89.9M890.5 88.4 V90.5M891.5 88.7 V91.5M892.5 89 V91.6M893.5 89.8 V92.3M894.5 90 V92.9M895.5 90.3 V93M896.5 90.5 V93.5M897.5 91.2 V93.9M898.5 91.4 V94.1M899.5 91.6 V93.8M900.5 91.7 V94.8M901.5 91.4 V94.8M902.5 92.4 V95.2M903.5 92.5 V95.7M904.5 92.7 V95.7M905.5 93.6 V95.5M906.5 92.5 V96.2M907.5 93.9 V96.2M908.5 93.9 V96.8M909.5 94 V96.5M910.5 94.2 V97.2M911.5 94.5 V96.8M912.5 94.1 V97.6M913.5 94.1 V97.3M914.5 94.1 V97.1M915.5 94.2 V97.6M916.5 94 V97.3M917.5 94.8 V96.8M918.5 94.7 V96.5M919.5 94.9 V96.6M920.5 94.2 V96.7M921.5 94.6 V96.8M922.5 94.3 V96.7M923.5 94 V96.7M924.5 93.9 V96.5M925.5 93.7 V96.6M926.5 92.5 V96.4M927.5 93.5 V96.1M928.5 93.3 V95.6M929.5 93.1 V95.7M930.5 92.8 V95.4M931.5 92.6 V95M932.5 92.3 V94.5M933.5 91.7 V94.4M934.5 90.9 V94.1M935.5 90.6 V94.3M936.5 90.1 V94.2M937.5 89.5 V93.3M938.5 89.7 V92.3M939.5 89.4 V91.9M940.5 89.2 V91.3M941.5 88.1 V91.1M942.5 87.7 V91M943.5 87.2 V90.6M944.5 87 V89.8M945.5 86.1 V89.6M946.5 86.3 V88.9M947.5 85.6 V88M948.5 85.2 V87.4M949.5 84.8 V86.9M950.5 83.2 V86.5M951.5 83.3 V85.8M952.5 82.6 V85.3M953.5 82 V84.4M954.5 81.3 V84.4M955.5 80.6 V83.2M956.5 79.8 V82.9M957.5 79.2 V82.1M958.5 79.2 V81.5M959.5 78.3 V80.8M960.5 77.4 V80.5M961.5 77 V79.4M962.5 76.2 V78.6M963.5 75.6 V77.8M964.5 75 V76.9M965.5 74.5 V76.4M966.5 73.7 V75.6M967.5 72.7 V75.2M968.5 72 V74.2M969.5 71.5 V73.4M970.5 70.8 V72.8M971.5 70.2 V72M972.5 69.5 V71.2M973.5 68.8 V70.6M974.5 67.8 V69.9M975.5 67.2 V69M976.5 66.4 V68.3M977.5 65.7 V67.5M978.5 65 V66.9M979.5 64.3 V66.2M980.5 63.5 V65.4M981.5 62.7 V64.7M982.5 62.1 V63.9M983.5 60.9 V63.2M984.5 60.7 V62.7M985.5 59.5 V62M986.5 58.9 V61.2M987.5 57.9 V60.6M988.5 57.4 V60.3M989.5 56.8 V59.4M990.5 56.3 V58.6M991.5 55.4 V57.7M992.5 54.7 V57.4M993.5 54.2 V56.8M994.5 53.1 V56M995.5 52.5 V55.4M996.5 52.1 V54.7M997.5 51.7 V54.8M998.5 50.8 V53.8M999.5 50.5 V53.3M1000.5 49.3 V52.8M1001.5 49.8 V51.8M1002.5 49.3 V51.1M1003.5 48.6 V50.8M1004.5 48 V50.4M1005.5 47.5 V49.6M1006.5 46.3 V49.7M1007.5 46 V48.8M1008.5 45.5 V48.2M1009.5 44.7 V48.2M1010.5 44.4 V48M1011.5 44.1 V47M1012.5 43.6 V46.5M1013.5 43.3 V47.4M1014.5 42.8 V45.8M1015.5 43.1 V45.1M1016.5 42.8 V45.8M1017.5 42.3 V45M1018.5 42 V44.8M1019.5 41.7 V44.4M1020.5 40.6 V44.2M1021.5 40.9 V44.2M1022.5 41 V43.5M1023.5 40.7 V43.2M1024.5 40.4 V43.2M1025.5 39.7 V43.4M1026.5 40.3 V44.1M1027.5 40.2 V43.9M1028.5 39.4 V44.1M1029.5 38.8 V43.1M1030.5 39.4 V43.6M1031.5 39 V43.7M1032.5 38.8 V43.8M1033.5 39.1 V43.4M1034.5 39.3 V42.7M1035.5 39.6 V42.6M1036.5 39.9 V42.3M1037.5 40 V42.9M1038.5 39.7 V43.1M1039.5 39.9 V43.8M1040.5 40 V44M1041.5 40.2 V44.3M1042.5 40.4 V44.3M1043.5 39.7 V44.7M1044.5 40.8 V44.2M1045.5 40.5 V44.7M1046.5 41.1 V44.8M1047.5 41.4 V45.1M1048.5 41.9 V45M1049.5 42.1 V45.1M1050.5 42.1 V46.1M1051.5 42.1 V46.3M1052.5 43.1 V46.6M1053.5 43.4 V46.6M1054.5 43.7 V47.8M1055.5 44.4 V47.8M1056.5 44.5 V48.6M1057.5 45.3 V48.4M1058.5 45.5 V48.7M1059.5 46.1 V49M1060.5 47 V49.7M1061.5 47.6 V49.9M1062.5 48.1 V50.5M1063.5 47.2 V51.4M1064.5 48.4 V51.7M1065.5 49.2 V52.3M1066.5 50 V52.9M1067.5 50.2 V53.5M1068.5 51.3 V53.9M1069.5 51.9 V54.7M1070.5 52.3 V55.4M1071.5 52.9 V55.9M1072.5 53.4 V56.5M1073.5 54.1 V57.3M1074.5 54.3 V57.5M1075.5 55.2 V58.4M1076.5 56.2 V58.8M1077.5 57.3 V59.6M1078.5 58.1 V60.2M1079.5 58.9 V60.7M1080.5 59.4 V61.3M1081.5 60.2 V62.3M1082.5 60.7 V63.1M1083.5 61.2 V63.6M1084.5 62.1 V64.5M1085.5 62.8 V65M1086.5 63.8 V66M1087.5 64.5 V66.6M1088.5 65.1 V67.4M1089.5 66.1 V68M1090.5 66.8 V68.7M1091.5 67.5 V69.4M1092.5 68.2 V70M1093.5 68.8 V70.8M1094.5 69.6 V71.8M1095.5 70.3 V72.4M1096.5 70.9 V73M1097.5 71.8 V73.7M1098.5 72.3 V74.6M1099.5 72.9 V75.5M1100.5 73.8 V76.1M1101.5 74.6 V76.8M1102.5 75.3 V77.4M1103.5 75.7 V78.2M1104.5 76.5 V78.6M1105.5 77 V79.5M1106.5 78.1 V80M1107.5 78.3 V80.7M1108.5 78.9 V81.5M1109.5 79.5 V82.3M1110.5 80.2 V83.5M1111.5 80.7 V83.6M1112.5 81.4 V84.4M1113.5 82.1 V84.9M1114.5 82.7 V85.6M1115.5 83.6 V85.8M1116.5 83.9 V86.6M1117.5 84.7 V87.4M1118.5 85 V88M1119.5 85.7 V88.5M1120.5 86.2 V89.3M1121.5 86.7 V89.4M1122.5 87.4 V90.1M1123.5 86.9 V91M1124.5 87.7 V91.9M1125.5 88.2 V91.6M1126.5 88.8 V92.8M1127.5 89.1 V93.2M1128.5 89.9 V93.2M1129.5 90.6 V93.8M1130.5 90.9 V93.5M1131.5 91.1 V94.2M1132.5 91.2 V94M1133.5 91.9 V94.4M1134.5 91.6 V95.4M1135.5 91.8 V95.1M1136.5 91.8 V95.8M1137.5 91.6 V96.3M1138.5 92.4 V97.2M1139.5 92.9 V96.8M1140.5 93.1 V97M1141.5 92.6 V96.8M1142.5 93.8 V96.6M1143.5 93.6 V97M1144.5 94.1 V96.6M1145.5 94.6 V97.1M1146.5 94.6 V96.9M1147.5 94.5 V96.9M1148.5 94.7 V96.9M1149.5 94.8 V96.6M1150.5 94.9 V96.8M1151.5 95 V96.8M1152.5 94.5 V97.7M1153.5 94.3 V96.6M1154.5 94.5 V96.7M1155.5 94.4 V96.4M1156.5 93.8 V96.7M1157.5 93.6 V96.7M1158.5 93.4 V96.8M1159.5 93.1 V96.7M1160.5 93.5 V96.1M1161.5 93.5 V95.6M1162.5 93.2 V95.1M1163.5 92.8 V95M1164.5 92.8 V94.9M1165.5 92.2 V94.4M1166.5 91.4 V94.9M1167.5 91.1 V94.2M1168.5 91.1 V93.6M1169.5 90.9 V93.1M1170.5 90.8 V92.7M1171.5 90.3 V92.2M1172.5 90 V91.8M1173.5 89.4 V91.6M1174.5 88.8 V91.6M1175.5 88.4 V90.8M1176.5 88 V90.2M1177.5 87.3 V90M1178.5 86.6 V89.4M1179.5 86.3 V88.8M1180.5 85.5 V88.4M1181.5 84.7 V88M1182.5 84.6 V87.3M1183.5 84.1 V86.6M1184.5 83.2 V85.9M1185.5 83.1 V85.4M1186.5 82.3 V84.7M1187.5 81.9 V84.1M1188.5 81 V83.8M1189.5 80.7 V82.7M1190.5 80.2 V82M1191.5 79.5 V81.4M1192.5 78.4 V80.7M1193.5 78.2 V80M1194.5 77.2 V79.5M1195.5 76.4 V79.1M1196.5 75.8 V78.5M1197.5 75.2 V77.8M1198.5 74.2 V77M1199.5 73.5 V76.1M1200.5 73.2 V75.4M1201.5 72.2 V74.7M1202.5 71.8 V73.8M1203.5 71 V73M1204.5 70.4 V72.4M1205.5 69.6 V71.5M1206.5 68.9 V70.8M1207.5 68.2 V70.1" stroke="#e8308f"/><line x1="41" y1="68.5" x2="1208" y2="68.5" stroke="#b82c78" stroke-width="1"/></g>
 <g clip-path="url(#c1)" fill="none" stroke-width="1" shape-rendering="crispEdges"><path d="M41.5 147.4 V166.6M42.5 149.3 V169.6M43.5 151.3 V169.8M44.5 154 V169.9M45.5 157.6 V170.8M46.5 158.3 V173M47.5 160.6 V173.5M48.5 162.8 V179.5M49.5 163.9 V178.1M50.5 167.5 V177.7M51.5 171.4 V180.7M52.5 174 V184.7M53.5 176.7 V185.9M54.5 179.2 V188.6M55.5 180.8 V192M56.5 183 V194.8M57.5 185.6 V200.8M58.5 186.9 V199.6M59.5 190.3 V202.5M60.5 192.7 V204.8M61.5 196.3 V208M62.5 199.7 V210.7M63.5 201.7 V215.6M64.5 204.6 V216.5M65.5 207 V220.4M66.5 211.3 V222.4M67.5 214.6 V224.9M68.5 216.4 V227.9M69.5 220.7 V230.2M70.5 222.1 V233.9M71.5 225.2 V236.4M72.5 228.5 V239.1M73.5 232 V242.5M74.5 234.9 V246.6M75.5 239.4 V248.5M76.5 243.2 V252M77.5 245.9 V255.6M78.5 249.5 V257.5M79.5 253.1 V261M80.5 256.2 V263.6M81.5 259.4 V267.2M82.5 262.4 V270.3M83.5 265.3 V273.6M84.5 269.3 V276.7M85.5 272.3 V280.6M86.5 274.9 V284.7M87.5 278.1 V287.3M88.5 280.2 V291M89.5 284.7 V293.7M90.5 287.1 V296.5M91.5 289.5 V300.2M92.5 291.9 V302.7M93.5 296.1 V305.1M94.5 299.7 V309.9M95.5 301.3 V312.7M96.5 303 V316.3M97.5 306.1 V319.1M98.5 306.4 V322.1M99.5 311.2 V325.6M100.5 314.8 V327.7M101.5 316 V330.3M102.5 319.4 V334.2M103.5 323.8 V335.6M104.5 325.7 V340.8M105.5 326.5 V343.5M106.5 331.8 V346.1M107.5 332.7 V347.6M108.5 336.7 V350M109.5 338.9 V352.6M110.5 339.7 V353.8M111.5 343 V356.1M112.5 345.3 V358.6M113.5 347.3 V360.6M114.5 351.2 V362.2M115.5 351.8 V367.7M116.5 354.7 V367.6M117.5 355.4 V365.7M118.5 357.2 V369.6M119.5 357.8 V369.5M120.5 358.1 V373M121.5 358.3 V374.9M122.5 358.6 V374.1M123.5 359 V380.3M124.5 361.6 V378.2M125.5 364.7 V377.3M126.5 364.4 V377.7M127.5 365.5 V380.5M128.5 365.3 V379.6M129.5 368 V382.3M130.5 367.7 V382M131.5 369.5 V383.2M132.5 372.3 V383.3M133.5 373.6 V383M134.5 372 V384.2M135.5 375.7 V383.7M136.5 375.7 V389.7M137.5 376.7 V387M138.5 377.4 V385.7M139.5 374.7 V387.2M140.5 368.5 V387.4M141.5 372.3 V387.5M142.5 371.6 V388.3M143.5 364.8 V388.9M144.5 369.3 V387.5M145.5 366.4 V388M146.5 364.3 V389.8M147.5 369.5 V386.8M148.5 367.7 V386.8M149.5 366.7 V387.6M150.5 365.5 V382.2M151.5 362.8 V383M152.5 365 V382.6M153.5 360.4 V380M154.5 356.1 V377.8M155.5 358.5 V373.3M156.5 358.1 V374.3M157.5 359.3 V373.4M158.5 354.8 V372.8M159.5 351.3 V371.7M160.5 350.9 V366.9M161.5 348.8 V367.6M162.5 348.3 V367.2M163.5 346.4 V363M164.5 346 V359.2M165.5 342.8 V360.7M166.5 339.4 V358.7M167.5 338.6 V353.7M168.5 336.5 V350.6M169.5 332.7 V348.4M170.5 333.7 V347.2M171.5 327.3 V341.3M172.5 325.8 V339.7M173.5 322.6 V336.2M174.5 315.5 V333.7M175.5 316.8 V330.4M176.5 315.2 V328.3M177.5 312.1 V324.8M178.5 310.1 V320.7M179.5 307.6 V319.1M180.5 304 V317.6M181.5 301.6 V315.1M182.5 299 V310.7M183.5 298 V307.6M184.5 293.7 V304.4M185.5 290.7 V300.8M186.5 288.7 V298M187.5 286.2 V293.9M188.5 282.8 V291.2M189.5 280.2 V287.8M190.5 276.3 V284.8M191.5 273.3 V281.3M192.5 269.9 V278.9M193.5 267.3 V275.3M194.5 264.3 V271.7M195.5 261.6 V268.7M196.5 257.7 V265.7M197.5 254.7 V262.2M198.5 251.2 V259.8M199.5 248.4 V257M200.5 244.6 V253.8M201.5 241.7 V250.4M202.5 237.6 V248M203.5 233.2 V243.7M204.5 231.7 V240.9M205.5 229.1 V237.4M206.5 224.7 V234.4M207.5 221.4 V231.5M208.5 217.3 V229.8M209.5 215.1 V228.9M210.5 211.9 V223.1M211.5 209.3 V221.6M212.5 207.1 V217.7M213.5 203.8 V213.8M214.5 201.7 V211.7M215.5 199.7 V208.9M216.5 196.4 V208.4M217.5 191.8 V204.6M218.5 190.1 V204.5M219.5 187 V199.2M220.5 182.8 V196.8M221.5 180.2 V194.1M222.5 178.2 V190.8M223.5 175.5 V188.5M224.5 172.6 V185.8M225.5 169.3 V186.5M226.5 169 V179.6M227.5 166.5 V176.9M228.5 162.6 V178.4M229.5 159.8 V176.8M230.5 158.3 V174.8M231.5 155.9 V171.7M232.5 152.3 V167.8M233.5 151.9 V166.9M234.5 149.5 V165M235.5 150.1 V165.4M236.5 147 V160.5M237.5 142.3 V160.7M238.5 146.5 V158.7M239.5 144.9 V156.3M240.5 142.7 V154.4M241.5 143 V155.7M242.5 142.2 V156M243.5 140.7 V153.7M244.5 139.8 V151.9M245.5 133 V147.6M246.5 138.3 V150.5M247.5 136.9 V147.4M248.5 135.1 V146.5M249.5 129.4 V147.7M250.5 130.8 V146.9M251.5 129.1 V149.4M252.5 127.2 V150.5M253.5 129.9 V147.9M254.5 134.4 V146.4M255.5 127.5 V148.8M256.5 134.2 V147.6M257.5 133.7 V148.4M258.5 134.8 V153.7M259.5 133.2 V152.3M260.5 131.6 V156.5M261.5 132.9 V155M262.5 136.2 V153.8M263.5 136.4 V153.4M264.5 134.4 V154.4M265.5 139 V152.7M266.5 138.3 V156.4M267.5 139.3 V155.5M268.5 138.1 V156.3M269.5 141.8 V157.2M270.5 144.4 V157.2M271.5 146.8 V157.5M272.5 149 V161.3M273.5 149.2 V163.9M274.5 148.2 V163.2M275.5 152.6 V168.1M276.5 152.4 V169.9M277.5 151.3 V173.1M278.5 153.9 V173.2M279.5 156.8 V176.3M280.5 159.7 V174.8M281.5 162.5 V174.8M282.5 161.5 V178.3M283.5 164.6 V184.4M284.5 163.7 V184.5M285.5 166.4 V186.9M286.5 170.2 V189.5M287.5 171.9 V192.6M288.5 177.7 V190.1M289.5 180.8 V193.5M290.5 183.5 V195.3M291.5 188.1 V198.4M292.5 188.9 V202M293.5 191.4 V203.5M294.5 194.1 V206.3M295.5 196.8 V209.3M296.5 200.4 V211.4M297.5 204.5 V217M298.5 203.3 V217.7M299.5 210 V221.5M300.5 212.7 V223.7M301.5 215.2 V227.6M302.5 220 V229.3M303.5 223.3 V232M304.5 226.5 V235.3M305.5 227.7 V239.3M306.5 231.3 V242.9M307.5 234.7 V245.4M308.5 239.2 V247M309.5 242.6 V250.4M310.5 245.3 V253.4M311.5 248.5 V256.1M312.5 252.3 V259.4M313.5 255.9 V262.3M314.5 258.9 V266M315.5 262 V269.4M316.5 264.4 V273.1M317.5 267.6 V276.1M318.5 271.1 V279M319.5 273.7 V282.4M320.5 276.2 V285.1M321.5 280.8 V288.4M322.5 282.6 V292.3M323.5 286.1 V296M324.5 289.1 V299.2M325.5 291.8 V301.6M326.5 296.1 V304.3M327.5 298.5 V306.9M328.5 300.8 V311M329.5 303.4 V315.2M330.5 305.8 V319.1M331.5 308.9 V322M332.5 313.3 V324.3M333.5 317.3 V326.8M334.5 319 V327.6M335.5 321.9 V331.2M336.5 321.5 V335.7M337.5 326.2 V336.8M338.5 326.2 V341.9M339.5 330.1 V343.6M340.5 330.8 V345.3M341.5 335.5 V351.3M342.5 337.5 V351.5M343.5 341 V352.8M344.5 341 V356.2M345.5 343.5 V354.9M346.5 345 V357.3M347.5 345.3 V360.4M348.5 349 V364.7M349.5 348.6 V362.3M350.5 349.3 V365M351.5 351.6 V364.8M352.5 355 V365.9M353.5 355.2 V367.3M354.5 358.1 V370.7M355.5 359.1 V376M356.5 360 V374.2M357.5 362.3 V376.5M358.5 362.2 V377.9M359.5 367.3 V378.3M360.5 365.5 V382.5M361.5 365.2 V382M362.5 363.1 V384.9M363.5 368.1 V382.7M364.5 366 V388.2M365.5 363.3 V384.7M366.5 365.7 V384.2M367.5 370.6 V384.4M368.5 369.3 V387.3M369.5 370.8 V387.9M370.5 369.7 V388.1M371.5 371.1 V386.1M372.5 370.4 V389M373.5 373 V389.2M374.5 370.2 V390.4M375.5 371.4 V387M376.5 372.3 V385.9M377.5 370 V383.8M378.5 367.2 V389.6M379.5 369.8 V390.6M380.5 369.6 V390.2M381.5 366.1 V386.1M382.5 361.5 V389.6M383.5 366.7 V384.9M384.5 366.2 V381.1M385.5 364 V379.2M386.5 364.3 V373.7M387.5 363.1 V372.2M388.5 361.8 V372.8M389.5 353.9 V373.4M390.5 356.8 V375.1M391.5 353.8 V371.6M392.5 354.5 V372.9M393.5 352.4 V369.2M394.5 351.7 V365.9M395.5 346.9 V368.2M396.5 346.2 V365.7M397.5 344.2 V361.9M398.5 338.5 V363.8M399.5 334.9 V361.3M400.5 340.2 V356.7M401.5 337.3 V351.3M402.5 337.3 V349.9M403.5 333.2 V347M404.5 331.9 V344.5M405.5 328.9 V342.9M406.5 321.2 V340.3M407.5 318.3 V335.6M408.5 321.5 V332.9M409.5 315.7 V331.3M410.5 315.2 V328.9M411.5 312.6 V326M412.5 309.7 V322.5M413.5 305.8 V319.9M414.5 303.8 V316M415.5 300.4 V312M416.5 297.9 V310.3M417.5 294 V306.7M418.5 292.4 V304.7M419.5 289.5 V299.9M420.5 285.8 V298M421.5 283.4 V294.4M422.5 279.7 V289.6M423.5 278.1 V286.6M424.5 274.8 V284.5M425.5 271.6 V280M426.5 268.8 V277.4M427.5 264.9 V273.3M428.5 262.6 V270.3M429.5 259.2 V266.9M430.5 256.3 V263.9M431.5 253.1 V260.9M432.5 249.1 V256.8M433.5 246.7 V254.1M434.5 243.2 V252.1M435.5 238.2 V247.6M436.5 236.4 V245M437.5 231.9 V241.7M438.5 229.4 V239.5M439.5 226.4 V237.7M440.5 222.6 V234.2M441.5 219.1 V231.3M442.5 217.8 V229.2M443.5 211.7 V225.5M444.5 210.9 V222.1M445.5 207.3 V219.8M446.5 203.3 V216.6M447.5 200.9 V215.3M448.5 198.6 V212.7M449.5 194.9 V207.8M450.5 192 V204.4M451.5 188 V206.7M452.5 186.3 V202.5M453.5 181.8 V198M454.5 182.5 V197M455.5 179.7 V196.1M456.5 177.6 V192.9M457.5 172.6 V188.1M458.5 168.6 V184.6M459.5 168.4 V181.4M460.5 163.4 V179.3M461.5 163.7 V178.9M462.5 161.5 V174.6M463.5 160.9 V175.1M464.5 156.6 V173.5M465.5 157.2 V168M466.5 155.5 V168.3M467.5 153.2 V168.7M468.5 151.5 V164.2M469.5 151.2 V166.4M470.5 144.2 V164.3M471.5 145.7 V162.2M472.5 141.4 V161.7M473.5 142.8 V160M474.5 138.8 V161.2M475.5 137.5 V156M476.5 136 V158.6M477.5 135.1 V152M478.5 135.1 V152.3M479.5 134 V154.2M480.5 133 V153.2M481.5 136.2 V158.2M482.5 130 V151.6M483.5 134.3 V149.1M484.5 131.1 V152.4M485.5 129.5 V155M486.5 126.8 V152M487.5 126.8 V148.6M488.5 126.8 V151.7M489.5 130.3 V148.5M490.5 135 V150.6M491.5 135.1 V148M492.5 131.6 V148.4M493.5 133.9 V154.3M494.5 133.4 V150.5M495.5 134.7 V151.6M496.5 135.5 V152.1M497.5 138.9 V155.6M498.5 139.9 V149.2M499.5 141.6 V150.7M500.5 143.4 V152.2M501.5 142.3 V154.6M502.5 142.1 V154.2M503.5 142.9 V157.7M504.5 143.5 V159.2M505.5 145.3 V160M506.5 146.7 V164.1M507.5 147.4 V164.3M508.5 149.6 V166.3M509.5 154.1 V167.4M510.5 155 V171.3M511.5 156.6 V169M512.5 158.5 V170.2M513.5 159.1 V171.6M514.5 162.5 V174.4M515.5 164.9 V176.6M516.5 168 V177.6M517.5 170.8 V180.3M518.5 173.7 V184.6M519.5 173.8 V186.6M520.5 174.7 V189.3M521.5 176.6 V191.5M522.5 178.3 V194.1M523.5 181.9 V199.4M524.5 183.1 V198.5M525.5 185.4 V200.3M526.5 189.7 V203.3M527.5 191.4 V205.1M528.5 196.7 V208.8M529.5 200.6 V210.9M530.5 201 V213.5M531.5 206.3 V215.7M532.5 209.1 V220M533.5 211.9 V222.6M534.5 214.8 V224.6M535.5 216.8 V228.1M536.5 220.6 V230.9M537.5 224.3 V233.6M538.5 227.9 V238M539.5 230.6 V240.5M540.5 234.2 V243.4M541.5 237.5 V245.8M542.5 240.4 V250.1M543.5 244.3 V253.1M544.5 246.6 V255.8M545.5 250.3 V258.3M546.5 253.9 V261.5M547.5 257.7 V264.6M548.5 261 V268M549.5 263.6 V271.5M550.5 266.2 V275M551.5 269.5 V278.4M552.5 273.3 V281.9M553.5 276.3 V284.6M554.5 279.6 V287.6M555.5 283.8 V291.6M556.5 285.8 V293.8M557.5 289 V297.9M558.5 290.5 V302M559.5 295.3 V305.2M560.5 297.4 V308.2M561.5 300.3 V310.9M562.5 302.9 V313.1M563.5 305.5 V317.6M564.5 309.1 V321.2M565.5 311.8 V322.1M566.5 314.2 V326.1M567.5 318 V328.4M568.5 318.7 V331.6M569.5 320.8 V334.9M570.5 324 V337.3M571.5 326 V337.8M572.5 329.1 V341.5M573.5 327.3 V341M574.5 336.1 V343.9M575.5 336.5 V347.7M576.5 342.3 V349.5M577.5 341.9 V352.8M578.5 345 V355.8M579.5 345.7 V359.2M580.5 348.3 V361.4M581.5 346.8 V362.6M582.5 349.2 V366.3M583.5 353.9 V367.8M584.5 352.8 V370.9M585.5 353.5 V369.7M586.5 358.8 V371M587.5 357 V374.4M588.5 357.8 V375.1M589.5 359.6 V376.2M590.5 360.1 V375.7M591.5 363.5 V377.2M592.5 366.6 V379.8M593.5 366.7 V379.4M594.5 367.1 V379.2M595.5 367.9 V380M596.5 367.7 V381.5M597.5 370.9 V386.4M598.5 367.8 V384.7M599.5 370.2 V383.2M600.5 370.6 V387.2M601.5 367.5 V384.4M602.5 370.4 V385.8M603.5 371 V387.3M604.5 371.1 V388.1M605.5 373.6 V387.1M606.5 371.7 V391M607.5 371.9 V387.5M608.5 375.3 V384.9M609.5 372.6 V386.3M610.5 374.7 V383M611.5 371.1 V383.7M612.5 369.8 V383.2M613.5 368.7 V384M614.5 364.9 V386.2M615.5 366.9 V383.2M616.5 366 V380.3M617.5 362.5 V380.5M618.5 366.2 V379.8M619.5 362.3 V378.4M620.5 363.1 V380.7M621.5 362.8 V381.1M622.5 361.6 V377.7M623.5 360.5 V375.3M624.5 354.6 V377.5M625.5 356.7 V370.8M626.5 352.5 V371.7M627.5 348.1 V371.2M628.5 349.4 V362.9M629.5 348.2 V360.1M630.5 343.5 V358.6M631.5 342.8 V357M632.5 340.2 V360.1M633.5 338.5 V354.5M634.5 336.5 V352.6M635.5 337 V350.8M636.5 331.7 V346M637.5 331.5 V343.2M638.5 327.8 V341.5M639.5 326.1 V339.9M640.5 321 V336.1M641.5 321.3 V333.7M642.5 318.1 V332M643.5 312.9 V328M644.5 312.2 V329.4M645.5 309.9 V321.6M646.5 308.8 V319.5M647.5 305 V316.3M648.5 303.1 V313.6M649.5 299.4 V310.2M650.5 296.4 V307.2M651.5 293.8 V307M652.5 290.6 V301.2M653.5 287.7 V297.4M654.5 284.9 V293.6M655.5 282.3 V290.2M656.5 279.2 V287.9M657.5 275.9 V284.7M658.5 273 V281.5M659.5 269.6 V277.5M660.5 266.1 V275.3M661.5 263.3 V270.8M662.5 260.2 V268.2M663.5 256.8 V265M664.5 253.5 V261.1M665.5 250.3 V258.8M666.5 246.7 V255.8M667.5 243.9 V251.8M668.5 240.2 V249.3M669.5 237.6 V246.4M670.5 234.1 V242.5M671.5 230 V240.8M672.5 226.7 V237.9M673.5 223.2 V234.1M674.5 220.3 V231.1M675.5 217.2 V229.9M676.5 213.8 V225.1M677.5 211.7 V222M678.5 208.4 V217.6M679.5 205.9 V214.5M680.5 202.7 V212.4M681.5 199.2 V210M682.5 195.5 V208.6M683.5 192.9 V205.5M684.5 190.2 V204.1M685.5 186 V201.4M686.5 183.6 V196.9M687.5 180.9 V194.4M688.5 178.1 V193.2M689.5 176.5 V192.4M690.5 175.1 V187.2M691.5 174.6 V182.7M692.5 168.3 V183M693.5 167.5 V184.9M694.5 166.2 V179.6M695.5 163.4 V179.5M696.5 157.8 V177M697.5 155.2 V178.3M698.5 157.2 V171.2M699.5 153.4 V168.1M700.5 153.4 V163.7M701.5 152.9 V160.7M702.5 150.7 V162.2M703.5 150.4 V161.3M704.5 148.5 V159.5M705.5 141.9 V160.6M706.5 141.9 V157.7M707.5 143.6 V159.1M708.5 140.4 V155.6M709.5 139.1 V154.1M710.5 138.1 V153.9M711.5 138.9 V151.2M712.5 137.6 V151.5M713.5 139.3 V150.3M714.5 137.5 V149.8M715.5 136.6 V148.9M716.5 134.4 V146.7M717.5 136 V146.6M718.5 135.1 V148.4M719.5 128.1 V149.5M720.5 136.5 V147.3M721.5 135.6 V146.2M722.5 136 V148.8M723.5 135.6 V150.2M724.5 138.2 V150.4M725.5 131.2 V149.4M726.5 136.9 V150.1M727.5 136.1 V149.2M728.5 138.2 V149.5M729.5 137.4 V157.3M730.5 139.7 V152M731.5 138.2 V153.7M732.5 140.7 V151.9M733.5 140.3 V152.7M734.5 139.1 V152.6M735.5 140.6 V154.9M736.5 138.8 V159.1M737.5 139.4 V158.7M738.5 140.5 V162.2M739.5 145.2 V159M740.5 144.6 V161.8M741.5 150 V162.3M742.5 149.1 V162.9M743.5 153 V164M744.5 155.5 V166.8M745.5 158.4 V166.3M746.5 158.6 V168.7M747.5 161 V170.4M748.5 163.4 V172.3M749.5 163.6 V175.2M750.5 166.1 V177.2M751.5 168 V181.5M752.5 167.2 V185.1M753.5 170 V187.5M754.5 174.3 V189M755.5 174.7 V191M756.5 179.4 V198M757.5 183.4 V196.6M758.5 185 V197.3M759.5 188.5 V201.5M760.5 192.1 V203.3M761.5 194.6 V208.2M762.5 198.8 V211.9M763.5 201.7 V214.3M764.5 204.2 V216.6M765.5 208.2 V218.7M766.5 210.3 V221M767.5 214.5 V224.6M768.5 218.1 V227.5M769.5 220.6 V230.3M770.5 222.8 V233M771.5 226.6 V236.4M772.5 230.2 V239.3M773.5 233.8 V242M774.5 235.9 V245.7M775.5 239.4 V248.5M776.5 243.5 V252.1M777.5 247 V254.5M778.5 249.7 V257.6M779.5 253.6 V260.5M780.5 256.7 V263.7M781.5 259.5 V267.5M782.5 262.2 V269.8M783.5 266.1 V274.1M784.5 268.2 V278M785.5 270.5 V280.5M786.5 274.3 V284.4M787.5 276.4 V287.5M788.5 279.7 V290.6M789.5 282.8 V294.3M790.5 286.9 V297.9M791.5 289.9 V301.3M792.5 291.9 V303M793.5 293.7 V305.6M794.5 297.2 V308.8M795.5 299.6 V311.6M796.5 303.4 V316.2M797.5 305.7 V319.2M798.5 308.8 V325.2M799.5 310.1 V325.1M800.5 313.4 V327.3M801.5 317.1 V329.9M802.5 319.9 V333.4M803.5 322.5 V333.9M804.5 324.5 V337.4M805.5 327.9 V340.9M806.5 331.9 V341.4M807.5 332.5 V344.1M808.5 336.4 V346.4M809.5 339.1 V350.6M810.5 338.9 V354.1M811.5 339.4 V355.9M812.5 344.3 V357.1M813.5 345.6 V359.2M814.5 349.3 V360.9M815.5 342.5 V362.9M816.5 350.7 V367.3M817.5 346.9 V370M818.5 350.4 V373.1M819.5 352.5 V372.2M820.5 354.3 V374.6M821.5 357 V374M822.5 356.8 V379.2M823.5 360.5 V380.1M824.5 360.4 V380.5M825.5 363.9 V383.1M826.5 356.5 V384.1M827.5 364.7 V381.4M828.5 364.7 V382M829.5 365.4 V388.7M830.5 366.2 V384.5M831.5 368.9 V384.5M832.5 369.2 V384.4M833.5 368.7 V385.3M834.5 373 V389.6M835.5 372 V387.2M836.5 370.7 V387.9M837.5 369.5 V386.7M838.5 367.5 V387M839.5 368.9 V389.2M840.5 370.7 V389.4M841.5 366.4 V390.4M842.5 366.9 V385.5M843.5 366.9 V391.2M844.5 365.1 V387M845.5 359.3 V386.4M846.5 365.9 V388.5M847.5 364.7 V385.7M848.5 367 V383M849.5 367.1 V385.4M850.5 364.9 V382.4M851.5 364.9 V380.7M852.5 359.4 V383.9M853.5 360.4 V381.6M854.5 359.7 V376M855.5 357.5 V375.8M856.5 357.1 V373M857.5 356.3 V373.4M858.5 355 V372.7M859.5 349.8 V373.1M860.5 347.8 V371M861.5 348.8 V365.9M862.5 347.9 V365.4M863.5 344.5 V364.6M864.5 342.3 V360.9M865.5 340.7 V360.1M866.5 340 V357.2M867.5 341.2 V353M868.5 337.6 V350.2M869.5 332.3 V348.3M870.5 335.1 V343M871.5 331.8 V342.3M872.5 328.3 V341.4M873.5 324.7 V338M874.5 320.7 V334.9M875.5 313.7 V334.1M876.5 316.6 V330.6M877.5 314.1 V328.5M878.5 310.1 V325.1M879.5 307.2 V320.8M880.5 306.1 V319M881.5 303.1 V316.2M882.5 299.9 V314.3M883.5 295.5 V308.2M884.5 293 V305.5M885.5 292.2 V303.3M886.5 289.7 V299.8M887.5 285.8 V296.7M888.5 283.1 V292.1M889.5 280.2 V289.2M890.5 277.3 V286.6M891.5 274.5 V283.3M892.5 271.1 V279.2M893.5 268.3 V276.5M894.5 263.9 V272.4M895.5 261.4 V268.9M896.5 258.7 V266.2M897.5 255.3 V262.3M898.5 251.8 V259.6M899.5 248.4 V256.6M900.5 245.6 V252.9M901.5 242.2 V250.2M902.5 238.9 V247.8M903.5 235.9 V244.6M904.5 231 V241.3M905.5 228.3 V238.3M906.5 225.1 V234.8M907.5 222 V233.3M908.5 216.8 V230M909.5 214.1 V227.1M910.5 212.1 V222.1M911.5 208.2 V220.5M912.5 205.6 V216.1M913.5 202.9 V212.1M914.5 199.6 V209.2M915.5 197.2 V207.2M916.5 195.7 V204.9M917.5 191.7 V203.7M918.5 187 V203.1M919.5 184.1 V198.9M920.5 182.4 V196M921.5 178.2 V196.5M922.5 178.7 V191M923.5 174.9 V189.9M924.5 175.1 V188.2M925.5 170.3 V184.6M926.5 168.1 V183.7M927.5 165.5 V183M928.5 162.3 V180.1M929.5 160.2 V174.6M930.5 160.1 V173.7M931.5 158.6 V168.4M932.5 154.7 V168M933.5 153.2 V167.6M934.5 152.2 V166.5M935.5 147.4 V167.1M936.5 146.4 V167.5M937.5 144.6 V165.2M938.5 134.7 V161.5M939.5 141.9 V163.7M940.5 141.7 V162M941.5 140.7 V158.2M942.5 138 V158.6M943.5 138.9 V158.5M944.5 137.6 V156.6M945.5 137.3 V152.3M946.5 136.8 V151.4M947.5 138 V149.2M948.5 136 V149M949.5 135.6 V150.2M950.5 131.6 V148.2M951.5 130.1 V151.7M952.5 132.7 V156.1M953.5 133.5 V160M954.5 133.4 V150M955.5 133 V151.2M956.5 130.8 V146M957.5 136.1 V148M958.5 134.5 V145.2M959.5 133.9 V145.1M960.5 127.1 V147.5M961.5 133.1 V144.9M962.5 135.4 V148.9M963.5 136.5 V152.1M964.5 138.7 V151.5M965.5 139.3 V150M966.5 138.6 V154.6M967.5 142.2 V155.8M968.5 141.8 V158.9M969.5 140.8 V157.2M970.5 140.7 V158M971.5 141.7 V159.4M972.5 147.4 V160.1M973.5 145.8 V163.3M974.5 145 V161.2M975.5 146.8 V163.4M976.5 148.6 V165.3M977.5 150.8 V168.5M978.5 155.2 V166.9M979.5 157.7 V168.6M980.5 159.3 V175.9M981.5 162.7 V173.7M982.5 160.5 V178.2M983.5 167.1 V179.5M984.5 170.4 V181.9M985.5 172.8 V183.4M986.5 174.3 V187.3M987.5 177.4 V187.8M988.5 178.2 V191.8M989.5 181.1 V194.2M990.5 181.3 V195.4M991.5 184.1 V200.6M992.5 187.6 V201.2M993.5 190.1 V205M994.5 192.3 V208.5M995.5 196.9 V211.6M996.5 200.6 V211.3M997.5 201 V216.7M998.5 205.1 V217.9M999.5 208.3 V220.2M1000.5 213.4 V223.4M1001.5 216 V227M1002.5 218.4 V229.3M1003.5 222.4 V231.3M1004.5 226.3 V235.5M1005.5 229.4 V238.5M1006.5 233 V240.7M1007.5 235.1 V244.7M1008.5 239.3 V246.7M1009.5 241.8 V250.4M1010.5 245.6 V253.4M1011.5 248.5 V256.3M1012.5 251.9 V259.9M1013.5 255.2 V262.6M1014.5 258.1 V265.8M1015.5 261.5 V268.6M1016.5 264.2 V272.5M1017.5 268.2 V275.6M1018.5 270.5 V278.3M1019.5 273.8 V281.8M1020.5 275.8 V284.6M1021.5 279 V288.4M1022.5 282 V292M1023.5 286.4 V294.4M1024.5 289.9 V299.7M1025.5 293 V301.2M1026.5 297 V304.9M1027.5 299.9 V310.3M1028.5 303 V311.7M1029.5 306 V313.6M1030.5 306.3 V317.3M1031.5 310.7 V320M1032.5 313.1 V325M1033.5 315 V326.5M1034.5 316.3 V329.8M1035.5 320.4 V332.8M1036.5 321.4 V334.1M1037.5 321.8 V335.3M1038.5 326.1 V338.4M1039.5 328 V341.1M1040.5 328.2 V343.1M1041.5 329.6 V346.7M1042.5 331.2 V351.2M1043.5 334.5 V353.2M1044.5 338.7 V354.3M1045.5 340.3 V355.4M1046.5 345.1 V358.9M1047.5 344.7 V360.5M1048.5 349 V361.8M1049.5 347.8 V367.4M1050.5 353.1 V367.1M1051.5 356.1 V367.6M1052.5 357.7 V367.5M1053.5 356.9 V368.3M1054.5 360.9 V371.8M1055.5 362.2 V371.5M1056.5 364.7 V374.7M1057.5 364.7 V376.2M1058.5 365.4 V376.6M1059.5 365.6 V377.1M1060.5 364.9 V380.3M1061.5 366.3 V378.6M1062.5 367.9 V382.3M1063.5 367.8 V382.6M1064.5 370.6 V382.3M1065.5 365.7 V384.5M1066.5 375.3 V386.9M1067.5 374.3 V389.7M1068.5 376.1 V389.4M1069.5 377.9 V389.2M1070.5 376.7 V385.1M1071.5 375.3 V390.3M1072.5 375.1 V386.2M1073.5 373.5 V386.4M1074.5 370.4 V384.9M1075.5 370.4 V387.9M1076.5 367.4 V387.4M1077.5 368.2 V387.8M1078.5 367.2 V386.2M1079.5 370 V383.7M1080.5 368.8 V386.6M1081.5 370 V392.4M1082.5 369.2 V388.3M1083.5 369.3 V380.7M1084.5 369 V379.5M1085.5 368.3 V378.6M1086.5 361.4 V381.6M1087.5 366.2 V375.6M1088.5 362.1 V374M1089.5 358.5 V372.6M1090.5 357.2 V372.8M1091.5 358.4 V371.2M1092.5 353.8 V371.3M1093.5 353.3 V367.3M1094.5 350.2 V365.7M1095.5 351.1 V363.8M1096.5 348.1 V361.4M1097.5 346.4 V357.1M1098.5 343.6 V357.5M1099.5 342.8 V355.4M1100.5 341.1 V354.2M1101.5 337 V350.2M1102.5 333.5 V350.6M1103.5 331.3 V346.2M1104.5 328.2 V342.8M1105.5 326 V339.5M1106.5 323.6 V337.5M1107.5 322 V334.2M1108.5 317.7 V333.2M1109.5 317.3 V330.6M1110.5 314.6 V327.5M1111.5 311.3 V323.9M1112.5 309.5 V322M1113.5 307.8 V317.3M1114.5 305 V314.6M1115.5 302 V311.8M1116.5 299.6 V309.7M1117.5 297.6 V305.1M1118.5 293.2 V302.9M1119.5 290.5 V299.9M1120.5 287.4 V296.4M1121.5 283.4 V293.2M1122.5 281.3 V289.3M1123.5 277 V286.9M1124.5 273.5 V283.3M1125.5 270.8 V280.4M1126.5 268.1 V276.6M1127.5 264.6 V274.1M1128.5 262.4 V270M1129.5 259.2 V266.8M1130.5 256.6 V263.3M1131.5 253.3 V260.5M1132.5 249.9 V257.7M1133.5 246.4 V254.4M1134.5 242.9 V251M1135.5 240.2 V248.5M1136.5 236.8 V245.3M1137.5 231.8 V242.9M1138.5 230 V239.1M1139.5 227.3 V235.9M1140.5 224.1 V233.3M1141.5 219.6 V231.1M1142.5 217.2 V228.5M1143.5 214.7 V226.4M1144.5 210.4 V221.6M1145.5 206.8 V219.4M1146.5 203.6 V216.7M1147.5 200.9 V215.2M1148.5 197.4 V210.5M1149.5 194.7 V206.6M1150.5 191.1 V204.6M1151.5 189 V202.5M1152.5 187.7 V199.4M1153.5 183.9 V197M1154.5 182.1 V195.6M1155.5 178.3 V193.4M1156.5 176.3 V191.3M1157.5 173.7 V189.1M1158.5 167.7 V186.7M1159.5 165.6 V184M1160.5 163.5 V179.2M1161.5 162.7 V176.8M1162.5 161.9 V175.3M1163.5 160.1 V173M1164.5 157.2 V170.7M1165.5 155.4 V167.9M1166.5 154.2 V169.4M1167.5 152.6 V168M1168.5 152.5 V169M1169.5 146 V167M1170.5 145.4 V168.6M1171.5 142.5 V163.1M1172.5 143.5 V162.6M1173.5 142.6 V159.3M1174.5 143.2 V157.3M1175.5 140.8 V158.2M1176.5 142.7 V155.3M1177.5 143 V153.3M1178.5 139.2 V154.5M1179.5 135.6 V153.3M1180.5 139.1 V151.9M1181.5 135.4 V151.2M1182.5 135.8 V151.3M1183.5 134.3 V146.9M1184.5 133.4 V146.1M1185.5 132.1 V148.3M1186.5 133.9 V151.3M1187.5 132.9 V149.6M1188.5 132.6 V149M1189.5 130.8 V150.2M1190.5 129.3 V152.9M1191.5 130.5 V150.7M1192.5 131.3 V147.8M1193.5 131.5 V146M1194.5 136.5 V144.6M1195.5 136.1 V144.8M1196.5 137.9 V144.4M1197.5 137.4 V147.5M1198.5 138.5 V147.7M1199.5 138.8 V151.8M1200.5 140 V155.7M1201.5 134.5 V157.3M1202.5 134.2 V155.9M1203.5 138.2 V160.5M1204.5 141.7 V160M1205.5 141.8 V161.2M1206.5 144.3 V163.5M1207.5 146.1 V162.1" stroke="#6cb535"/><path d="M41.5 356.5 V372.2M42.5 354 V373.7M43.5 360.1 V376.1M44.5 362.5 V377M45.5 360.2 V376.5M46.5 365.2 V379.2M47.5 364.8 V378.3M48.5 364.1 V378.1M49.5 365.1 V380.6M50.5 365.1 V380.1M51.5 367 V382.3M52.5 368.3 V382.2M53.5 367.3 V382.9M54.5 369 V383.1M55.5 361.5 V382.8M56.5 365.3 V383.9M57.5 367.5 V388.6M58.5 370.3 V385.4M59.5 367 V390.4M60.5 372.3 V388M61.5 374.3 V388M62.5 372.9 V390.9M63.5 374.6 V396.1M64.5 375.5 V394.7M65.5 371.9 V388.9M66.5 371.5 V390.5M67.5 369.8 V391.4M68.5 366.8 V388.7M69.5 363.4 V391.3M70.5 363.1 V386.6M71.5 364.3 V384.5M72.5 365.9 V384.5M73.5 366.3 V380.2M74.5 360.8 V378.3M75.5 361.3 V380.1M76.5 361.4 V378M77.5 359.6 V377.3M78.5 358.5 V373.1M79.5 356.4 V373.5M80.5 355.5 V374.5M81.5 354.9 V369.2M82.5 351.9 V365.6M83.5 351.6 V364.1M84.5 350.6 V360.6M85.5 348.3 V358.9M86.5 346.6 V358.3M87.5 342 V358.4M88.5 339.1 V358.3M89.5 335.7 V352.8M90.5 334.6 V349.5M91.5 334.3 V348.7M92.5 331.5 V346.1M93.5 331.2 V344.6M94.5 328.5 V338.8M95.5 326.3 V339.7M96.5 323.2 V337.2M97.5 316.7 V333.5M98.5 315.3 V332M99.5 312.8 V326.6M100.5 313.5 V322M101.5 310.9 V319.2M102.5 308.2 V316.7M103.5 303.5 V312.9M104.5 303.6 V310.6M105.5 299.5 V309.2M106.5 295.1 V306.5M107.5 292.8 V301.9M108.5 289.2 V300M109.5 287.2 V296.2M110.5 283.9 V293.3M111.5 280.1 V288.6M112.5 276.9 V287.1M113.5 273.6 V283.9M114.5 271.2 V280.4M115.5 267.7 V276.3M116.5 264.5 V272.5M117.5 261.2 V270.1M118.5 258.9 V266.1M119.5 255.8 V262.9M120.5 252.5 V260M121.5 248.7 V257.5M122.5 245.5 V254.2M123.5 242.1 V250.9M124.5 239.4 V248.1M125.5 236.8 V244.6M126.5 232.7 V241.5M127.5 228.2 V239.3M128.5 225.4 V235.2M129.5 221.8 V233.1M130.5 218.7 V230M131.5 216.8 V226.3M132.5 213.9 V224.3M133.5 209.2 V222.3M134.5 207.5 V219.1M135.5 204.9 V216.7M136.5 200.7 V214.9M137.5 196.9 V210.7M138.5 194.8 V207M139.5 191.5 V204.8M140.5 188.9 V201.6M141.5 186 V199.9M142.5 183.6 V197.3M143.5 180.5 V195.1M144.5 179.7 V192.8M145.5 176.9 V192.1M146.5 173.3 V187.8M147.5 167.5 V189.3M148.5 168.1 V186.2M149.5 167.8 V185M150.5 166.2 V178.2M151.5 163.1 V175.2M152.5 159.1 V173.9M153.5 155.8 V172.1M154.5 155.3 V168.2M155.5 151.3 V168.9M156.5 148.5 V164.3M157.5 147 V162.8M158.5 146.3 V161M159.5 145.6 V161.6M160.5 144.6 V161M161.5 144.2 V158.2M162.5 142.9 V153.7M163.5 138.6 V155M164.5 139.2 V152.7M165.5 138.4 V150.2M166.5 135.8 V151M167.5 135.8 V151.1M168.5 136.6 V147.7M169.5 137.3 V147.4M170.5 138.3 V147.4M171.5 136.8 V147.5M172.5 136 V150.6M173.5 136.8 V149.5M174.5 138.6 V148.7M175.5 136.6 V147.7M176.5 139.4 V147.1M177.5 138.7 V146.1M178.5 136.7 V144.7M179.5 133.1 V147.4M180.5 134.9 V147.5M181.5 132.7 V148.6M182.5 133.3 V151.4M183.5 134.2 V155.8M184.5 131.3 V151.6M185.5 125.5 V151.4M186.5 134.2 V152.9M187.5 133.3 V156.4M188.5 129.7 V157.9M189.5 136.8 V152.3M190.5 137.3 V151.6M191.5 139.5 V152.1M192.5 142.2 V154.2M193.5 144.6 V157M194.5 138 V158.9M195.5 146.6 V160.1M196.5 147.4 V164.7M197.5 151.9 V165.3M198.5 153.9 V167.9M199.5 154.2 V170.2M200.5 158.4 V170.1M201.5 160.1 V170M202.5 161.6 V171.8M203.5 163.8 V176.5M204.5 165.5 V176.8M205.5 165.3 V182.9M206.5 167.3 V183.8M207.5 167.5 V185.9M208.5 170.5 V188.9M209.5 172.8 V190.2M210.5 176.8 V192.3M211.5 179.7 V195.5M212.5 179.9 V196.7M213.5 183.9 V199.8M214.5 187.6 V202.3M215.5 192 V205.6M216.5 194.6 V206.1M217.5 198.2 V209.6M218.5 197.7 V212.2M219.5 202.4 V215M220.5 206.2 V216.3M221.5 208.9 V221.5M222.5 212.6 V221.9M223.5 215.6 V224.5M224.5 219.7 V227.4M225.5 222.7 V230.6M226.5 226 V233.9M227.5 229.1 V236.7M228.5 231.8 V240M229.5 234.8 V243.4M230.5 237.6 V247.5M231.5 241.2 V250.2M232.5 244 V253.6M233.5 248 V256.5M234.5 251.5 V259.7M235.5 255.2 V262M236.5 258.3 V265.1M237.5 261.1 V268.3M238.5 263.4 V272.4M239.5 267 V275.2M240.5 269.9 V278.5M241.5 271.8 V281.3M242.5 276.1 V284.5M243.5 278.9 V288.1M244.5 282.6 V291.3M245.5 286.5 V295.3M246.5 288.7 V298.2M247.5 292.1 V301.3M248.5 296.1 V305.4M249.5 297.3 V308.7M250.5 300.1 V312.6M251.5 300.8 V314.6M252.5 304.6 V319.9M253.5 308.3 V321.6M254.5 309.9 V322.8M255.5 314.2 V326.3M256.5 316.5 V329.3M257.5 319.1 V330.5M258.5 322 V334.9M259.5 324.9 V336.1M260.5 327.5 V337.1M261.5 331.6 V342M262.5 332.6 V344.5M263.5 332.1 V345.9M264.5 337.3 V349.8M265.5 340.5 V355M266.5 342.2 V356.3M267.5 345.5 V357M268.5 346.1 V359.7M269.5 348.6 V360.1M270.5 352.4 V366.3M271.5 350.5 V363M272.5 353.8 V362.6M273.5 356 V364M274.5 355.6 V370.1M275.5 354.4 V372.3M276.5 354.2 V372.9M277.5 352.1 V379.2M278.5 359 V377.3M279.5 364.3 V377M280.5 364.1 V376.9M281.5 365.8 V377.2M282.5 366.2 V380.2M283.5 366.6 V382M284.5 367.3 V382.5M285.5 369.9 V385.2M286.5 367.5 V385.9M287.5 373.2 V383.7M288.5 371.6 V390.5M289.5 368.9 V389.6M290.5 370.9 V387.1M291.5 369.2 V390.2M292.5 371.7 V392.8M293.5 372.1 V390.4M294.5 372 V388.9M295.5 369.4 V388.6M296.5 364.6 V389.8M297.5 371.8 V387M298.5 373 V386.6M299.5 360.4 V383.1M300.5 368.1 V388.6M301.5 366.9 V382.7M302.5 368.1 V383.7M303.5 363.5 V386M304.5 363.8 V384.1M305.5 361 V386.6M306.5 363.6 V386.9M307.5 360.6 V383M308.5 359 V379M309.5 359.7 V381.5M310.5 356 V376.5M311.5 357.2 V371.7M312.5 356.2 V375.3M313.5 355 V368.3M314.5 352.6 V371.9M315.5 353.1 V365.9M316.5 352.2 V368.1M317.5 348.5 V363.8M318.5 344.5 V366.9M319.5 341.9 V364.5M320.5 339.9 V359.8M321.5 339.5 V365.6M322.5 335.9 V356.1M323.5 332.3 V352.2M324.5 333.8 V350.8M325.5 331.1 V349.6M326.5 329.8 V344.2M327.5 325.9 V344M328.5 324.8 V339.4M329.5 320.8 V335.8M330.5 318.8 V334.2M331.5 317.5 V331.8M332.5 314.4 V329.6M333.5 312.8 V326.9M334.5 311.5 V323.2M335.5 306.6 V317.7M336.5 302 V318.3M337.5 302.7 V313.5M338.5 297.7 V308.8M339.5 296 V306.2M340.5 293.2 V302.5M341.5 290.2 V299.2M342.5 286.5 V297.7M343.5 284.3 V293.2M344.5 280.4 V290.5M345.5 278.1 V287.1M346.5 275.6 V283.4M347.5 271.7 V280.1M348.5 269.1 V277M349.5 265.3 V274.1M350.5 263.2 V270.5M351.5 259.4 V267.4M352.5 256.6 V264.4M353.5 253.1 V261.6M354.5 250 V257.8M355.5 247 V255.1M356.5 244.1 V251.7M357.5 239.8 V248.8M358.5 237.2 V245.5M359.5 234.5 V242.8M360.5 231.1 V240.3M361.5 226.6 V236.6M362.5 225.1 V233.2M363.5 219.5 V230.9M364.5 217.8 V227.8M365.5 214.3 V225.5M366.5 212.4 V223M367.5 208.7 V219.6M368.5 205.6 V219.2M369.5 201.8 V214.7M370.5 199.9 V215.1M371.5 195.5 V208.6M372.5 194 V207.7M373.5 189 V203.1M374.5 188 V200.5M375.5 184.8 V196.8M376.5 180.6 V194.2M377.5 178.8 V192.7M378.5 177 V189.1M379.5 173.7 V186.7M380.5 172.9 V183.6M381.5 170.4 V183.7M382.5 166 V180M383.5 164.4 V179.7M384.5 162.5 V177.2M385.5 159.3 V173.3M386.5 157.6 V169.2M387.5 154.6 V168.2M388.5 150.4 V172.1M389.5 149.1 V166.6M390.5 146.2 V165.3M391.5 144.5 V166.8M392.5 148 V166.4M393.5 148.1 V161.9M394.5 146 V167.8M395.5 144.7 V157.4M396.5 143.2 V156.9M397.5 141.1 V155.4M398.5 136.7 V156.6M399.5 136.9 V156M400.5 138.1 V152.2M401.5 136.7 V152.9M402.5 135.6 V152.2M403.5 139.1 V151.3M404.5 141.5 V150.5M405.5 141.9 V149.3M406.5 140.8 V153.7M407.5 137.9 V148.3M408.5 139.3 V146.2M409.5 134.7 V148.3M410.5 132.6 V151.2M411.5 132.3 V149.6M412.5 133 V148.4M413.5 134 V150.1M414.5 133.3 V148.5M415.5 135.4 V146.2M416.5 135.7 V147.1M417.5 136.2 V148.9M418.5 136.6 V147.8M419.5 138.2 V150.4M420.5 132.2 V151.6M421.5 136 V152.8M422.5 139.3 V155.1M423.5 135.7 V157.9M424.5 138.2 V156.9M425.5 137.8 V159.2M426.5 144.1 V157M427.5 141.8 V161M428.5 146.9 V160M429.5 146.2 V162.6M430.5 149 V166.1M431.5 151.9 V171.2M432.5 153.4 V171.9M433.5 153.8 V172M434.5 155.9 V173.2M435.5 157 V175.4M436.5 159.1 V175.2M437.5 163.9 V174.4M438.5 164.4 V178.2M439.5 166.6 V182.5M440.5 169.7 V185.8M441.5 172.2 V189.3M442.5 169.7 V189.6M443.5 173.3 V191.7M444.5 177.4 V194.7M445.5 180 V195.1M446.5 181.7 V197.3M447.5 187.1 V200.7M448.5 190.8 V202M449.5 192.7 V205.3M450.5 196.1 V208.9M451.5 197.4 V210.3M452.5 202.8 V214.5M453.5 205.1 V215.7M454.5 208.1 V217.4M455.5 211.5 V221.2M456.5 214.7 V222.8M457.5 216.5 V226.6M458.5 221.1 V229.9M459.5 223.8 V233M460.5 225.9 V236.6M461.5 231 V240.5M462.5 233.7 V243.3M463.5 237 V245.1M464.5 240.4 V248.5M465.5 243 V251.5M466.5 247.5 V254.7M467.5 250.6 V257.7M468.5 253.5 V260.5M469.5 257 V264.1M470.5 260 V268M471.5 262.9 V270.3M472.5 266.6 V274.1M473.5 269.5 V276.7M474.5 272.1 V280.6M475.5 275.8 V283.2M476.5 279 V286.2M477.5 281.5 V290.7M478.5 284 V293.3M479.5 287.6 V297.2M480.5 289.6 V298.9M481.5 293 V303.7M482.5 296.7 V306.3M483.5 297.4 V311.3M484.5 302.3 V313.1M485.5 305.8 V314.9M486.5 307.2 V319M487.5 311.4 V322.5M488.5 312.5 V325.4M489.5 317 V328.1M490.5 319.1 V329.6M491.5 321 V331.9M492.5 322.7 V338M493.5 324.7 V337.8M494.5 330.1 V342.9M495.5 332 V344.4M496.5 330.1 V346.3M497.5 335.1 V347.1M498.5 338.4 V350.5M499.5 335.4 V351.8M500.5 340.4 V356.3M501.5 343.6 V356.6M502.5 345.4 V356.8M503.5 344.8 V362.3M504.5 350.2 V363.4M505.5 352.4 V362.7M506.5 353.9 V364.8M507.5 356.7 V367.9M508.5 356.3 V371.9M509.5 360.3 V372.2M510.5 361.2 V374.5M511.5 360 V376.3M512.5 362.9 V379.4M513.5 362.3 V377.3M514.5 359.5 V379.3M515.5 361.7 V379.1M516.5 364 V383.4M517.5 367.1 V385.6M518.5 366.1 V386.7M519.5 369.5 V384.4M520.5 371.3 V387.2M521.5 370.5 V386M522.5 372.3 V387.9M523.5 369.8 V387.6M524.5 370.3 V387.8M525.5 364.8 V389.3M526.5 373.1 V387.6M527.5 374.3 V382.6M528.5 373.6 V384.5M529.5 370.2 V383.3M530.5 371.4 V385.4M531.5 369.9 V382.1M532.5 371.2 V385.8M533.5 373.4 V384.7M534.5 373.3 V386M535.5 371.3 V383.2M536.5 364.8 V382.2M537.5 370.8 V382.4M538.5 366.8 V381.2M539.5 366.6 V379M540.5 363.4 V377.9M541.5 362.4 V380.8M542.5 359.6 V382M543.5 361.1 V381.2M544.5 358.5 V379.9M545.5 357.8 V373.9M546.5 358.9 V372.3M547.5 357.6 V372.4M548.5 354.7 V369.1M549.5 351.6 V366.5M550.5 347.7 V365.1M551.5 345.3 V364.8M552.5 344.3 V360.8M553.5 339 V359.5M554.5 340.5 V356.5M555.5 339.9 V352.5M556.5 335.6 V353.2M557.5 332.1 V349.3M558.5 334.7 V345.4M559.5 331.3 V343.9M560.5 329.2 V341.6M561.5 327.6 V337.6M562.5 325.5 V335.9M563.5 321.7 V334.7M564.5 319.9 V330.9M565.5 313.2 V328.2M566.5 312.4 V326.4M567.5 310.3 V322.6M568.5 306.1 V318.8M569.5 303.4 V316.8M570.5 299 V312.1M571.5 298 V309.8M572.5 295.2 V307.2M573.5 292.3 V303.7M574.5 290.1 V301.7M575.5 288.9 V297.5M576.5 286.1 V294.1M577.5 282.9 V291.1M578.5 278.1 V289.9M579.5 276.3 V285.5M580.5 273.2 V282.9M581.5 270.1 V278.9M582.5 267.5 V275.3M583.5 264.5 V272.3M584.5 261.3 V269.1M585.5 258.2 V264.9M586.5 254.9 V261.7M587.5 251.5 V259.3M588.5 248.3 V255.6M589.5 245.5 V253.2M590.5 241.3 V250M591.5 238 V247M592.5 234.7 V243.2M593.5 230.3 V241.4M594.5 226.8 V237.3M595.5 223.7 V233.7M596.5 221.5 V230M597.5 217.4 V228.4M598.5 215.2 V224.1M599.5 211.8 V222.8M600.5 207.5 V219.2M601.5 207.2 V218.2M602.5 203.3 V214.6M603.5 199.9 V211M604.5 193.9 V209.8M605.5 191.3 V207M606.5 188.6 V203.4M607.5 186.3 V200.6M608.5 182.9 V195.9M609.5 182.6 V196.1M610.5 180.4 V195.1M611.5 176.4 V192.5M612.5 174.4 V190.8M613.5 174 V187.1M614.5 169.7 V186.3M615.5 169.3 V182M616.5 166.5 V179.4M617.5 162.9 V178.4M618.5 162.1 V173.7M619.5 160.6 V170.4M620.5 157.2 V167.5M621.5 155.8 V167M622.5 150.4 V166.4M623.5 150.3 V163.3M624.5 140.4 V163.6M625.5 143.6 V162.6M626.5 138.5 V164.5M627.5 141.4 V159.9M628.5 141.2 V163M629.5 136.2 V162.7M630.5 139 V161.1M631.5 139.5 V157.5M632.5 138.3 V156.1M633.5 136.7 V155.6M634.5 136.8 V150.7M635.5 138.3 V152.1M636.5 139.9 V149.7M637.5 137.1 V149.9M638.5 138.7 V147.6M639.5 137.7 V145.6M640.5 136.3 V146M641.5 135.3 V145.1M642.5 135.1 V143.4M643.5 133.9 V143.2M644.5 135.2 V142.4M645.5 135.4 V143.7M646.5 134 V146.7M647.5 135.1 V146.8M648.5 135.4 V148.5M649.5 135.3 V151.3M650.5 137 V153.5M651.5 140.8 V148.1M652.5 140.2 V147.9M653.5 140.3 V149.3M654.5 141.8 V154.8M655.5 140.1 V150.5M656.5 140.1 V151.5M657.5 138.2 V153.9M658.5 140.2 V155.8M659.5 140 V157M660.5 141.2 V161.7M661.5 145.7 V167.5M662.5 145.2 V162M663.5 147.9 V163M664.5 149.6 V167.4M665.5 151.6 V165.4M666.5 155.5 V169.3M667.5 153.8 V169M668.5 157.6 V171.1M669.5 160.6 V173.4M670.5 164.4 V176.6M671.5 165.1 V179.1M672.5 168.1 V180.4M673.5 168.5 V184.4M674.5 172.2 V185.5M675.5 172.8 V190.4M676.5 177.5 V189.1M677.5 178.8 V190.5M678.5 180.8 V192.7M679.5 183.3 V197.6M680.5 184.9 V199M681.5 189.4 V200.8M682.5 191.7 V205.9M683.5 191.5 V207.1M684.5 194.3 V208.7M685.5 200.4 V212.3M686.5 203 V215.5M687.5 206 V217.9M688.5 208.5 V221.3M689.5 211.2 V224.8M690.5 213.6 V227.6M691.5 218.8 V229.3M692.5 220.4 V232.8M693.5 224.6 V236.5M694.5 228 V238M695.5 232.6 V241.8M696.5 235.2 V244M697.5 239.2 V247.8M698.5 241.9 V250.2M699.5 245.7 V253.3M700.5 248.8 V256.4M701.5 252.9 V259.9M702.5 256.2 V263.4M703.5 258.4 V266.1M704.5 261.7 V269.9M705.5 264.8 V272.7M706.5 268.9 V276.1M707.5 271.2 V279.2M708.5 274.9 V282.9M709.5 277.7 V286.2M710.5 280.8 V289.9M711.5 282.5 V293.2M712.5 286.3 V296.1M713.5 289.6 V298.2M714.5 293.2 V302M715.5 295.1 V306.7M716.5 297 V310.3M717.5 298.4 V313.9M718.5 302.5 V316.8M719.5 304.5 V318.2M720.5 308.3 V321.2M721.5 311.4 V323.5M722.5 313 V326.9M723.5 317.3 V327.9M724.5 320.3 V331.7M725.5 321.3 V335.1M726.5 326.5 V336.8M727.5 326.5 V338.3M728.5 331.6 V342.1M729.5 333.9 V345.8M730.5 334.9 V346.5M731.5 337 V349.9M732.5 338.3 V353.1M733.5 340 V354.2M734.5 341.1 V356.1M735.5 343.8 V357.7M736.5 344.5 V361.3M737.5 346.4 V363.7M738.5 352.2 V366.3M739.5 353.4 V367.9M740.5 356.8 V368.7M741.5 357.3 V370.4M742.5 358.2 V370.8M743.5 359.6 V371.1M744.5 359.9 V371.8M745.5 358 V372.8M746.5 360 V376M747.5 360.1 V379.8M748.5 361.2 V379.4M749.5 364.5 V380.9M750.5 365.7 V382.3M751.5 365.8 V382.3M752.5 371.7 V389.7M753.5 372.8 V381.9M754.5 372.3 V381.2M755.5 372.2 V383.7M756.5 373.5 V382M757.5 371.5 V384.9M758.5 372.6 V389.1M759.5 373.2 V387M760.5 373.4 V386.9M761.5 369.6 V389.4M762.5 370.6 V386.9M763.5 372.1 V393.5M764.5 372.1 V393.6M765.5 366.6 V391.3M766.5 369 V393.1M767.5 371 V396.3M768.5 369.2 V387.7M769.5 369.7 V384.4M770.5 369.6 V382.9M771.5 365.5 V381.9M772.5 365.6 V381.1M773.5 363.9 V382.8M774.5 359.1 V380.2M775.5 360.2 V382.6M776.5 360.1 V376M777.5 361.4 V374.9M778.5 362.2 V372.9M779.5 361.9 V371.1M780.5 361.3 V372.5M781.5 357.8 V373.8M782.5 354.9 V370.4M783.5 352.6 V367.8M784.5 350.7 V369.4M785.5 348.3 V363.8M786.5 341.3 V360.3M787.5 341.8 V360.3M788.5 338.8 V363.4M789.5 333.3 V356.4M790.5 332.9 V353.7M791.5 333 V349M792.5 328.5 V345.9M793.5 327.9 V342.1M794.5 323.5 V340.7M795.5 324.3 V339.9M796.5 319.5 V335.9M797.5 319.4 V333.4M798.5 316.4 V329.8M799.5 314.4 V326.7M800.5 310.7 V325.9M801.5 310 V321.8M802.5 305.7 V319M803.5 305.9 V315.1M804.5 302.1 V312.9M805.5 299.2 V309.2M806.5 296.8 V305.2M807.5 293.9 V301.4M808.5 291 V299.7M809.5 287.5 V295.3M810.5 285 V292.6M811.5 281 V289M812.5 278.5 V285.8M813.5 274.4 V283.1M814.5 272.1 V279.4M815.5 267.4 V276.3M816.5 265.1 V273M817.5 261.8 V269.7M818.5 259.4 V267.1M819.5 255.8 V263.6M820.5 252.8 V260.6M821.5 249.9 V257.4M822.5 246 V254.3M823.5 241.9 V250.8M824.5 239.3 V248.3M825.5 236.7 V244.2M826.5 232.5 V241M827.5 229.4 V238.8M828.5 225.7 V235.1M829.5 221.5 V232.8M830.5 217.8 V231.2M831.5 216.6 V228.4M832.5 213.3 V226M833.5 209.8 V221.3M834.5 208.2 V219.1M835.5 206.5 V214.5M836.5 204 V212.3M837.5 199.5 V211.7M838.5 197.6 V210.5M839.5 193.5 V205.6M840.5 189.4 V206.2M841.5 188 V202.2M842.5 185.8 V198.6M843.5 182.6 V196.5M844.5 180.6 V192.4M845.5 178.9 V189M846.5 175.9 V187.8M847.5 172.6 V185.3M848.5 169.5 V181.9M849.5 166.3 V180.8M850.5 163.6 V178.4M851.5 161.4 V177M852.5 161.3 V170.7M853.5 159 V168.7M854.5 158.5 V169.3M855.5 156.2 V165.7M856.5 153.9 V164.4M857.5 146 V162.4M858.5 151.3 V161.3M859.5 147.4 V159.8M860.5 145.7 V159M861.5 143 V156.3M862.5 137.8 V155.6M863.5 141 V159.2M864.5 142 V156.9M865.5 140 V156.1M866.5 141.4 V152.4M867.5 141.7 V153.9M868.5 141.4 V153.1M869.5 140.2 V150.5M870.5 136.5 V149.5M871.5 132.4 V152.1M872.5 131.4 V149.9M873.5 125.6 V150.1M874.5 126 V153.9M875.5 126.7 V148M876.5 129.6 V155.8M877.5 128.3 V149.9M878.5 127.5 V153.3M879.5 130.8 V147M880.5 131.7 V150M881.5 128.7 V149.3M882.5 131.3 V147.4M883.5 130.9 V147.4M884.5 130.4 V147.8M885.5 133.3 V151.6M886.5 137.5 V151.5M887.5 134 V154.8M888.5 136.9 V154M889.5 138 V154.7M890.5 137.7 V159M891.5 141.1 V161.1M892.5 140.6 V158.4M893.5 142.7 V155.2M894.5 142.8 V158.2M895.5 146.9 V157.5M896.5 147.8 V161.4M897.5 147 V162.2M898.5 143.4 V167.7M899.5 150.5 V168.7M900.5 153.1 V174.5M901.5 158 V173.6M902.5 159.1 V178.3M903.5 162.2 V175.6M904.5 164.8 V180.1M905.5 166.5 V178.7M906.5 167.3 V180.5M907.5 171.6 V181.7M908.5 172.9 V183.9M909.5 175.5 V186.5M910.5 176.6 V189.5M911.5 179 V192.9M912.5 183.9 V193.1M913.5 186.5 V195.8M914.5 189.2 V198.1M915.5 191.5 V200.4M916.5 195.7 V204.1M917.5 195.9 V207.7M918.5 199.8 V210.7M919.5 202.2 V212.9M920.5 205.2 V217.4M921.5 208.1 V219.9M922.5 213 V223.1M923.5 214.1 V225.9M924.5 218.2 V228.7M925.5 221.1 V231.3M926.5 225.4 V233.7M927.5 226.9 V237.5M928.5 230.9 V240.4M929.5 234.7 V243.6M930.5 236.1 V247.3M931.5 241.6 V249.3M932.5 244.9 V252.4M933.5 248.3 V255.7M934.5 250.9 V258.9M935.5 254 V262.3M936.5 257.9 V265.3M937.5 261.3 V268.6M938.5 263.7 V271.9M939.5 267.3 V274.3M940.5 269.5 V278.3M941.5 273.2 V281.9M942.5 275.2 V284.1M943.5 278.7 V288.5M944.5 281.2 V290.8M945.5 284.8 V294.9M946.5 286 V298M947.5 291.8 V300.7M948.5 295.2 V304.7M949.5 297.4 V306.8M950.5 299.3 V309.8M951.5 304 V312.9M952.5 305.1 V316.9M953.5 309.3 V318.7M954.5 311.3 V321.4M955.5 313.1 V324M956.5 316.6 V325.8M957.5 318.1 V329.5M958.5 321.4 V334.2M959.5 324 V335.2M960.5 325.5 V338.6M961.5 327.5 V342.8M962.5 328.3 V344.9M963.5 329.5 V346.2M964.5 332.9 V350.2M965.5 337 V351.3M966.5 339.1 V352.2M967.5 341.8 V355.3M968.5 345.5 V358.6M969.5 349.6 V358.5M970.5 352.2 V363M971.5 351.3 V365.2M972.5 354.5 V365.8M973.5 350.7 V365.8M974.5 356.5 V369.6M975.5 355.4 V372.8M976.5 358.5 V375.5M977.5 360.2 V373.2M978.5 358.7 V374.3M979.5 359.3 V379M980.5 361.8 V378.5M981.5 365.6 V381.8M982.5 365.2 V382.8M983.5 367.8 V386.1M984.5 367.2 V386.4M985.5 371.3 V384.3M986.5 369.5 V382.5M987.5 371.9 V383.7M988.5 373.4 V381.5M989.5 373.9 V387.4M990.5 371.3 V386M991.5 371.5 V387.8M992.5 371.1 V386.9M993.5 367 V385.3M994.5 368.5 V389.6M995.5 363.9 V393.5M996.5 361.5 V386.5M997.5 368.8 V389.9M998.5 366.9 V388.8M999.5 365.4 V384.1M1000.5 368.8 V380.4M1001.5 366.2 V386.1M1002.5 366.9 V380.2M1003.5 366.3 V378M1004.5 365.5 V379M1005.5 362.6 V381.2M1006.5 361.7 V382.2M1007.5 362 V383.4M1008.5 357.8 V383.4M1009.5 360.7 V382M1010.5 358.4 V375.9M1011.5 357.1 V374.9M1012.5 356.8 V372M1013.5 357.1 V370.6M1014.5 355 V370.2M1015.5 352.9 V365.6M1016.5 351.3 V363.8M1017.5 351.8 V360.7M1018.5 349.2 V359.9M1019.5 342.1 V362M1020.5 344.4 V356.9M1021.5 337.7 V355.8M1022.5 340.5 V354.3M1023.5 338.2 V351.6M1024.5 333.6 V347.3M1025.5 334.2 V345.9M1026.5 330.8 V344.4M1027.5 327.5 V342.1M1028.5 325.1 V340.5M1029.5 322.8 V338.4M1030.5 321.1 V331M1031.5 316.3 V329.9M1032.5 316.9 V327.4M1033.5 313 V324.1M1034.5 309.1 V323.6M1035.5 308.6 V318.6M1036.5 306.2 V315.2M1037.5 302.3 V311.2M1038.5 299.9 V308.7M1039.5 296.7 V305.6M1040.5 293.4 V303.3M1041.5 290.5 V299.4M1042.5 286.7 V297.6M1043.5 282.7 V293.6M1044.5 280.5 V290M1045.5 278.8 V287.1M1046.5 275.6 V283.7M1047.5 271.4 V281M1048.5 268.5 V277.1M1049.5 266.1 V273.7M1050.5 262.9 V270.4M1051.5 259.6 V267.8M1052.5 257 V264.1M1053.5 253.7 V261.6M1054.5 250.8 V258.6M1055.5 247.4 V255.7M1056.5 243.7 V251.7M1057.5 240.6 V249.5M1058.5 236.8 V247.3M1059.5 233.6 V242.3M1060.5 231 V239.5M1061.5 225 V236.1M1062.5 222.2 V233.1M1063.5 220.4 V232.4M1064.5 216.8 V226.7M1065.5 214.1 V226.6M1066.5 210.1 V223.9M1067.5 208.5 V219.4M1068.5 203.5 V221M1069.5 200.6 V216.7M1070.5 198.6 V211.3M1071.5 196.7 V209.2M1072.5 192.4 V206.5M1073.5 191.1 V202.2M1074.5 186.5 V200.1M1075.5 184.4 V197.6M1076.5 179.1 V197.8M1077.5 176.9 V192.2M1078.5 173.8 V193.7M1079.5 173.5 V192.8M1080.5 168.7 V189.1M1081.5 165.5 V187M1082.5 164.4 V182.3M1083.5 163.5 V177M1084.5 163 V176.4M1085.5 163.6 V174.7M1086.5 154.6 V169.6M1087.5 157.9 V169.2M1088.5 156 V166.7M1089.5 152.4 V164.7M1090.5 151.4 V164.4M1091.5 151.4 V163.6M1092.5 149.3 V161M1093.5 148.6 V159.7M1094.5 147.8 V158.2M1095.5 141.8 V159.2M1096.5 146.1 V157.5M1097.5 143.9 V153.6M1098.5 142.5 V151.3M1099.5 143 V149.9M1100.5 138 V149M1101.5 138.1 V147.9M1102.5 137.1 V147.7M1103.5 135.4 V149.8M1104.5 135.5 V149.8M1105.5 135.4 V149.7M1106.5 131.7 V151.4M1107.5 126.9 V152.5M1108.5 129 V150.4M1109.5 132 V150.5M1110.5 130.5 V148.8M1111.5 131.6 V150.9M1112.5 134.8 V147.4M1113.5 133.3 V148.5M1114.5 130.3 V148.5M1115.5 133.7 V149M1116.5 130 V149.1M1117.5 133.5 V149.1M1118.5 133.9 V150.6M1119.5 133.1 V151.6M1120.5 135.8 V153.5M1121.5 138.7 V156.4M1122.5 136.9 V157.2M1123.5 140 V158.5M1124.5 142.3 V159.3M1125.5 142.3 V157.5M1126.5 145.7 V159M1127.5 149.2 V157.6M1128.5 150.3 V158.4M1129.5 151.1 V164.3M1130.5 150.8 V160.1M1131.5 151.9 V160.5M1132.5 153.8 V165.9M1133.5 156.8 V167.5M1134.5 158.1 V169.1M1135.5 158.7 V173.7M1136.5 161.8 V176.3M1137.5 164.4 V178.8M1138.5 167.6 V178.3M1139.5 169.2 V177.8M1140.5 172.4 V180.6M1141.5 174 V182.9M1142.5 175.6 V184.2M1143.5 177.4 V189.7M1144.5 178.3 V191M1145.5 182.2 V193.5M1146.5 183.2 V199M1147.5 185.1 V197.2M1148.5 190.7 V199.5M1149.5 194.6 V203.3M1150.5 195.2 V207.4M1151.5 200 V211.1M1152.5 202.6 V213M1153.5 204.8 V217M1154.5 208.4 V220M1155.5 212.1 V222.5M1156.5 214 V225.7M1157.5 215.3 V228.7M1158.5 220.3 V232.1M1159.5 222.5 V235.2M1160.5 225.6 V237M1161.5 228.1 V240.4M1162.5 232.7 V244M1163.5 236.5 V246.7M1164.5 240.4 V249.2M1165.5 243.2 V251.4M1166.5 246.1 V255.2M1167.5 250.2 V257.5M1168.5 253.6 V260.9M1169.5 256.5 V263.8M1170.5 259.7 V267.3M1171.5 263 V270.7M1172.5 265.8 V274.8M1173.5 269.3 V277.5M1174.5 272.3 V280.3M1175.5 274.2 V285M1176.5 277.1 V288.3M1177.5 280.6 V291.8M1178.5 283.9 V294.4M1179.5 286.8 V298M1180.5 289.7 V301.2M1181.5 293.7 V303.8M1182.5 294.8 V306.4M1183.5 298.4 V310M1184.5 301.7 V311.4M1185.5 302.9 V315.8M1186.5 309 V318.3M1187.5 310.3 V320.3M1188.5 313.4 V322.8M1189.5 314.8 V327.9M1190.5 319.8 V331M1191.5 318.5 V334M1192.5 322.4 V335.7M1193.5 325.1 V339.5M1194.5 321.5 V342.4M1195.5 330.6 V345M1196.5 332.4 V350.6M1197.5 334.6 V346.9M1198.5 336.3 V348.5M1199.5 340.2 V351.4M1200.5 342.7 V355.7M1201.5 344.3 V355.2M1202.5 346.3 V357.3M1203.5 345.9 V360.8M1204.5 346.2 V365.5M1205.5 349.9 V365.9M1206.5 349.6 V367.6M1207.5 352.5 V369.4" stroke="#3a5fac"/><path d="M41.5 256.2 V263.2M42.5 253.5 V260M43.5 250.2 V257.6M44.5 246.4 V254M45.5 242.9 V251.3M46.5 240.1 V248.1M47.5 236.3 V245.5M48.5 231.8 V243M49.5 229.7 V240.6M50.5 226.3 V237.6M51.5 223 V234.3M52.5 219.5 V230M53.5 216.9 V227.1M54.5 214.1 V224.1M55.5 211.4 V220.8M56.5 208.6 V217.4M57.5 206.2 V216.1M58.5 203.3 V216.1M59.5 198.9 V209.7M60.5 194.7 V206.8M61.5 194 V204.5M62.5 191.1 V202.8M63.5 188.3 V201.1M64.5 186.2 V198.8M65.5 184 V194.5M66.5 181.8 V192.7M67.5 180.4 V189.6M68.5 177.1 V187.7M69.5 173.2 V183.8M70.5 170 V182.9M71.5 167.2 V180.9M72.5 162.4 V177.2M73.5 164.6 V174.9M74.5 162.5 V173.9M75.5 160.4 V173.1M76.5 159 V173.5M77.5 155 V169.2M78.5 152 V167.1M79.5 148 V166.7M80.5 148.8 V164.3M81.5 144.8 V164.5M82.5 144 V160M83.5 144.5 V158.8M84.5 141.7 V155.6M85.5 142.4 V154.2M86.5 142.1 V154.2M87.5 140.4 V152.3M88.5 138.1 V152.2M89.5 136.4 V160.7M90.5 134 V154.1M91.5 135.1 V152.5M92.5 137.2 V150.7M93.5 135.6 V149.7M94.5 137.3 V149.6M95.5 130.9 V151M96.5 133 V148.7M97.5 135.2 V144.3M98.5 137.2 V143M99.5 128.9 V143.9M100.5 134.8 V144.3M101.5 135 V141.5M102.5 131.8 V145.1M103.5 133.2 V149.9M104.5 127.9 V150.3M105.5 127.8 V156.8M106.5 128.1 V151.6M107.5 130.8 V155.1M108.5 135.4 V153.8M109.5 136.7 V153.9M110.5 141.6 V149.6M111.5 143.5 V152.6M112.5 144.2 V151.9M113.5 146 V153.2M114.5 146.6 V155.2M115.5 146.6 V157.7M116.5 140.4 V161.4M117.5 146.1 V162.2M118.5 149 V164.5M119.5 145.9 V166.6M120.5 151.6 V167.1M121.5 152.1 V169.5M122.5 154.3 V169.1M123.5 155 V171.1M124.5 157.4 V174.1M125.5 157 V176M126.5 162.4 V173.7M127.5 164.8 V175.7M128.5 166.1 V177.2M129.5 170.4 V179.2M130.5 172.3 V182.8M131.5 173.2 V186.5M132.5 174.2 V189.2M133.5 178.6 V190.8M134.5 179.1 V195.2M135.5 183.9 V199.4M136.5 187.1 V204.2M137.5 190.2 V203.4M138.5 192.7 V204.6M139.5 198.6 V208.3M140.5 200.7 V208.9M141.5 204.6 V212.2M142.5 206.4 V215.7M143.5 208.5 V218.3M144.5 210.6 V220.2M145.5 212.9 V224.7M146.5 216.8 V226.7M147.5 220.4 V231.3M148.5 224.2 V232.9M149.5 227.9 V237M150.5 230.5 V240.3M151.5 234.6 V243.2M152.5 237.8 V247.4M153.5 240 V249.8M154.5 244.6 V252.5M155.5 247.5 V255.5M156.5 250.8 V258.3M157.5 253.8 V261M158.5 257.6 V264.5M159.5 260 V268.2M160.5 263.5 V271.2M161.5 267.2 V274.8M162.5 270.1 V279.1M163.5 272.8 V281.5M164.5 276.4 V284.8M165.5 279.2 V287.4M166.5 282.1 V291.3M167.5 283.5 V297M168.5 285.8 V297.3M169.5 288.5 V300.8M170.5 292.5 V306.5M171.5 294.8 V307.5M172.5 298.3 V310.9M173.5 301.9 V315.2M174.5 304.2 V316.8M175.5 307.2 V321.9M176.5 311.7 V321.4M177.5 313.8 V326M178.5 316.1 V327.7M179.5 318.6 V329.9M180.5 322.7 V332.8M181.5 325.4 V333.8M182.5 325.2 V337.7M183.5 327.6 V342.6M184.5 326.2 V346.6M185.5 326.7 V347.1M186.5 328.2 V348.9M187.5 331.2 V351.9M188.5 337.1 V351.8M189.5 340.6 V352.2M190.5 343.8 V353.6M191.5 345.5 V357.7M192.5 346.8 V358.9M193.5 350.6 V363.5M194.5 348.3 V366.8M195.5 350.5 V367M196.5 350.9 V370.7M197.5 355.2 V370M198.5 353.8 V375M199.5 359.8 V373.9M200.5 361.4 V376.7M201.5 358.8 V376.1M202.5 364.7 V380.9M203.5 364.5 V378.9M204.5 364.1 V384.2M205.5 365.8 V383.6M206.5 365.1 V385.4M207.5 366.8 V386.3M208.5 371.3 V389.5M209.5 371.6 V388.2M210.5 370.4 V392.8M211.5 371.5 V384.8M212.5 371.5 V386.3M213.5 374 V386.8M214.5 371.4 V382.5M215.5 367.9 V382.3M216.5 369.5 V384.4M217.5 369.3 V385.7M218.5 370.9 V384.2M219.5 369.1 V389.6M220.5 366.6 V388.9M221.5 366.8 V394M222.5 369.5 V390.8M223.5 370.3 V388.1M224.5 366 V391M225.5 370.2 V388.8M226.5 364.4 V388.4M227.5 364.3 V390.7M228.5 365.5 V388.9M229.5 364.4 V384.4M230.5 361.8 V385.7M231.5 361.6 V381.7M232.5 358.6 V379.7M233.5 361.4 V379.9M234.5 354.9 V378.7M235.5 351.3 V382.3M236.5 357.2 V373.1M237.5 351.4 V377.8M238.5 350 V371.5M239.5 352.1 V370.1M240.5 346.6 V367.5M241.5 344.1 V366.9M242.5 344.1 V361.7M243.5 343.5 V357M244.5 342.2 V353.1M245.5 339.9 V350.5M246.5 338 V348.2M247.5 336.3 V345.9M248.5 332.5 V343.5M249.5 329.7 V341.6M250.5 328 V338.3M251.5 325.5 V338.7M252.5 321.6 V335.6M253.5 318.8 V332.1M254.5 316.4 V329.8M255.5 315.2 V326.4M256.5 312.7 V321.6M257.5 308.7 V320.9M258.5 305.9 V316.5M259.5 303.1 V312M260.5 298.9 V311.3M261.5 296.3 V308.9M262.5 293.2 V305.1M263.5 292.4 V301M264.5 288.6 V297.1M265.5 285 V294.9M266.5 281.7 V292M267.5 277.8 V289.6M268.5 275.8 V285.2M269.5 273 V282.5M270.5 269.4 V278.3M271.5 266.9 V275.3M272.5 263.3 V271.3M273.5 260.7 V267.8M274.5 257.9 V264.6M275.5 254 V261.3M276.5 251.5 V259M277.5 247.4 V254.9M278.5 244.2 V252.5M279.5 240.5 V249M280.5 238.1 V246.9M281.5 233.7 V243.6M282.5 231.1 V239.9M283.5 226.4 V236.8M284.5 225 V234.8M285.5 220.9 V231.3M286.5 218 V228.4M287.5 214.5 V224.6M288.5 212.1 V221.9M289.5 207.9 V220.4M290.5 204 V215.6M291.5 203.4 V214.2M292.5 198.1 V212M293.5 195.5 V208.6M294.5 194.7 V204.5M295.5 190.2 V201.8M296.5 190 V198.3M297.5 186.8 V195.9M298.5 180.8 V193.7M299.5 181.5 V191.6M300.5 176.9 V189.2M301.5 173.9 V189.1M302.5 169.5 V185.1M303.5 170.9 V183.2M304.5 166.8 V180.7M305.5 164.8 V180.4M306.5 159.4 V175.2M307.5 157.8 V174.6M308.5 153.3 V173.9M309.5 153.8 V171.1M310.5 152.2 V166.5M311.5 150.7 V166.3M312.5 151.1 V165.1M313.5 150.5 V165M314.5 149.7 V160.5M315.5 146.3 V161.7M316.5 139.5 V158M317.5 147 V158.4M318.5 145.5 V155.9M319.5 142.8 V156.9M320.5 140 V157.1M321.5 136.6 V157.4M322.5 136.3 V154.5M323.5 132.9 V153.5M324.5 127.5 V152.6M325.5 133.6 V154.2M326.5 134.2 V147.9M327.5 133.6 V146.2M328.5 131.9 V147.8M329.5 135.2 V144.7M330.5 131.3 V144.4M331.5 133 V145.4M332.5 131.7 V147M333.5 132.1 V145.7M334.5 131.7 V146.3M335.5 132.3 V147.8M336.5 132.6 V148.7M337.5 134.4 V148.8M338.5 133.4 V147.5M339.5 132.7 V147.5M340.5 129.4 V147.9M341.5 134.6 V150.1M342.5 136.7 V152.5M343.5 139.2 V151.8M344.5 143.2 V151M345.5 143.5 V152.6M346.5 145 V153.9M347.5 144.1 V157.3M348.5 143.7 V158.5M349.5 143.6 V160.7M350.5 143.9 V163.5M351.5 144.6 V166.2M352.5 147.3 V164.9M353.5 148.3 V166.3M354.5 153.1 V168.3M355.5 154.5 V170.4M356.5 159.5 V172.3M357.5 161.3 V174.8M358.5 163.4 V174.9M359.5 165.5 V175.2M360.5 167.9 V180M361.5 171.2 V180.1M362.5 172.3 V181M363.5 174.7 V183.1M364.5 175.3 V187.4M365.5 176 V189.6M366.5 179.5 V193.4M367.5 182.6 V196.5M368.5 181.8 V198.5M369.5 187.2 V199.9M370.5 191.7 V202.7M371.5 194 V205M372.5 196 V208.4M373.5 197.7 V209.4M374.5 201.4 V213.6M375.5 204 V217.5M376.5 208.3 V218.5M377.5 210.5 V220.2M378.5 214.3 V223.8M379.5 217.9 V226.5M380.5 220.2 V230.1M381.5 223.3 V232.9M382.5 226.2 V235.8M383.5 229 V238.8M384.5 232.3 V243M385.5 235.8 V245.8M386.5 238.8 V247.7M387.5 242.8 V251.2M388.5 245.5 V254.8M389.5 249.3 V257M390.5 253 V260.2M391.5 255.8 V263.3M392.5 258.8 V266.3M393.5 262.6 V270.5M394.5 265.6 V273.6M395.5 268.7 V276.6M396.5 271.4 V279.6M397.5 274.6 V283.5M398.5 278 V286.7M399.5 281.9 V290.1M400.5 284.6 V292.9M401.5 287.9 V296.1M402.5 290 V298.1M403.5 293.2 V301.2M404.5 297 V304.8M405.5 298.8 V307M406.5 302.1 V310.7M407.5 306.1 V314.5M408.5 308.3 V317.4M409.5 311.4 V320.7M410.5 314.4 V323.4M411.5 317.3 V325.6M412.5 317.5 V329.6M413.5 321.1 V334.6M414.5 318.8 V334.6M415.5 323.3 V342.6M416.5 323.8 V342.6M417.5 329.4 V344.3M418.5 330.7 V347.3M419.5 333.6 V351.8M420.5 330.9 V349M421.5 338.8 V352.1M422.5 342.6 V354.3M423.5 345.8 V356.7M424.5 346.5 V358.3M425.5 348.7 V360.3M426.5 346.5 V362M427.5 349.9 V368.1M428.5 351.4 V367.4M429.5 354.8 V371.8M430.5 354.2 V374.2M431.5 355.7 V377.2M432.5 358.7 V373.8M433.5 361.2 V376.4M434.5 364.4 V374.3M435.5 365.9 V374.1M436.5 367.2 V374.5M437.5 367.6 V375.7M438.5 365.7 V380.8M439.5 368.1 V383.9M440.5 370.8 V383.5M441.5 370.3 V384.4M442.5 370.1 V383.6M443.5 371.1 V382.9M444.5 371.4 V383.8M445.5 368.2 V384M446.5 371.9 V385.5M447.5 370.1 V385.5M448.5 371.2 V382.6M449.5 371 V386.3M450.5 370 V384.5M451.5 371.3 V387.1M452.5 372.2 V386.8M453.5 371.4 V384M454.5 373.1 V384.2M455.5 373.3 V382.4M456.5 369.1 V384.6M457.5 367.4 V386M458.5 361.4 V387.5M459.5 363.9 V384.9M460.5 360 V382.6M461.5 359.6 V384.2M462.5 363.9 V379.6M463.5 362.3 V375.6M464.5 361.6 V375.3M465.5 361.3 V374.3M466.5 361.4 V370.3M467.5 362.2 V369.5M468.5 360.6 V368M469.5 355.5 V369.4M470.5 358.6 V368M471.5 354.7 V365.9M472.5 352.4 V366.5M473.5 347 V370.2M474.5 347.8 V363.7M475.5 346.6 V361M476.5 345.4 V357.7M477.5 343.6 V354M478.5 341.6 V351M479.5 337.3 V351.1M480.5 337.2 V345.3M481.5 335.1 V343.3M482.5 333.2 V341.9M483.5 331 V339.1M484.5 326.9 V337.4M485.5 323.8 V334.7M486.5 320.9 V333.8M487.5 318.3 V329.2M488.5 314 V328.4M489.5 310.8 V325.1M490.5 307.3 V320.5M491.5 304.2 V317.8M492.5 303.5 V313.1M493.5 296.7 V311.1M494.5 296.6 V307.7M495.5 293.7 V303.4M496.5 290.7 V301.4M497.5 289.4 V298.6M498.5 286.3 V294.7M499.5 283.6 V291.4M500.5 279.3 V289.3M501.5 275.9 V285.4M502.5 273 V283M503.5 269.6 V279.3M504.5 267.4 V275.7M505.5 264.9 V273.3M506.5 261.6 V269.7M507.5 258.1 V265.7M508.5 255.1 V262.4M509.5 252.1 V259.6M510.5 248.7 V257.1M511.5 246 V253.3M512.5 241.9 V249.7M513.5 238.5 V247.7M514.5 236.1 V243.6M515.5 232.3 V240.5M516.5 229.3 V237M517.5 223.5 V233.8M518.5 222.1 V232M519.5 219.8 V227.9M520.5 217.5 V224.9M521.5 214 V222.1M522.5 209.9 V219.8M523.5 206.5 V216M524.5 204.1 V213.6M525.5 200.6 V211.1M526.5 197.3 V209.5M527.5 193.8 V206.1M528.5 191.9 V205.3M529.5 188.2 V203.6M530.5 187.4 V199.3M531.5 185.1 V198.2M532.5 182 V195.6M533.5 177.1 V194.8M534.5 175 V192.9M535.5 172 V188.8M536.5 171.1 V185.7M537.5 169.1 V184.6M538.5 168.6 V180.5M539.5 163.7 V177.9M540.5 162.2 V175.7M541.5 160.8 V172M542.5 158.5 V169M543.5 154.5 V169.4M544.5 153 V166.5M545.5 148.9 V165.4M546.5 147.3 V165.5M547.5 147.4 V163M548.5 146.8 V160.2M549.5 146.5 V160.9M550.5 146.7 V157.8M551.5 145.5 V155.9M552.5 145 V153.4M553.5 142.2 V154.3M554.5 143.3 V160.8M555.5 140.9 V153.3M556.5 140 V149.9M557.5 133.3 V150M558.5 135.6 V154.6M559.5 135.9 V149.7M560.5 134.1 V148.4M561.5 132.6 V148.9M562.5 136.7 V148.4M563.5 135.4 V150.6M564.5 135.3 V149.2M565.5 131.8 V152.4M566.5 132.4 V148.9M567.5 130.9 V149.6M568.5 128 V153.8M569.5 130.8 V149.6M570.5 129.8 V149.4M571.5 131.1 V150.8M572.5 132.4 V148.8M573.5 138.3 V147.6M574.5 137.4 V149.9M575.5 137 V148.3M576.5 139.5 V150.1M577.5 137.9 V150.5M578.5 138.3 V150.4M579.5 141 V154.4M580.5 141.7 V158.2M581.5 140.8 V160.1M582.5 142.2 V159.1M583.5 143.8 V162M584.5 144.1 V164.4M585.5 144.4 V173.7M586.5 146.4 V167.9M587.5 147.9 V170.7M588.5 151.1 V169.7M589.5 150.7 V171.2M590.5 154.2 V174.1M591.5 159.1 V172.3M592.5 161.2 V174.9M593.5 159.7 V178.6M594.5 165.8 V181.5M595.5 167.1 V185.4M596.5 168.7 V183.8M597.5 173.4 V187.5M598.5 176.3 V189.8M599.5 179.6 V192.1M600.5 182.6 V192.9M601.5 185.3 V197.6M602.5 186.8 V198.8M603.5 184.3 V202.6M604.5 188.4 V205.1M605.5 195 V206.8M606.5 195.7 V210.7M607.5 199.8 V212.7M608.5 205 V215.4M609.5 207 V218.8M610.5 210 V222.5M611.5 214 V224.5M612.5 216.5 V226.1M613.5 219.6 V228.9M614.5 221.7 V231.6M615.5 224.9 V234.5M616.5 228.1 V238.4M617.5 231.8 V241.2M618.5 235 V245M619.5 237.9 V247.9M620.5 241 V250.6M621.5 244.6 V253.2M622.5 248.7 V256.2M623.5 251.7 V259.6M624.5 255.5 V261.9M625.5 258 V266M626.5 261.1 V269.3M627.5 264.8 V273M628.5 267.6 V275.7M629.5 270.8 V278.6M630.5 274 V282.8M631.5 276.7 V286.4M632.5 278.6 V289.1M633.5 281.9 V292.1M634.5 284.6 V294.8M635.5 287 V300.1M636.5 289.9 V301.9M637.5 294 V307.5M638.5 295.9 V309M639.5 298.4 V311.3M640.5 302.3 V314.7M641.5 305 V316.3M642.5 309.4 V321.9M643.5 312.5 V322.1M644.5 314 V324.7M645.5 315.5 V328.5M646.5 320.2 V331.2M647.5 322.8 V334.1M648.5 324 V334.9M649.5 325.7 V338.3M650.5 329.5 V340.6M651.5 330.8 V349M652.5 331.1 V347.1M653.5 334.2 V348.2M654.5 334.8 V350.5M655.5 339.9 V356.4M656.5 339.3 V358.4M657.5 341.8 V360M658.5 348.3 V362.5M659.5 349.6 V362.9M660.5 353.5 V366.3M661.5 354.5 V366.8M662.5 354.8 V366.4M663.5 355.2 V368.1M664.5 352 V372.2M665.5 354.7 V373.2M666.5 357.1 V373.6M667.5 356.8 V376.8M668.5 360.1 V377.8M669.5 361.2 V378.6M670.5 364.6 V382.6M671.5 366 V380.9M672.5 365.3 V382M673.5 365.7 V386.4M674.5 366.3 V387.6M675.5 367.3 V387.2M676.5 366.8 V389.9M677.5 367.1 V389.5M678.5 372.7 V389.1M679.5 373.6 V388.2M680.5 371.1 V387.3M681.5 374.1 V385.8M682.5 375.6 V383.9M683.5 375.6 V389.5M684.5 375.5 V385.9M685.5 376.3 V385.9M686.5 372.6 V387.8M687.5 368.1 V386.4M688.5 367.9 V384.6M689.5 369.9 V389M690.5 366.3 V386.5M691.5 366 V386.8M692.5 365.6 V383M693.5 367 V384.1M694.5 362.1 V383.6M695.5 364.3 V387.8M696.5 357.6 V384.3M697.5 362.4 V379M698.5 363.1 V377.4M699.5 358.2 V375.7M700.5 358.6 V373.9M701.5 358.4 V370.1M702.5 355.1 V370.7M703.5 352.5 V365.2M704.5 350.7 V362.8M705.5 350.5 V360.5M706.5 348.9 V362.5M707.5 348.8 V362M708.5 349.2 V360.5M709.5 344.7 V359.8M710.5 343.8 V355.1M711.5 340.6 V354M712.5 339.4 V349.6M713.5 335.8 V346.7M714.5 332.4 V343.4M715.5 324 V341.9M716.5 326.9 V340.1M717.5 325.6 V338.6M718.5 322.5 V338.4M719.5 318.4 V335.5M720.5 319.2 V331M721.5 316 V328.9M722.5 312 V325.1M723.5 311.4 V321.7M724.5 308 V318.3M725.5 303.7 V314.6M726.5 302 V312.9M727.5 298.7 V310.9M728.5 295.8 V306.9M729.5 293.7 V304.1M730.5 290.7 V300.9M731.5 287.5 V299M732.5 285.1 V295.6M733.5 279.7 V292.3M734.5 278.4 V288.3M735.5 275 V285.4M736.5 272.7 V281.8M737.5 269.2 V278.4M738.5 265.5 V273.7M739.5 262.3 V270.8M740.5 259.8 V267M741.5 257 V264.2M742.5 253 V260.4M743.5 249.8 V257.5M744.5 246.4 V254.9M745.5 243.2 V251.3M746.5 239.4 V249M747.5 236.1 V246.2M748.5 233 V243.4M749.5 230.6 V239M750.5 225.5 V236.1M751.5 223.4 V234.1M752.5 220.3 V230.5M753.5 216.2 V227.6M754.5 214.3 V224.7M755.5 211.5 V220.3M756.5 209.2 V218.1M757.5 205.8 V215.4M758.5 203.4 V212M759.5 200.5 V210.2M760.5 195.8 V206.9M761.5 193.4 V203.1M762.5 190.7 V201.4M763.5 188.4 V196.7M764.5 186.1 V194.9M765.5 181.6 V195.2M766.5 178 V190.2M767.5 176.9 V189.9M768.5 170.1 V188.9M769.5 169.6 V189.5M770.5 164.3 V185.5M771.5 162.3 V182.7M772.5 158.1 V183.8M773.5 162.7 V184.6M774.5 159.2 V176M775.5 160 V172M776.5 156.9 V171.2M777.5 157.4 V167.5M778.5 152.8 V163.8M779.5 151 V162.7M780.5 146.6 V163.4M781.5 146.4 V163.4M782.5 144.7 V158M783.5 144.7 V157.7M784.5 143.4 V158.7M785.5 143.7 V157.2M786.5 142.2 V154.3M787.5 141.4 V155M788.5 137.1 V155.5M789.5 138.5 V153.7M790.5 130.3 V150.8M791.5 130 V154.3M792.5 131.2 V156M793.5 132.9 V154.1M794.5 128.5 V155.7M795.5 126.4 V155.8M796.5 128.6 V149.8M797.5 131.8 V152.1M798.5 129.8 V152.5M799.5 129.7 V155.1M800.5 131.4 V154.1M801.5 132.3 V158.3M802.5 133.9 V148.7M803.5 134.7 V152.6M804.5 139.2 V147.9M805.5 137.1 V150.7M806.5 137.9 V151.1M807.5 132.9 V155.2M808.5 137 V155.7M809.5 134.2 V159.4M810.5 132.3 V154.4M811.5 136.4 V151.1M812.5 140.2 V152.7M813.5 140 V153.1M814.5 143 V155M815.5 142.7 V157.9M816.5 143.3 V158.2M817.5 145.5 V162.8M818.5 145.5 V162.2M819.5 146.7 V166.9M820.5 150.6 V167.4M821.5 156.4 V166.5M822.5 156.4 V171.2M823.5 158.3 V176.3M824.5 160.6 V176M825.5 161.5 V176.8M826.5 161.6 V181M827.5 167 V179.1M828.5 166.6 V180.8M829.5 168.7 V183.6M830.5 172.8 V183.7M831.5 174.4 V186.2M832.5 176.7 V191.4M833.5 179.9 V192.6M834.5 182.8 V194.4M835.5 187.7 V195.5M836.5 189.6 V199.5M837.5 191.3 V200.6M838.5 194 V203.3M839.5 197.8 V206.5M840.5 198.5 V211.8M841.5 202.1 V211.5M842.5 205.7 V215.1M843.5 209.1 V218.2M844.5 210.2 V222.2M845.5 214.1 V223.7M846.5 216.9 V228.2M847.5 220.1 V229.7M848.5 224.1 V233.2M849.5 227 V236.6M850.5 230.1 V239.1M851.5 234.4 V242.2M852.5 237.4 V245.8M853.5 239.7 V249.1M854.5 243.8 V252.1M855.5 247.3 V254.8M856.5 250.7 V258.5M857.5 253.6 V261.7M858.5 256.7 V264.6M859.5 260.4 V267.7M860.5 263.8 V270.8M861.5 266.8 V274.2M862.5 269.4 V277.9M863.5 272.7 V281.6M864.5 276.1 V284.5M865.5 279.4 V287.3M866.5 281.8 V290.3M867.5 284.4 V294.6M868.5 287.5 V297.6M869.5 291.4 V302.3M870.5 294.3 V304.3M871.5 297.6 V308.6M872.5 300.8 V311.3M873.5 303.9 V314M874.5 306.5 V316.9M875.5 308.8 V320.4M876.5 310.6 V321.6M877.5 313 V324.7M878.5 315 V329.6M879.5 317.6 V331.3M880.5 321.8 V334.5M881.5 323.9 V335.8M882.5 325.8 V339.6M883.5 331.3 V341.9M884.5 331.3 V345.9M885.5 336.1 V349M886.5 339 V349.8M887.5 341.4 V352.9M888.5 342.7 V355.6M889.5 343.7 V359M890.5 347.6 V360.9M891.5 347.2 V363.8M892.5 349.9 V364.3M893.5 351 V365.5M894.5 353.6 V366M895.5 352.8 V369.3M896.5 354.9 V368M897.5 355.7 V373M898.5 359.2 V375.8M899.5 358.9 V374M900.5 360.4 V377.3M901.5 355.6 V375.4M902.5 365.5 V378.1M903.5 367.8 V381.4M904.5 366.2 V383.1M905.5 364.7 V385.5M906.5 364.1 V387.6M907.5 366.9 V389.9M908.5 365.2 V389.7M909.5 363.3 V387.4M910.5 367.2 V387.8M911.5 369.4 V386.4M912.5 369.2 V385.2M913.5 363.3 V389.1M914.5 373 V386.7M915.5 372.5 V387.5M916.5 371 V388.1M917.5 364.8 V388.3M918.5 373.7 V389.9M919.5 372.2 V390.1M920.5 367.8 V388M921.5 368.5 V388.8M922.5 366.5 V389.6M923.5 366.6 V386.6M924.5 370.1 V383.4M925.5 370.2 V383.6M926.5 367.1 V381.4M927.5 367.5 V381.9M928.5 363.9 V382.9M929.5 363.1 V383.1M930.5 364.6 V382.6M931.5 363.8 V380.8M932.5 357.4 V381.9M933.5 358.9 V380.2M934.5 358.3 V375.9M935.5 355.1 V376.2M936.5 349.8 V371.2M937.5 351.9 V368M938.5 353.5 V367.7M939.5 348.5 V366.4M940.5 347.7 V362.2M941.5 345 V361.1M942.5 345.5 V358.8M943.5 341.8 V355.2M944.5 338.4 V353.5M945.5 335.3 V354.3M946.5 337.1 V348.6M947.5 334.3 V345.3M948.5 332.6 V344.5M949.5 327.8 V343M950.5 327.9 V341.3M951.5 320.8 V339.7M952.5 320 V335.7M953.5 318.8 V330.9M954.5 314.5 V329.6M955.5 312.7 V327.7M956.5 311.7 V324.9M957.5 307.9 V320.8M958.5 306.6 V318.2M959.5 304.5 V315.7M960.5 300 V310.8M961.5 297.4 V307.5M962.5 293 V304.6M963.5 290.5 V301.3M964.5 287.7 V299.1M965.5 283.7 V296.1M966.5 280.1 V291.6M967.5 278.8 V288.3M968.5 274.8 V285.3M969.5 271.9 V282.5M970.5 268.8 V278.2M971.5 266.2 V275M972.5 263.9 V272.1M973.5 261.1 V268.4M974.5 257.7 V265M975.5 254.5 V262.3M976.5 250.5 V258.7M977.5 248 V256.4M978.5 243.8 V253M979.5 240.8 V250.3M980.5 238.4 V246.7M981.5 234.9 V242.9M982.5 231.6 V240.2M983.5 229.3 V237.7M984.5 225.8 V234.8M985.5 222.3 V231.6M986.5 218.5 V230M987.5 215.3 V224.9M988.5 211.4 V223.2M989.5 207.3 V221.2M990.5 204.7 V216.2M991.5 201.2 V213.2M992.5 199 V211.9M993.5 195.6 V210.9M994.5 192.2 V207.6M995.5 191.2 V204.4M996.5 186.1 V202.2M997.5 185.1 V201.1M998.5 183.5 V198.1M999.5 180.3 V195.4M1000.5 176.5 V192.8M1001.5 174 V189.4M1002.5 171.8 V187.5M1003.5 171.3 V189.6M1004.5 166.7 V181.8M1005.5 166.9 V178.2M1006.5 160.2 V174.5M1007.5 162.7 V174.5M1008.5 160.5 V171.3M1009.5 158.9 V171.3M1010.5 155.6 V172.1M1011.5 153.3 V170M1012.5 151.2 V167.6M1013.5 145.3 V170.2M1014.5 142.4 V162.9M1015.5 144.3 V162.8M1016.5 141.7 V155.8M1017.5 141.7 V152.7M1018.5 142.1 V151.7M1019.5 141.7 V150M1020.5 140.2 V154.4M1021.5 137.8 V151.8M1022.5 136.7 V152.5M1023.5 135.7 V152.4M1024.5 133 V150.8M1025.5 132.7 V149.7M1026.5 136.8 V152.7M1027.5 132.4 V150.7M1028.5 132.4 V150.1M1029.5 132.1 V150.7M1030.5 132.3 V152.1M1031.5 135.1 V150.2M1032.5 134.9 V146.4M1033.5 133.9 V145.8M1034.5 135.3 V149.2M1035.5 132.2 V149.5M1036.5 134.5 V151.3M1037.5 134.8 V155M1038.5 134.1 V149.4M1039.5 131.7 V153.7M1040.5 135.9 V152.5M1041.5 133.2 V153.6M1042.5 131.9 V159.6M1043.5 129.2 V156.9M1044.5 133.9 V159.4M1045.5 136.3 V153.5M1046.5 139.9 V157.7M1047.5 142.2 V156.1M1048.5 143.6 V158.5M1049.5 146 V158.8M1050.5 148.7 V159.3M1051.5 149.1 V160.7M1052.5 148.7 V160.2M1053.5 151.6 V162.6M1054.5 150.3 V167.4M1055.5 151.3 V170.2M1056.5 154.4 V173.8M1057.5 156.2 V175.5M1058.5 161 V175.8M1059.5 163.8 V178.4M1060.5 164.1 V178.9M1061.5 166.4 V181.5M1062.5 167.5 V185.1M1063.5 170.1 V187.5M1064.5 172.2 V191M1065.5 176 V192.3M1066.5 177.1 V197.2M1067.5 180.3 V198.6M1068.5 182 V199.8M1069.5 183.8 V201.4M1070.5 187.2 V203.1M1071.5 191.9 V204.8M1072.5 195.5 V208M1073.5 198.8 V209.4M1074.5 200 V214M1075.5 204.7 V214.7M1076.5 207.4 V218.1M1077.5 210.5 V220.1M1078.5 213.4 V224.4M1079.5 216.7 V225.3M1080.5 220 V230.4M1081.5 222.4 V233.7M1082.5 225.5 V237.3M1083.5 229.6 V238.1M1084.5 232.4 V241M1085.5 236.1 V245.4M1086.5 239.3 V248.4M1087.5 242.2 V251M1088.5 245 V253.7M1089.5 249.1 V257.9M1090.5 252.7 V260.4M1091.5 256.3 V263.1M1092.5 259.5 V266.9M1093.5 261.8 V269.8M1094.5 265.8 V273.7M1095.5 268.1 V276.8M1096.5 271.6 V279.7M1097.5 273.8 V282.8M1098.5 278 V286.9M1099.5 279.9 V290.5M1100.5 282.8 V292.8M1101.5 286.5 V295.7M1102.5 290.5 V299.4M1103.5 292.1 V303.4M1104.5 297.2 V307.2M1105.5 299.3 V309.3M1106.5 301.5 V313.4M1107.5 305.3 V318.5M1108.5 308.2 V320.8M1109.5 309 V323.5M1110.5 310.8 V327.3M1111.5 313.9 V327.2M1112.5 316 V330.4M1113.5 319.4 V334.3M1114.5 318.9 V335.2M1115.5 325.6 V336.7M1116.5 328.8 V340M1117.5 331.9 V341.7M1118.5 334.6 V346.1M1119.5 337.3 V347.9M1120.5 339.1 V351.5M1121.5 342.2 V353.9M1122.5 343.3 V357.2M1123.5 347.5 V358.5M1124.5 347.7 V359.1M1125.5 350 V362.7M1126.5 352.4 V364.6M1127.5 355.8 V365.1M1128.5 355.8 V369.3M1129.5 356.9 V370.2M1130.5 358 V371.1M1131.5 357.8 V371.8M1132.5 360.5 V373.4M1133.5 362 V373M1134.5 359.3 V376.6M1135.5 364.3 V379M1136.5 364.2 V381.4M1137.5 367.2 V380.8M1138.5 368.4 V381.4M1139.5 368.3 V383.2M1140.5 367.5 V384.3M1141.5 369.2 V385.9M1142.5 367.3 V389.6M1143.5 364.6 V385.6M1144.5 369.7 V386.6M1145.5 371.4 V384.9M1146.5 366.4 V395.9M1147.5 375.1 V388.4M1148.5 367.2 V387.7M1149.5 371.1 V387.9M1150.5 371.2 V388.4M1151.5 371.7 V387.7M1152.5 368.8 V390.7M1153.5 371.7 V395.4M1154.5 374.1 V389.3M1155.5 371.6 V385.6M1156.5 371.7 V385.7M1157.5 372 V385.3M1158.5 368.1 V389.8M1159.5 364.6 V390.3M1160.5 361.2 V385.5M1161.5 354.2 V387.9M1162.5 360.7 V385.9M1163.5 361.7 V385.8M1164.5 356.5 V380.4M1165.5 360 V377.6M1166.5 360.4 V374M1167.5 354.2 V373M1168.5 358.2 V373.7M1169.5 356 V371.2M1170.5 353 V366.4M1171.5 350.6 V365M1172.5 349.5 V366.4M1173.5 351.2 V361.3M1174.5 350.3 V359.5M1175.5 344.2 V360.9M1176.5 342.3 V358.5M1177.5 339.1 V356M1178.5 338.2 V354.2M1179.5 334.2 V352.7M1180.5 335.7 V349.6M1181.5 334.8 V347.3M1182.5 332.2 V346.3M1183.5 329.7 V343.7M1184.5 328.4 V340.6M1185.5 323.3 V336.1M1186.5 322.6 V332.3M1187.5 318.7 V328.5M1188.5 316.3 V326.2M1189.5 312.3 V324.6M1190.5 310.4 V320.1M1191.5 305.4 V318.6M1192.5 303.2 V315.2M1193.5 299.5 V312.7M1194.5 296.3 V310.6M1195.5 294.8 V306.5M1196.5 290.9 V301.8M1197.5 287.4 V300.5M1198.5 285.3 V295.3M1199.5 283 V294.9M1200.5 280.8 V289.7M1201.5 277.7 V285.3M1202.5 274.1 V282.4M1203.5 271.7 V280.1M1204.5 267.7 V276M1205.5 265.1 V273.5M1206.5 261.9 V269.3M1207.5 259.4 V266.7" stroke="#e8308f"/></g>
 <g clip-path="url(#c2)" fill="none" stroke-width="2" stroke="#e8308f"><path d="M41.5 499.7 99.8 437.2 99.8 687 333.2 437.2 333.2 687 566.6 437.2 566.6 687 799.9 437.2 799.9 687 1033.3 437.2 1033.3 687 1208.3 499.7"/></g>
</svg>

<!-- header icons -->
<svg width="40" height="30" style="left:1165px;top:0">
 <g fill="none" stroke="#a8a8a8" stroke-width="1">
  <rect x="6.5" y="12.5" width="8" height="7" rx="1.5"/>
  <path d="M8.5 12.5 V11 Q8.5 9.5 10 9.5 H15 Q16.5 9.5 16.5 11 V16 Q16.5 17.5 15 17.5 H14.5"/>
 </g>
 <path d="M32.5 11 L40 18.5 M40 11 L32.5 18.5" stroke="#bdbdbd" stroke-width="1.1"/>
</svg>
<!-- overview up button -->
<div class="abs" style="left:1193px;top:35px;width:15px;height:15px;background:#555;border:1px solid #a0a0a0"></div>
<svg width="15" height="15" style="left:1193px;top:35px"><path d="M4 9 L7.5 5.5 L11 9" fill="none" stroke="#b8b8b8" stroke-width="1.1"/></svg>
<!-- y labels -->
<div class="t yl" style="top:182px;right:1404px">200</div>
<div class="t yl" style="top:256px;right:1404px">0</div>
<div class="t yl" style="top:329px;right:1404px">-200</div>
<div class="t yl" style="top:444px;right:1404px">6</div>
<div class="t yl" style="top:523px;right:1404px">4</div>
<div class="t yl" style="top:603px;right:1404px">2</div>
<div class="t yl" style="top:683px;right:1404px">0</div>
<!-- x labels -->
<div class="t xl" style="left:35px;top:720px">0 s</div>
<div class="t xl" style="left:259px;top:720px">20 ms</div>
<div class="t xl" style="left:492px;top:720px">40 ms</div>
<div class="t xl" style="left:726px;top:720px">60 ms</div>
<div class="t xl" style="left:959px;top:720px">80 ms</div>
<!-- trigger marker -->
<svg width="20" height="14" style="left:41px;top:253px"><path d="M0 1 H10.5 L16 6.8 L10.5 12.5 H0 Z" fill="#fb8a26"/><text x="1.8" y="11" font-size="9.5" font-weight="bold" font-family="Liberation Sans" fill="#000">T</text></svg>
<!-- legend plot0 -->
<div class="abs" style="left:1087px;top:108px;width:106px;height:64px;background:#a3a3a3"></div>
<div class="abs" style="left:1093px;top:119px;width:15px;height:2px;background:#e8308f"></div>
<div class="abs" style="left:1093px;top:140px;width:15px;height:2px;background:#3d63b5"></div>
<div class="abs" style="left:1093px;top:160px;width:15px;height:2px;background:#6cb535"></div>
<div class="t lg" style="left:1112px;top:115px">(T) Vg_a &nbsp;[V]</div>
<div class="t lg" style="left:1112px;top:136px">Vg_b &nbsp;[V]</div>
<div class="t lg" style="left:1112px;top:156px">Vg_c &nbsp;[V]</div>
<div class="abs lb" style="left:1179px;top:108px"></div>
<div class="abs lb" style="left:1194px;top:108px"></div>
<svg width="30" height="14" style="left:1179px;top:108px"><path d="M3.5 8.5 L7 5 L10.5 8.5" fill="none" stroke="#b0b0b0" stroke-width="1"/><path d="M18.5 3.5 L25.5 10.5 M25.5 3.5 L18.5 10.5" stroke="#5a5a5a" stroke-width="1.2"/></svg>
<!-- legend plot1 -->
<div class="abs" style="left:1066px;top:412px;width:127px;height:24px;background:#a3a3a3"></div>
<div class="abs" style="left:1071px;top:423px;width:16px;height:2px;background:#e8308f"></div>
<div class="t lg" style="left:1091px;top:419px">PLL_angle &nbsp;[rad]</div>
<div class="abs lb" style="left:1179px;top:413px"></div>
<div class="abs lb" style="left:1194px;top:413px"></div>
<svg width="30" height="14" style="left:1179px;top:413px"><path d="M3.5 8.5 L7 5 L10.5 8.5" fill="none" stroke="#b0b0b0" stroke-width="1"/><path d="M18.5 3.5 L25.5 10.5 M25.5 3.5 L18.5 10.5" stroke="#5a5a5a" stroke-width="1.2"/></svg>
<!-- toolbar -->
<div class="btn" style="left:41px;top:738px;width:20px;height:20px"></div>
<div class="btn" style="left:65px;top:738px;width:20px;height:20px"></div>
<div class="btn" style="left:97px;top:738px;width:20px;height:20px"></div>
<div class="btn" style="left:121px;top:738px;width:20px;height:20px"></div>
<div class="btn" style="left:145px;top:738px;width:20px;height:20px"></div>
<div class="btn" style="left:169px;top:738px;width:20px;height:20px"></div>
<div class="btn" style="left:201px;top:738px;width:20px;height:20px"></div>
<div class="btn" style="left:225px;top:738px;width:20px;height:20px"></div>
<div class="btn" style="left:249px;top:738px;width:20px;height:20px"></div>
<svg width="240" height="22" style="left:41px;top:737px">
 <g fill="#e0e0e0" stroke="none">
  <rect x="6" y="7" width="8" height="8" rx="2"/>
 </g>
 <g fill="none" stroke="#e0e0e0" stroke-width="1.3">
  <path d="M28 16.2 H34.5 V5.9 H40"/><path d="M30.5 13.2 L35 8.8 L38.5 12.3"/>
  <path d="M63 8.5 L69 14.5" stroke-width="2.4"/>
 </g>
 <g fill="#e0e0e0">
  <path d="M60.5 6 H67.5 L60.5 13 Z"/><path d="M71 15.8 H64 L71 8.8 Z"/>
  <rect x="85.5" y="10" width="9" height="2.4"/><path d="M83.3 11.2 L87.2 7.8 V14.6 Z M96.7 11.2 L92.8 7.8 V14.6 Z"/>
  <rect x="112.8" y="7" width="2.4" height="9"/><path d="M114 4.5 L110.8 8.3 H117.2 Z M114 18 L110.8 14.2 H117.2 Z"/>
  <path d="M137.9 6.2 L134.3 9.8 H141.5 Z M137.9 17 L134.3 13.4 H141.5 Z"/><rect x="134.5" y="10.9" width="7" height="1" opacity="0.5"/>
 </g>
 <g fill="#e0e0e0">
  <path d="M163.5 5.3 H169.5 L167.5 8.3 H165.5 Z M170.5 5.3 H176.5 L174.5 8.3 H172.5 Z"/>
  <rect x="165.8" y="9.5" width="1.6" height="2.5"/><rect x="165.8" y="13.5" width="1.6" height="2.8"/>
  <rect x="172.8" y="9.5" width="1.6" height="2.5"/><rect x="172.8" y="13.5" width="1.6" height="2.8"/>
 </g>
 <text x="186.6" y="16.2" font-family="Liberation Sans" font-weight="bold" font-size="13" fill="#e0e0e0">f</text>
 <text x="193.5" y="15.8" font-family="Liberation Sans" font-size="9.5" fill="#e0e0e0">()</text>
 <g fill="#e0e0e0"><rect x="212" y="10.8" width="1.6" height="5.4"/><rect x="215.4" y="4.7" width="1.8" height="11.5"/><rect x="219" y="7.1" width="1.6" height="9.1"/><rect x="222.6" y="13.2" width="1.8" height="3"/><rect x="210" y="17.3" width="16.3" height="1.1"/></g>
</svg>
<div class="abs" style="left:281px;top:738px;width:80px;height:20px;background:#087808;border-radius:3px"></div>
<div class="t" style="left:287px;top:742px;font-size:12.5px;font-weight:bold;color:#f0f0f0;letter-spacing:-0.45px">ACQUIRING</div>
<!-- progress -->
<div class="abs" style="left:373px;top:742px;width:778px;height:12px;border:1px solid #8a8a8a;border-radius:3px;background:#505050"></div>
<svg width="330" height="10" style="left:376px;top:744px"><g fill="#8c8c8c"><rect x="0" y="1" width="3" height="7"/><rect x="5" y="1" width="3" height="7"/><rect x="10" y="1" width="3" height="7"/><rect x="15" y="1" width="3" height="7"/><rect x="20" y="1" width="3" height="7"/><rect x="25" y="1" width="3" height="7"/><rect x="30" y="1" width="3" height="7"/><rect x="35" y="1" width="3" height="7"/><rect x="40" y="1" width="3" height="7"/><rect x="45" y="1" width="3" height="7"/><rect x="50" y="1" width="3" height="7"/><rect x="55" y="1" width="3" height="7"/><rect x="60" y="1" width="3" height="7"/><rect x="65" y="1" width="3" height="7"/><rect x="70" y="1" width="3" height="7"/><rect x="75" y="1" width="3" height="7"/><rect x="80" y="1" width="3" height="7"/><rect x="85" y="1" width="3" height="7"/><rect x="90" y="1" width="3" height="7"/><rect x="95" y="1" width="3" height="7"/><rect x="100" y="1" width="3" height="7"/><rect x="105" y="1" width="3" height="7"/><rect x="110" y="1" width="3" height="7"/><rect x="115" y="1" width="3" height="7"/><rect x="120" y="1" width="3" height="7"/><rect x="125" y="1" width="3" height="7"/><rect x="130" y="1" width="3" height="7"/><rect x="135" y="1" width="3" height="7"/><rect x="140" y="1" width="3" height="7"/><rect x="145" y="1" width="3" height="7"/><rect x="150" y="1" width="3" height="7"/><rect x="155" y="1" width="3" height="7"/><rect x="160" y="1" width="3" height="7"/><rect x="165" y="1" width="3" height="7"/><rect x="170" y="1" width="3" height="7"/><rect x="175" y="1" width="3" height="7"/><rect x="180" y="1" width="3" height="7"/><rect x="185" y="1" width="3" height="7"/><rect x="190" y="1" width="3" height="7"/><rect x="195" y="1" width="3" height="7"/><rect x="200" y="1" width="3" height="7"/><rect x="205" y="1" width="3" height="7"/><rect x="210" y="1" width="3" height="7"/><rect x="215" y="1" width="3" height="7"/><rect x="220" y="1" width="3" height="7"/><rect x="225" y="1" width="3" height="7"/><rect x="230" y="1" width="3" height="7"/><rect x="235" y="1" width="3" height="7"/><rect x="240" y="1" width="3" height="7"/><rect x="245" y="1" width="3" height="7"/><rect x="250" y="1" width="3" height="7"/><rect x="255" y="1" width="3" height="7"/><rect x="260" y="1" width="3" height="7"/><rect x="265" y="1" width="3" height="7"/><rect x="270" y="1" width="3" height="7"/><rect x="275" y="1" width="3" height="7"/><rect x="280" y="1" width="3" height="7"/><rect x="285" y="1" width="3" height="7"/><rect x="290" y="1" width="3" height="7"/><rect x="295" y="1" width="3" height="7"/><rect x="300" y="1" width="3" height="7"/><rect x="305" y="1" width="3" height="7"/><rect x="310" y="1" width="3" height="7"/><rect x="315" y="1" width="3" height="7"/><rect x="320" y="1" width="3" height="7"/></g></svg>
<!-- right buttons -->
<div class="btn" style="left:1163px;top:738px;width:20px;height:20px"></div>
<div class="btn" style="left:1188px;top:738px;width:20px;height:20px"></div>
<svg width="50" height="22" style="left:1163px;top:737px">
 <g fill="#e0e0e0"><rect x="4" y="10" width="12" height="1.3"/><rect x="4" y="12.5" width="12" height="1.3"/>
 <path d="M8 6 H12 L10 8.5Z M8 17.5 H12 L10 15Z"/><rect x="9.4" y="4.5" width="1.2" height="2"/><rect x="9.4" y="17" width="1.2" height="2"/></g>
 <path d="M35 6 V18 M29 12 H41" stroke="#e8e8e8" stroke-width="2.2"/>
</svg>
<div class="abs" style="left:1223px;top:1px;width:217px;height:765px;background:#4f4f4f;border:1px solid #8a8a8a;border-radius:5px"></div>
<svg width="11" height="7" style="left:1230px;top:11px"><path d="M1 1 L5.0 5.5 L9 1" fill="none" stroke="#a8a8a8" stroke-width="1.3"/></svg>
<div class="t sh" style="left:1247px;top:8px">SCOPE 1</div>
<div class="abs sec" style="top:27px;height:175px"></div>
<div class="abs" style="left:1228px;top:49px;width:207px;height:1px;background:#8c8c8c"></div>
<svg width="11" height="7" style="left:1232.5px;top:34.5px"><path d="M1 1 L5.0 5.5 L9 1" fill="none" stroke="#a8a8a8" stroke-width="1.6"/></svg>
<div class="t sh" style="left:1249px;top:33px">TRIGGER</div>
<div class="abs sec" style="top:206px;height:160px"></div>
<div class="abs" style="left:1228px;top:228px;width:207px;height:1px;background:#8c8c8c"></div>
<svg width="11" height="7" style="left:1232.5px;top:213.5px"><path d="M1 1 L5.0 5.5 L9 1" fill="none" stroke="#a8a8a8" stroke-width="1.6"/></svg>
<div class="t sh" style="left:1249px;top:212px">TRANSIENT EVENTS</div>
<div class="abs sec" style="top:371px;height:140px"></div>
<div class="abs" style="left:1228px;top:393px;width:207px;height:1px;background:#8c8c8c"></div>
<svg width="11" height="7" style="left:1232.5px;top:378.5px"><path d="M1 1 L5.0 5.5 L9 1" fill="none" stroke="#a8a8a8" stroke-width="1.6"/></svg>
<div class="t sh" style="left:1249px;top:377px">CURSORS</div>
<div class="abs sec" style="top:516px;height:79px"></div>
<div class="abs" style="left:1228px;top:538px;width:207px;height:1px;background:#8c8c8c"></div>
<svg width="11" height="7" style="left:1232.5px;top:523.5px"><path d="M1 1 L5.0 5.5 L9 1" fill="none" stroke="#a8a8a8" stroke-width="1.6"/></svg>
<div class="t sh" style="left:1249px;top:522px">X AXIS</div>
<div class="abs sec" style="top:599px;height:79px"></div>
<div class="abs" style="left:1228px;top:621px;width:207px;height:1px;background:#8c8c8c"></div>
<svg width="11" height="7" style="left:1232.5px;top:606.5px"><path d="M1 1 L5.0 5.5 L9 1" fill="none" stroke="#a8a8a8" stroke-width="1.6"/></svg>
<div class="t sh" style="left:1249px;top:605px">PLOT 0 Y AXIS</div>
<svg width="14" height="14" style="left:1412px;top:603px"><path d="M2.5 6 V3.8 Q2.5 1 5 1 Q7.5 1 7.5 3.8 V4.5" fill="none" stroke="#d8d8d8" stroke-width="1.2"/><rect x="5" y="6" width="8" height="6.5" fill="#d8d8d8"/></svg>
<div class="abs sec" style="top:682px;height:79px"></div>
<div class="abs" style="left:1228px;top:704px;width:207px;height:1px;background:#8c8c8c"></div>
<svg width="11" height="7" style="left:1232.5px;top:689.5px"><path d="M1 1 L5.0 5.5 L9 1" fill="none" stroke="#a8a8a8" stroke-width="1.6"/></svg>
<div class="t sh" style="left:1249px;top:688px">PLOT 1 Y AXIS</div>
<svg width="14" height="14" style="left:1412px;top:686px"><path d="M2.5 6 V3.8 Q2.5 1 5 1 Q7.5 1 7.5 3.8 V4.5" fill="none" stroke="#d8d8d8" stroke-width="1.2"/><rect x="5" y="6" width="8" height="6.5" fill="#d8d8d8"/></svg>
<div class="t lbl" style="left:1233px;top:60px">Window [ms]</div>
<div class="abs inp" style="left:1313px;top:56px;width:118px"></div>
<div class="t it" style="left:1317px;top:61px">100</div>
<div class="t lbl" style="left:1233px;top:84px">Edge</div>
<div class="abs inp" style="left:1313px;top:80px;width:118px"></div>
<div class="t it" style="left:1315px;top:85px">Rising</div>
<div class="abs ddb" style="left:1413px;top:82px"></div>
<svg width="16" height="16" style="left:1413px;top:82px"><path d="M3.8 6 L8 9.8 L12.2 6" fill="none" stroke="#4a4a4a" stroke-width="1.6"/></svg>
<div class="t lbl" style="left:1233px;top:108px">Signal</div>
<div class="abs inp" style="left:1313px;top:104px;width:118px"></div>
<div class="t it" style="left:1315px;top:109px">Vg_a [Plot 0]</div>
<div class="abs ddb" style="left:1413px;top:106px"></div>
<svg width="16" height="16" style="left:1413px;top:106px"><path d="M3.8 6 L8 9.8 L12.2 6" fill="none" stroke="#4a4a4a" stroke-width="1.6"/></svg>
<div class="t lbl" style="left:1233px;top:132px">Mode</div>
<div class="abs inp" style="left:1313px;top:128px;width:118px"></div>
<div class="t it" style="left:1315px;top:133px">Auto</div>
<div class="abs ddb" style="left:1413px;top:130px"></div>
<svg width="16" height="16" style="left:1413px;top:130px"><path d="M3.8 6 L8 9.8 L12.2 6" fill="none" stroke="#4a4a4a" stroke-width="1.6"/></svg>
<div class="t lbl" style="left:1233px;top:156px">Level</div>
<div class="abs inp" style="left:1313px;top:152px;width:118px"></div>
<div class="t it" style="left:1317px;top:157px">0.0000000000</div>
<div class="abs spb" style="left:1413px;top:153px"></div>
<div class="abs spb" style="left:1413px;top:163px"></div>
<svg width="16" height="20" style="left:1413px;top:152px"><path d="M3.5 7 L8 2.8 L12.5 7 M3.5 12.5 L8 16.7 L12.5 12.5" fill="none" stroke="#505050" stroke-width="1.4"/></svg>
<div class="t lbl" style="left:1233px;top:180px">Position [ms]</div>
<div class="abs inp" style="left:1313px;top:176px;width:118px"></div>
<div class="t it" style="left:1317px;top:181px">100.0000000000</div>
<div class="abs spb" style="left:1413px;top:177px"></div>
<div class="abs spb" style="left:1413px;top:187px"></div>
<svg width="16" height="20" style="left:1413px;top:176px"><path d="M3.5 7 L8 2.8 L12.5 7 M3.5 12.5 L8 16.7 L12.5 12.5" fill="none" stroke="#505050" stroke-width="1.4"/></svg>
<div class="t lbl" style="left:1233px;top:239px">Variable</div>
<div class="abs inp" style="left:1313px;top:235px;width:118px"></div>
<div class="t it" style="left:1315px;top:240px">-- none --</div>
<div class="abs ddb" style="left:1413px;top:237px"></div>
<svg width="16" height="16" style="left:1413px;top:237px"><path d="M3.8 6 L8 9.8 L12.2 6" fill="none" stroke="#4a4a4a" stroke-width="1.6"/></svg>
<div class="t lbl" style="left:1233px;top:263px">Position [ms]</div>
<div class="abs inp" style="left:1313px;top:259px;width:118px"></div>
<div class="t itd" style="left:1317px;top:264px">[100, 200, 300]</div>
<div class="t lbl" style="left:1233px;top:287px">Values</div>
<div class="abs inp" style="left:1313px;top:283px;width:118px"></div>
<div class="t itd" style="left:1317px;top:288px">[1.0, -4.0, 3.0]</div>
<div class="t lbl" style="left:1233px;top:311px">Interpolation</div>
<div class="abs inp" style="left:1313px;top:307px;width:118px"></div>
<div class="t it" style="left:1315px;top:312px">Steps</div>
<div class="abs ddb" style="left:1413px;top:309px"></div>
<svg width="16" height="16" style="left:1413px;top:309px"><path d="M3.8 6 L8 9.8 L12.2 6" fill="none" stroke="#4a4a4a" stroke-width="1.6"/></svg>
<div class="abs" style="left:1228px;top:331px;width:207px;height:1px;background:#8c8c8c"></div>
<div class="abs btn2" style="left:1234px;top:340px"></div>
<div class="abs btn2" style="left:1261px;top:340px"></div>
<div class="abs btn2" style="left:1288px;top:340px"></div>
<svg width="80" height="22" style="left:1234px;top:340px"><path d="M6 10.5 H15 M10.5 6 V15" stroke="#dcdcdc" stroke-width="2.2" stroke-linecap="round"/><path d="M33 10.5 H43" stroke="#dcdcdc" stroke-width="2.2" stroke-linecap="round"/><path d="M56.5 10.8 Q65 2.5 73.5 10.8 Q65 19 56.5 10.8 Z" fill="none" stroke="#cfcfcf" stroke-width="1.1"/><circle cx="65" cy="10.8" r="2.3" fill="#cfcfcf"/><path d="M58 16.5 L71 4" stroke="#cfcfcf" stroke-width="1.2"/></svg>
<div class="abs" style="left:1327px;top:338px;width:104px;height:24px;background:#7a7a7a;border:1px solid #383838;border-radius:4px"></div>
<div class="t" style="left:1342px;top:346px;font-size:12.5px;color:#ececec;letter-spacing:-0.1px">Fire transient</div>
<div class="t lbl" style="left:1233px;top:404px">Enable cursors</div>
<div class="abs btn2" style="left:1316px;top:400px;width:20px;height:20px"></div>
<svg width="20" height="20" style="left:1316px;top:400px"><g fill="#e0e0e0"><path d="M4 4 H10 L8 7 H6 Z M10.5 4 H16.5 L14.5 7 H12.5 Z"/><rect x="6.3" y="8" width="1.4" height="2.5"/><rect x="6.3" y="12" width="1.4" height="2.5"/><rect x="12.8" y="8" width="1.4" height="2.5"/><rect x="12.8" y="12" width="1.4" height="2.5"/></g></svg>
<div class="t lbl" style="left:1233px;top:428px">Cursor 1 [ms]</div>
<div class="abs inp" style="left:1316px;top:424px;width:115px"></div>
<div class="t itd" style="left:1320px;top:429px">100.000000</div>
<div class="abs spb" style="left:1413px;top:425px"></div>
<div class="abs spb" style="left:1413px;top:435px"></div>
<svg width="16" height="20" style="left:1413px;top:424px"><path d="M3.5 7 L8 2.8 L12.5 7 M3.5 12.5 L8 16.7 L12.5 12.5" fill="none" stroke="#6a6a6a" stroke-width="1.4"/></svg>
<div class="t lbl" style="left:1233px;top:452px">Cursor 2 [ms]</div>
<div class="abs inp" style="left:1316px;top:448px;width:115px"></div>
<div class="t itd" style="left:1320px;top:453px">100.000000</div>
<div class="abs spb" style="left:1413px;top:449px"></div>
<div class="abs spb" style="left:1413px;top:459px"></div>
<svg width="16" height="20" style="left:1413px;top:448px"><path d="M3.5 7 L8 2.8 L12.5 7 M3.5 12.5 L8 16.7 L12.5 12.5" fill="none" stroke="#6a6a6a" stroke-width="1.4"/></svg>
<div class="t lbl" style="left:1233px;top:473px">ΔT</div>
<div class="t lbl" style="left:1233px;top:492px">1/ΔT</div>
<div class="abs" style="left:1319px;top:479px;width:6px;height:1px;background:#d0d0d0"></div>
<div class="abs" style="left:1319px;top:498px;width:6px;height:1px;background:#d0d0d0"></div>
<div class="t lbl" style="left:1233px;top:549px">Max [ns]</div>
<div class="abs inp" style="left:1298px;top:545px;width:133px"></div>
<div class="t it" style="left:1302px;top:550px">100000000.00000</div>
<div class="abs spb" style="left:1413px;top:546px"></div>
<div class="abs spb" style="left:1413px;top:556px"></div>
<svg width="16" height="20" style="left:1413px;top:545px"><path d="M3.5 7 L8 2.8 L12.5 7 M3.5 12.5 L8 16.7 L12.5 12.5" fill="none" stroke="#505050" stroke-width="1.4"/></svg>
<div class="t lbl" style="left:1233px;top:573px">Min [ns]</div>
<div class="abs inp" style="left:1298px;top:569px;width:133px"></div>
<div class="t it" style="left:1302px;top:574px">0.00000</div>
<div class="abs spb" style="left:1413px;top:570px"></div>
<div class="abs spb" style="left:1413px;top:580px"></div>
<svg width="16" height="20" style="left:1413px;top:569px"><path d="M3.5 7 L8 2.8 L12.5 7 M3.5 12.5 L8 16.7 L12.5 12.5" fill="none" stroke="#505050" stroke-width="1.4"/></svg>
<div class="t lbl" style="left:1233px;top:632px">Max</div>
<div class="abs inp" style="left:1298px;top:628px;width:133px"></div>
<div class="t it" style="left:1302px;top:633px">413.39966</div>
<div class="abs spb" style="left:1413px;top:629px"></div>
<div class="abs spb" style="left:1413px;top:639px"></div>
<svg width="16" height="20" style="left:1413px;top:628px"><path d="M3.5 7 L8 2.8 L12.5 7 M3.5 12.5 L8 16.7 L12.5 12.5" fill="none" stroke="#505050" stroke-width="1.4"/></svg>
<div class="t lbl" style="left:1233px;top:656px">Min</div>
<div class="abs inp" style="left:1298px;top:652px;width:133px"></div>
<div class="t it" style="left:1302px;top:657px">-403.86072</div>
<div class="abs spb" style="left:1413px;top:653px"></div>
<div class="abs spb" style="left:1413px;top:663px"></div>
<svg width="16" height="20" style="left:1413px;top:652px"><path d="M3.5 7 L8 2.8 L12.5 7 M3.5 12.5 L8 16.7 L12.5 12.5" fill="none" stroke="#505050" stroke-width="1.4"/></svg>
<div class="t lbl" style="left:1233px;top:715px">Max</div>
<div class="abs inp" style="left:1298px;top:711px;width:133px"></div>
<div class="t it" style="left:1302px;top:716px">6.91000</div>
<div class="abs spb" style="left:1413px;top:712px"></div>
<div class="abs spb" style="left:1413px;top:722px"></div>
<svg width="16" height="20" style="left:1413px;top:711px"><path d="M3.5 7 L8 2.8 L12.5 7 M3.5 12.5 L8 16.7 L12.5 12.5" fill="none" stroke="#505050" stroke-width="1.4"/></svg>
<div class="t lbl" style="left:1233px;top:739px">Min</div>
<div class="abs inp" style="left:1298px;top:735px;width:133px"></div>
<div class="t it" style="left:1302px;top:740px">-0.62742</div>
<div class="abs spb" style="left:1413px;top:736px"></div>
<div class="abs spb" style="left:1413px;top:746px"></div>
<svg width="16" height="20" style="left:1413px;top:735px"><path d="M3.5 7 L8 2.8 L12.5 7 M3.5 12.5 L8 16.7 L12.5 12.5" fill="none" stroke="#505050" stroke-width="1.4"/></svg>
<div class="abs" style="left:0;top:774px;width:71px;height:23px;background:#5e5e5e;border-radius:5px 5px 0 0"></div>
<div class="t" style="left:6px;top:781px;font-size:11px;color:#9c9c9c;letter-spacing:0.6px">LOGS</div>
<svg width="16" height="16" style="left:48px;top:777px"><circle cx="8" cy="8" r="7" fill="#2f8be0"/><rect x="7" y="6.5" width="2.2" height="6" fill="#fff"/><rect x="7" y="3.2" width="2.2" height="2.2" fill="#fff"/></svg>
<div class="abs" style="left:73px;top:774px;width:67px;height:24px;background:#4d4d4d;border:1px solid #8a8a8a;border-bottom:none;border-radius:5px 5px 0 0"></div>
<div class="t" style="left:82px;top:782px;font-size:12px;color:#e0e0e0;letter-spacing:-0.4px">SCOPE 1</div>
<div class="abs" style="left:1199px;top:774px;width:16px;height:16px;background:#4a4a4a;border-radius:3px"></div>
<svg width="16" height="16" style="left:1199px;top:774px"><path d="M4.5 6.5 L8 10 L11.5 6.5" fill="none" stroke="#b4b4b4" stroke-width="1.3"/></svg>
<div class="abs" style="left:0;top:796px;width:1215px;height:202px;background:#414141;border:1px solid #8a8a8a;border-bottom:none;border-radius:0 4px 0 0"></div>
<div class="abs" style="left:73px;top:796px;width:67px;height:1px;background:#4d4d4d"></div>
<div class="abs" style="left:1px;top:797px;width:1213px;height:28px;background:#4f4f4f"></div>
<div class="abs" style="left:1px;top:825px;width:1213px;height:1px;background:#383838"></div>
<div class="t th" style="left:1px;top:807px;width:40px;text-align:center">Style</div>
<div class="t th" style="left:41px;top:807px;width:164px;text-align:center">Variable</div>
<div class="t th" style="left:205px;top:807px;width:100px;text-align:center">Plot</div>
<div class="t th" style="left:305px;top:807px;width:100px;text-align:center">Scale</div>
<div class="t th" style="left:405px;top:807px;width:100px;text-align:center">Offset</div>
<div class="t th" style="left:505px;top:807px;width:100px;text-align:center">Units</div>
<div class="t th" style="left:605px;top:807px;width:100px;text-align:center">Min</div>
<div class="t th" style="left:705px;top:807px;width:100px;text-align:center">Max</div>
<div class="t th" style="left:805px;top:807px;width:100px;text-align:center">Avg</div>
<div class="t th" style="left:905px;top:807px;width:100px;text-align:center">RMS</div>
<div class="t th" style="left:1005px;top:807px;width:100px;text-align:center">Pk-Pk</div>
<div class="abs" style="left:40px;top:797px;width:1px;height:155px;background:#383838"></div>
<div class="abs" style="left:204px;top:797px;width:1px;height:155px;background:#383838"></div>
<div class="abs" style="left:304px;top:797px;width:1px;height:155px;background:#383838"></div>
<div class="abs" style="left:404px;top:797px;width:1px;height:155px;background:#383838"></div>
<div class="abs" style="left:504px;top:797px;width:1px;height:155px;background:#383838"></div>
<div class="abs" style="left:604px;top:797px;width:1px;height:155px;background:#383838"></div>
<div class="abs" style="left:704px;top:797px;width:1px;height:155px;background:#383838"></div>
<div class="abs" style="left:804px;top:797px;width:1px;height:155px;background:#383838"></div>
<div class="abs" style="left:904px;top:797px;width:1px;height:155px;background:#383838"></div>
<div class="abs" style="left:1004px;top:797px;width:1px;height:155px;background:#383838"></div>
<div class="abs" style="left:1104px;top:797px;width:1px;height:155px;background:#383838"></div>
<div class="abs" style="left:1px;top:913px;width:1213px;height:9px;background:#4d4d4d"></div>
<div class="abs" style="left:1px;top:854px;width:1213px;height:1px;background:#383838"></div>
<div class="abs" style="left:12px;top:831px;width:20px;height:19px;background:#000;border:1px solid #5a5a5a;border-radius:3px"></div>
<div class="abs" style="left:13px;top:839px;width:18px;height:2px;background:#e8308f"></div>
<div class="t td" style="left:49px;top:835px">Vg_a</div>
<svg width="18" height="14" style="left:159px;top:833px"><path d="M1.5 7 Q9 -2.5 16.5 7 Q9 16.5 1.5 7 Z" fill="#e6e6e6"/><circle cx="9" cy="7" r="3.2" fill="#414141"/><circle cx="9" cy="7" r="2" fill="#e6e6e6"/></svg>
<div class="abs" style="left:182px;top:832px;width:16px;height:16px;background:#888888;border-radius:2px"></div>
<svg width="16" height="16" style="left:182px;top:832px"><path d="M4 4 L12 12 M12 4 L4 12" stroke="#444" stroke-width="1.5"/></svg>
<div class="abs" style="left:209px;top:832px;width:91px;height:19px;background:#4a4a4a;border-radius:3px"></div>
<div class="t td" style="left:211px;top:835px">Plot 0</div>
<div class="abs ddb" style="left:282px;top:833px"></div>
<svg width="16" height="16" style="left:282px;top:833px"><path d="M3.8 6 L8 9.8 L12.2 6" fill="none" stroke="#4a4a4a" stroke-width="1.6"/></svg>
<div class="abs" style="left:309px;top:832px;width:91px;height:19px;background:#4a4a4a;border-radius:3px"></div>
<div class="t td" style="left:313px;top:835px">1</div>
<div class="abs spb" style="left:382px;top:832px"></div>
<div class="abs spb" style="left:382px;top:841px"></div>
<svg width="16" height="20" style="left:382px;top:831px"><path d="M3.5 7.5 L8 3.5 L12.5 7.5 M3.5 12 L8 16 L12.5 12" fill="none" stroke="#505050" stroke-width="1.3"/></svg>
<div class="abs" style="left:409px;top:832px;width:91px;height:19px;background:#4a4a4a;border-radius:3px"></div>
<div class="t td" style="left:413px;top:835px">0</div>
<div class="abs spb" style="left:482px;top:832px"></div>
<div class="abs spb" style="left:482px;top:841px"></div>
<svg width="16" height="20" style="left:482px;top:831px"><path d="M3.5 7.5 L8 3.5 L12.5 7.5 M3.5 12 L8 16 L12.5 12" fill="none" stroke="#505050" stroke-width="1.3"/></svg>
<div class="t td" style="left:512px;top:835px">V</div>
<div class="t td" style="left:604px;top:835px;width:100px;text-align:right;padding-right:9px;font-size:11.5px">-362.827 [V]</div>
<div class="t td" style="left:704px;top:835px;width:100px;text-align:right;padding-right:9px;font-size:11.5px">367.158 [V]</div>
<div class="t td" style="left:804px;top:835px;width:100px;text-align:right;padding-right:22px;font-size:11.5px">42.352 …</div>
<div class="t td" style="left:904px;top:835px;width:100px;text-align:right;padding-right:9px;font-size:11.5px">230.101 [V]</div>
<div class="t td" style="left:1004px;top:835px;width:100px;text-align:right;padding-right:9px;font-size:11.5px">729.985 [V]</div>
<div class="abs" style="left:1px;top:883px;width:1213px;height:1px;background:#383838"></div>
<div class="abs" style="left:12px;top:860px;width:20px;height:19px;background:#000;border:1px solid #5a5a5a;border-radius:3px"></div>
<div class="abs" style="left:13px;top:868px;width:18px;height:2px;background:#3d63b5"></div>
<div class="t td" style="left:49px;top:864px">Vg_b</div>
<svg width="18" height="14" style="left:159px;top:862px"><path d="M1.5 7 Q9 -2.5 16.5 7 Q9 16.5 1.5 7 Z" fill="#e6e6e6"/><circle cx="9" cy="7" r="3.2" fill="#414141"/><circle cx="9" cy="7" r="2" fill="#e6e6e6"/></svg>
<div class="abs" style="left:182px;top:861px;width:16px;height:16px;background:#888888;border-radius:2px"></div>
<svg width="16" height="16" style="left:182px;top:861px"><path d="M4 4 L12 12 M12 4 L4 12" stroke="#444" stroke-width="1.5"/></svg>
<div class="abs" style="left:209px;top:861px;width:91px;height:19px;background:#4a4a4a;border-radius:3px"></div>
<div class="t td" style="left:211px;top:864px">Plot 0</div>
<div class="abs ddb" style="left:282px;top:862px"></div>
<svg width="16" height="16" style="left:282px;top:862px"><path d="M3.8 6 L8 9.8 L12.2 6" fill="none" stroke="#4a4a4a" stroke-width="1.6"/></svg>
<div class="abs" style="left:309px;top:861px;width:91px;height:19px;background:#4a4a4a;border-radius:3px"></div>
<div class="t td" style="left:313px;top:864px">1</div>
<div class="abs spb" style="left:382px;top:861px"></div>
<div class="abs spb" style="left:382px;top:870px"></div>
<svg width="16" height="20" style="left:382px;top:860px"><path d="M3.5 7.5 L8 3.5 L12.5 7.5 M3.5 12 L8 16 L12.5 12" fill="none" stroke="#505050" stroke-width="1.3"/></svg>
<div class="abs" style="left:409px;top:861px;width:91px;height:19px;background:#4a4a4a;border-radius:3px"></div>
<div class="t td" style="left:413px;top:864px">0</div>
<div class="abs spb" style="left:482px;top:861px"></div>
<div class="abs spb" style="left:482px;top:870px"></div>
<svg width="16" height="20" style="left:482px;top:860px"><path d="M3.5 7.5 L8 3.5 L12.5 7.5 M3.5 12 L8 16 L12.5 12" fill="none" stroke="#505050" stroke-width="1.3"/></svg>
<div class="t td" style="left:512px;top:864px">V</div>
<div class="t td" style="left:604px;top:864px;width:100px;text-align:right;padding-right:9px;font-size:11.5px">-361.480 [V]</div>
<div class="t td" style="left:704px;top:864px;width:100px;text-align:right;padding-right:9px;font-size:11.5px">364.897 [V]</div>
<div class="t td" style="left:804px;top:864px;width:100px;text-align:right;padding-right:22px;font-size:11.5px">-168.300 …</div>
<div class="t td" style="left:904px;top:864px;width:100px;text-align:right;padding-right:9px;font-size:11.5px">230.116 [V]</div>
<div class="t td" style="left:1004px;top:864px;width:100px;text-align:right;padding-right:9px;font-size:11.5px">726.377 [V]</div>
<div class="abs" style="left:1px;top:912px;width:1213px;height:1px;background:#383838"></div>
<div class="abs" style="left:12px;top:889px;width:20px;height:19px;background:#000;border:1px solid #5a5a5a;border-radius:3px"></div>
<div class="abs" style="left:13px;top:897px;width:18px;height:2px;background:#6cb535"></div>
<div class="t td" style="left:49px;top:893px">Vg_c</div>
<svg width="18" height="14" style="left:159px;top:891px"><path d="M1.5 7 Q9 -2.5 16.5 7 Q9 16.5 1.5 7 Z" fill="#e6e6e6"/><circle cx="9" cy="7" r="3.2" fill="#414141"/><circle cx="9" cy="7" r="2" fill="#e6e6e6"/></svg>
<div class="abs" style="left:182px;top:890px;width:16px;height:16px;background:#888888;border-radius:2px"></div>
<svg width="16" height="16" style="left:182px;top:890px"><path d="M4 4 L12 12 M12 4 L4 12" stroke="#444" stroke-width="1.5"/></svg>
<div class="abs" style="left:209px;top:890px;width:91px;height:19px;background:#4a4a4a;border-radius:3px"></div>
<div class="t td" style="left:211px;top:893px">Plot 0</div>
<div class="abs ddb" style="left:282px;top:891px"></div>
<svg width="16" height="16" style="left:282px;top:891px"><path d="M3.8 6 L8 9.8 L12.2 6" fill="none" stroke="#4a4a4a" stroke-width="1.6"/></svg>
<div class="abs" style="left:309px;top:890px;width:91px;height:19px;background:#4a4a4a;border-radius:3px"></div>
<div class="t td" style="left:313px;top:893px">1</div>
<div class="abs spb" style="left:382px;top:890px"></div>
<div class="abs spb" style="left:382px;top:899px"></div>
<svg width="16" height="20" style="left:382px;top:889px"><path d="M3.5 7.5 L8 3.5 L12.5 7.5 M3.5 12 L8 16 L12.5 12" fill="none" stroke="#505050" stroke-width="1.3"/></svg>
<div class="abs" style="left:409px;top:890px;width:91px;height:19px;background:#4a4a4a;border-radius:3px"></div>
<div class="t td" style="left:413px;top:893px">0</div>
<div class="abs spb" style="left:482px;top:890px"></div>
<div class="abs spb" style="left:482px;top:899px"></div>
<svg width="16" height="20" style="left:482px;top:889px"><path d="M3.5 7.5 L8 3.5 L12.5 7.5 M3.5 12 L8 16 L12.5 12" fill="none" stroke="#505050" stroke-width="1.3"/></svg>
<div class="t td" style="left:512px;top:893px">V</div>
<div class="t td" style="left:604px;top:893px;width:100px;text-align:right;padding-right:9px;font-size:11.5px">-362.944 [V]</div>
<div class="t td" style="left:704px;top:893px;width:100px;text-align:right;padding-right:9px;font-size:11.5px">360.638 [V]</div>
<div class="t td" style="left:804px;top:893px;width:100px;text-align:right;padding-right:22px;font-size:11.5px">125.948 …</div>
<div class="t td" style="left:904px;top:893px;width:100px;text-align:right;padding-right:9px;font-size:11.5px">229.851 [V]</div>
<div class="t td" style="left:1004px;top:893px;width:100px;text-align:right;padding-right:9px;font-size:11.5px">723.582 [V]</div>
<div class="abs" style="left:1px;top:951px;width:1213px;height:1px;background:#383838"></div>
<div class="abs" style="left:12px;top:928px;width:20px;height:19px;background:#000;border:1px solid #5a5a5a;border-radius:3px"></div>
<div class="abs" style="left:13px;top:936px;width:18px;height:2px;background:#e8308f"></div>
<div class="t td" style="left:49px;top:932px">PLL_angle</div>
<svg width="18" height="14" style="left:159px;top:930px"><path d="M1.5 7 Q9 -2.5 16.5 7 Q9 16.5 1.5 7 Z" fill="#e6e6e6"/><circle cx="9" cy="7" r="3.2" fill="#414141"/><circle cx="9" cy="7" r="2" fill="#e6e6e6"/></svg>
<div class="abs" style="left:182px;top:929px;width:16px;height:16px;background:#888888;border-radius:2px"></div>
<svg width="16" height="16" style="left:182px;top:929px"><path d="M4 4 L12 12 M12 4 L4 12" stroke="#444" stroke-width="1.5"/></svg>
<div class="abs" style="left:209px;top:929px;width:91px;height:19px;background:#4a4a4a;border-radius:3px"></div>
<div class="t td" style="left:211px;top:932px">Plot 1</div>
<div class="abs ddb" style="left:282px;top:930px"></div>
<svg width="16" height="16" style="left:282px;top:930px"><path d="M3.8 6 L8 9.8 L12.2 6" fill="none" stroke="#4a4a4a" stroke-width="1.6"/></svg>
<div class="abs" style="left:309px;top:929px;width:91px;height:19px;background:#4a4a4a;border-radius:3px"></div>
<div class="t td" style="left:313px;top:932px">1</div>
<div class="abs spb" style="left:382px;top:929px"></div>
<div class="abs spb" style="left:382px;top:938px"></div>
<svg width="16" height="20" style="left:382px;top:928px"><path d="M3.5 7.5 L8 3.5 L12.5 7.5 M3.5 12 L8 16 L12.5 12" fill="none" stroke="#505050" stroke-width="1.3"/></svg>
<div class="abs" style="left:409px;top:929px;width:91px;height:19px;background:#4a4a4a;border-radius:3px"></div>
<div class="t td" style="left:413px;top:932px">0</div>
<div class="abs spb" style="left:482px;top:929px"></div>
<div class="abs spb" style="left:482px;top:938px"></div>
<svg width="16" height="20" style="left:482px;top:928px"><path d="M3.5 7.5 L8 3.5 L12.5 7.5 M3.5 12 L8 16 L12.5 12" fill="none" stroke="#505050" stroke-width="1.3"/></svg>
<div class="t td" style="left:512px;top:932px">rad</div>
<div class="t td" style="left:604px;top:932px;width:100px;text-align:right;padding-right:22px;font-size:11.5px">468.254 …</div>
<div class="t td" style="left:704px;top:932px;width:100px;text-align:right;padding-right:22px;font-size:11.5px">6.281 …</div>
<div class="t td" style="left:804px;top:932px;width:100px;text-align:right;padding-right:22px;font-size:11.5px">3.141 …</div>
<div class="t td" style="left:904px;top:932px;width:100px;text-align:right;padding-right:22px;font-size:11.5px">3.627 …</div>
<div class="t td" style="left:1004px;top:932px;width:100px;text-align:right;padding-right:22px;font-size:11.5px">6.280 …</div>
<div class="abs" style="left:0;top:997px;width:1215px;height:1px;background:#8a8a8a"></div>
</body></html>
